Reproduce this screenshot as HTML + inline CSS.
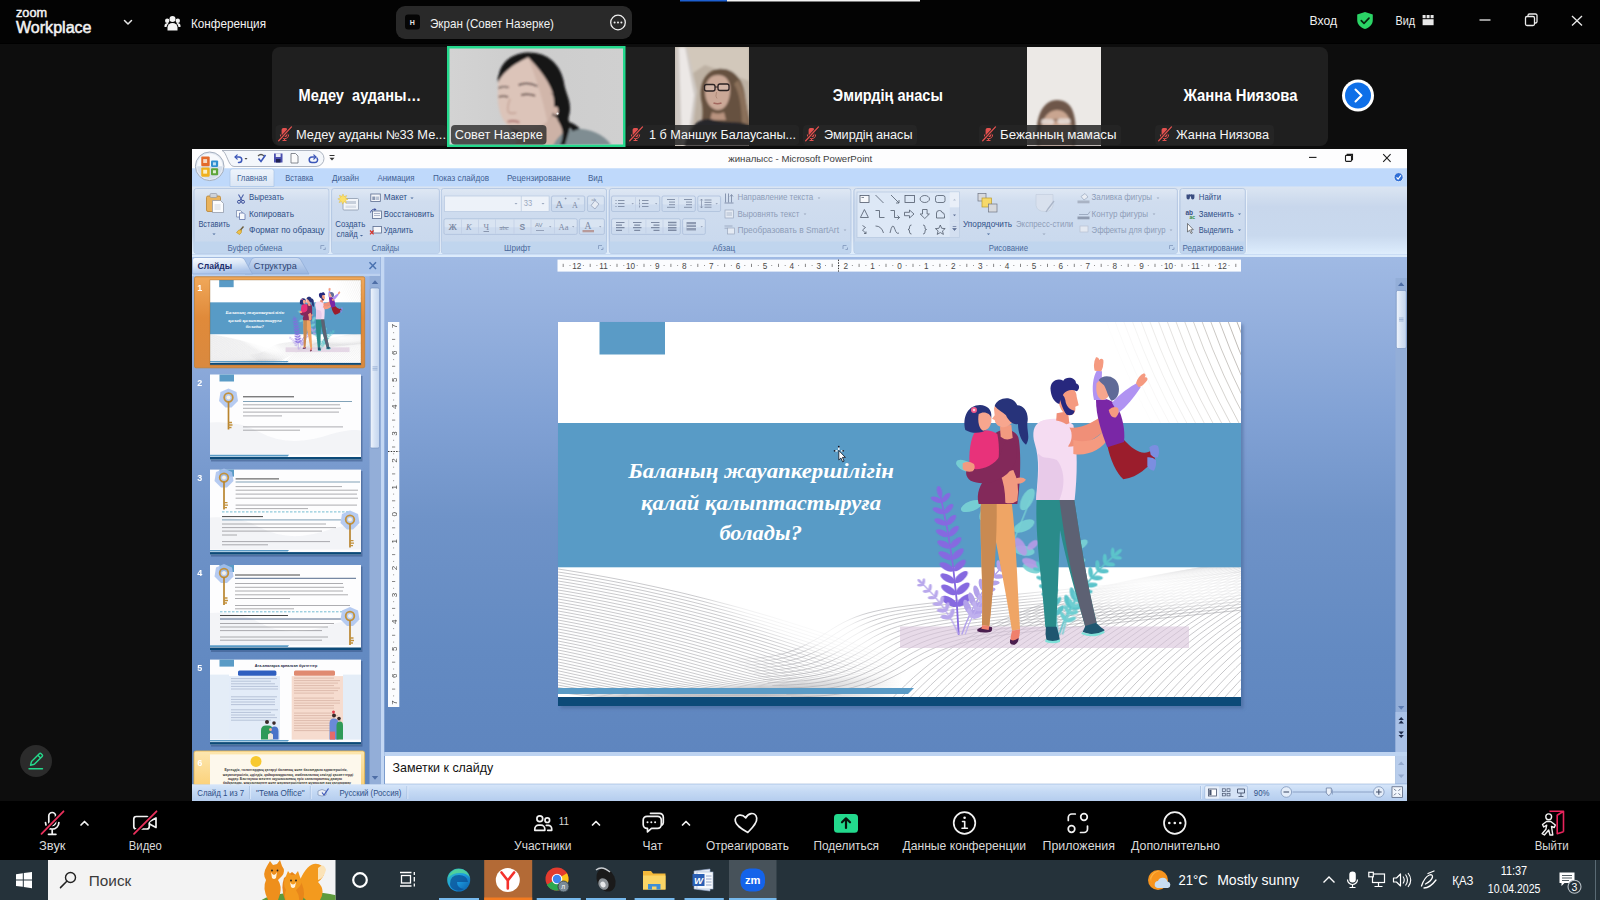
<!DOCTYPE html>
<html lang="ru">
<head>
<meta charset="utf-8">
<title>Zoom Workplace</title>
<style>
*{box-sizing:border-box;margin:0;padding:0}
html,body{width:1600px;height:900px;overflow:hidden;background:#0d0d0d}
body{font-family:"Liberation Sans",sans-serif;color:#fff;position:relative}
.abs{position:absolute}
svg{display:block;overflow:visible}
/* ---------- zoom top bar ---------- */
#topbar{left:0;top:0;width:1600px;height:44px;background:#000}
#topbar .t{position:absolute;white-space:nowrap;color:#f2f2f2}
#pill{left:396px;top:6px;width:236px;height:33px;border-radius:9px;background:#292929}
/* ---------- tiles ---------- */
.tile{top:47px;height:99px;background:#1f1f1f;overflow:hidden}
.tile .big{position:absolute;left:0;right:0;top:37px;text-align:center;font-weight:bold;font-size:17px;color:#fff;white-space:nowrap}
.tile .lab{position:absolute;left:3px;bottom:2px;height:19px;border-radius:4px;background:rgba(32,32,32,.82);font-size:14.5px;line-height:19px;padding:0 5px 0 27px;white-space:nowrap;color:#f5f5f5}
.tile .lab svg{position:absolute;left:6px;top:1px}
/* ---------- ppt ---------- */
#ppt{left:192px;top:149px;width:1215px;height:652px;background:#bfd8f5;overflow:hidden;filter:blur(0.35px);font-family:"Liberation Sans",sans-serif;color:#15428b}
/* ---------- zoom bottom ---------- */
#zbar{left:0;top:801px;width:1600px;height:59px;background:#000}
#zbar .l{position:absolute;top:36px;font-size:13px;color:#e8e8e8;white-space:nowrap;transform:translateX(-50%)}
/* ---------- taskbar ---------- */
#task{left:0;top:860px;width:1600px;height:40px;background:#25323a}
</style>
</head>
<body>
<!-- TOPBAR -->
<div id="topbar" class="abs">
<svg class="abs" width="1600" height="44" viewBox="0 0 1600 44" style="left:0;top:0">
<rect x="0" y="0" width="1600" height="43.300" fill="#030303"/>
<rect x="680" y="0" width="47" height="1.5" fill="#1d5fd0"/><rect x="727" y="0" width="193" height="1.5" fill="#f4f4f4"/>
<g fill="#f3f3f3" font-family="Liberation Sans, sans-serif">
<text x="16" y="16.800" font-size="12" stroke="#f3f3f3" stroke-width="0.450" textLength="31" lengthAdjust="spacingAndGlyphs">zoom</text>
<text x="16" y="33" font-size="16" stroke="#f3f3f3" stroke-width="0.500" textLength="75.500" lengthAdjust="spacingAndGlyphs">Workplace</text>
<path d="M124.500 20.500 L128 24 L131.500 20.500" fill="none" stroke="#e8e8e8" stroke-width="1.500" stroke-linecap="round" stroke-linejoin="round"/>
<g id="ico-people">
<circle cx="172.500" cy="19" r="3"/><circle cx="167.200" cy="20.800" r="2.200"/><circle cx="177.800" cy="20.800" r="2.200"/>
<path d="M167.500 30.500 v-3 a5 4.500 0 0 1 10 0 v3 z"/><path d="M164.500 27 v-1.500 a3 2.600 0 0 1 4 -2.300 a6 6 0 0 0 -2 3.800z"/><path d="M180.500 27 v-1.500 a3 2.600 0 0 0 -4 -2.300 a6 6 0 0 1 2 3.800z"/>
</g>
<text x="191" y="27.500" font-size="13" textLength="75" lengthAdjust="spacingAndGlyphs">Конференция</text>
</g>
<rect x="396" y="6" width="236" height="33" rx="9" fill="#292929"/>
<rect x="405" y="14.500" width="15" height="15" rx="3" fill="#050505"/>
<text x="409.800" y="25" font-family="Liberation Sans, sans-serif" font-size="7" font-weight="bold" fill="#e0e0e0">Н</text>
<text x="430" y="27.500" font-family="Liberation Sans, sans-serif" font-size="13" fill="#f0f0f0" textLength="124" lengthAdjust="spacingAndGlyphs">Экран (Совет Назерке)</text>
<circle cx="618" cy="22.500" r="7.300" fill="none" stroke="#f0f0f0" stroke-width="1.300"/>
<circle cx="614.600" cy="22.500" r="1" fill="#f0f0f0"/><circle cx="618" cy="22.500" r="1" fill="#f0f0f0"/><circle cx="621.400" cy="22.500" r="1" fill="#f0f0f0"/>
<g font-family="Liberation Sans, sans-serif" font-size="13" fill="#f0f0f0">
<text x="1309.500" y="25" textLength="27.500" lengthAdjust="spacingAndGlyphs">Вход</text>
<text x="1395.500" y="25" textLength="19.500" lengthAdjust="spacingAndGlyphs">Вид</text>
</g>
<path d="M1365 12 l7.800 2.600 v5.400 c0 4.600 -3.600 7.600 -7.800 9 c-4.200 -1.400 -7.800 -4.400 -7.800 -9 v-5.400 z" fill="#2bd466"/>
<path d="M1361.300 20.600 l2.700 2.700 l5 -5.200" fill="none" stroke="#06250f" stroke-width="1.700" stroke-linecap="round" stroke-linejoin="round"/>
<g fill="#e8e8e8"><rect x="1422.600" y="15" width="3" height="3.200"/><rect x="1426.600" y="15" width="3" height="3.200"/><rect x="1430.600" y="15" width="3" height="3.200"/><rect x="1422.600" y="19.200" width="11" height="6"/></g>
<g stroke="#eaeaea" stroke-width="1.300" fill="none">
<path d="M1479.500 20 h11"/>
<rect x="1525.500" y="16.500" width="9" height="9" rx="1.500"/><path d="M1528 16.500 v-1 a1.500 1.500 0 0 1 1.500 -1.500 h6 a1.500 1.500 0 0 1 1.500 1.500 v6 a1.500 1.500 0 0 1 -1.500 1.500 h-1"/>
<path d="M1572 16 l10 9.500 M1582 16 l-10 9.500"/>
</g>
</svg>
</div>
<!-- TILES -->
<div id="tiles">
<svg class="abs" width="1600" height="110" viewBox="0 40 1600 110" style="left:0;top:40px">
<defs><g id="micoff"><path d="M3.900 0.300 h2.200 a1.800 1.800 0 0 1 1.800 1.800 v4.400 a2.900 2.900 0 0 1 -5.800 0 v-4.400 a1.800 1.800 0 0 1 1.800 -1.800z" fill="#e2514f"/><path d="M0.900 6.800 a4.100 4.100 0 0 0 8.200 0" fill="none" stroke="#e2514f" stroke-width="1"/><path d="M5 11 v1.800 M3 12.800 h4" stroke="#e2514f" stroke-width="1.100"/><path d="M-0.500 12.800 L11.500 -0.300" stroke="#222222" stroke-width="3"/><path d="M-0.800 13 L12 -0.800" stroke="#e2514f" stroke-width="1.300" stroke-linecap="round"/></g>
<filter id="b1" x="-20%" y="-20%" width="140%" height="140%"><feGaussianBlur stdDeviation="1.200"/></filter>
<filter id="b8" x="-20%" y="-20%" width="140%" height="140%"><feGaussianBlur stdDeviation="7"/></filter>
<filter id="b05" x="-20%" y="-20%" width="140%" height="140%"><feGaussianBlur stdDeviation="0.450"/></filter>
<filter id="b2" x="-20%" y="-20%" width="140%" height="140%"><feGaussianBlur stdDeviation="2.200"/></filter>
<linearGradient id="vbg" x1="0" x2="1" y1="0" y2="0"><stop offset="0" stop-color="#d3d3d3"/><stop offset="0.450" stop-color="#cdcdcd"/><stop offset="1" stop-color="#d0d0d0"/></linearGradient>
<clipPath id="c2"><rect x="449.500" y="48.500" width="173.500" height="96"/></clipPath>
<clipPath id="c3"><rect x="675" y="47" width="74" height="99"/></clipPath>
<clipPath id="c5"><rect x="1027" y="47" width="74" height="99"/></clipPath>
</defs>
<path d="M280 47 H1320 a8 8 0 0 1 8 8 V138 a8 8 0 0 1 -8 8 H280 a8 8 0 0 1 -8 -8 V55 a8 8 0 0 1 8 -8z" fill="#1f1f1f"/>
<!-- tile 2 : active speaker video -->
<rect x="447" y="46" width="178.500" height="101" fill="#24d98d"/>
<rect x="449.500" y="48.500" width="173.500" height="96" fill="url(#vbg)"/>
<g clip-path="url(#c2)">
<g transform="translate(440,40) scale(0.125)">
<g filter="url(#b8)">
<path d="M470 300 C470 200 560 105 700 100 C860 96 960 190 990 330 C1000 420 1045 470 1040 560 C1036 620 1010 650 1020 700 C1040 740 1100 760 1130 800 L1000 840 L700 840 L560 700 Z" fill="#161519"/>
<path d="M465 330 C480 260 560 180 700 130 C760 200 860 300 900 420 C925 520 915 600 860 660 C800 720 700 740 600 720 C520 690 470 600 462 480 Z" fill="#dcc4b9"/>
<path d="M640 700 C760 720 860 680 900 600 L960 640 L1000 760 L900 850 L600 850 Z" fill="#cdb2a6"/>
<path d="M1020 720 C1120 690 1290 720 1370 840 L900 850 C930 800 960 750 1020 720Z" fill="#7f8d92"/>
<path d="M880 420 C940 470 960 560 940 640 C980 700 1000 760 960 840 L1000 840 L1040 700 L1000 480 Z" fill="#161519"/>
<path d="M462 340 C500 262 590 185 715 135 C640 105 505 170 462 300Z" fill="#161519"/>
<path d="M700 130 C760 200 860 300 900 420 C925 520 915 600 860 660 C840 560 800 380 700 130Z" fill="#c9ab9f" opacity="0.550"/>
<path d="M1010 650 q60 10 110 60 l-60 20z" fill="#161519"/>
<ellipse cx="925" cy="565" rx="22" ry="34" fill="#d3b5a9"/>
</g>
<g filter="url(#b8)" opacity="0.850">
<path d="M470 455 q40 -12 75 2" stroke="#4a3836" stroke-width="11" fill="none"/><path d="M650 440 q55 -14 110 6" stroke="#4a3836" stroke-width="12" fill="none"/>
<path d="M468 385 q40 -18 80 -6" stroke="#3a2c2b" stroke-width="9" fill="none"/><path d="M630 360 q70 -30 150 10" stroke="#3a2c2b" stroke-width="11" fill="none"/>
<path d="M540 655 q45 -14 95 4" stroke="#a9706c" stroke-width="16" fill="none"/>
<path d="M560 470 q-30 80 -10 110 q30 14 60 0" stroke="#c4a296" stroke-width="12" fill="none"/>
</g>
<circle cx="940" cy="588" r="9" fill="#f6f6f6"/>
</g>
</g>
<rect x="451" y="125" width="95.500" height="19.500" rx="4" fill="#2a2a2a" fill-opacity="0.800"/>
<!-- tile 3 video -->
<g clip-path="url(#c3)">
<rect x="675" y="47" width="74" height="99" fill="#bdb1a3"/>
<g filter="url(#b1)">
<path d="M675 47 h74 v34 l-44 -16 l-30 20z" fill="#d2c8bb"/>
<path d="M675 47 h12 l10 44 l-6 55 h-16z" fill="#cfc9c4"/>
<path d="M679 47 h6 l9 48 l-7 51 h-5z" fill="#ece8e6"/>
<path d="M702 104 C698 86 704 71 718 69 C734 67 743 80 745 96 C746 110 751 118 750 132 L750 146 L698 146 C700 132 704 118 702 104Z" fill="#66513f"/>
<path d="M738 80 C746 92 748 112 749 130 L742 128 C742 110 740 94 734 84Z" fill="#8a705a"/>
<path d="M705 92 C705 81 710 75 718 75 C727 75 731 82 730 93 C729 104 724 110 718 110 C711 110 705 102 705 92Z" fill="#caa897"/>
<path d="M712 112 q6 3 12 0 l2 8 h-16z" fill="#b8937f"/>
<path d="M684 146 C688 124 702 116 714 120 C728 124 742 120 750 126 L750 146Z" fill="#25252a"/>
</g>
<g filter="url(#b05)">
<rect x="704.500" y="84.500" width="10.500" height="6.500" rx="2" fill="#d9c2b6" fill-opacity="0.500" stroke="#2a2023" stroke-width="1.300"/><rect x="718" y="84" width="11" height="6.500" rx="2" fill="#d9c2b6" fill-opacity="0.500" stroke="#2a2023" stroke-width="1.300"/><path d="M715 87 h3" stroke="#2a2023" stroke-width="1"/>
<path d="M713.500 103 q4 1.500 8 0" stroke="#a2675e" stroke-width="1.600" fill="none"/>
<path d="M716.500 92 q-1.500 5 0.500 6.500" stroke="#b08b79" stroke-width="1" fill="none"/>
</g>
</g>
<!-- tile 5 video -->
<g clip-path="url(#c5)">
<rect x="1027" y="47" width="74" height="99" fill="#ece9e6"/>
<g filter="url(#b1)">
<path d="M1037 146 C1034 116 1043 100 1057 100 C1072 100 1078 114 1075 146Z" fill="#6e5648"/>
<path d="M1040 146 C1038 124 1046 110 1057 110 C1068 110 1074 122 1072 146Z" fill="#c9a590"/>
<path d="M1041 124 q16 -8 30 0" stroke="#6e5648" stroke-width="2.500" fill="none" opacity="0.500"/>
<rect x="1041" y="119" width="13" height="5.500" rx="2.500" fill="#efe6e2" fill-opacity="0.800"/><rect x="1057.500" y="118.500" width="13" height="5.500" rx="2.500" fill="#efe6e2" fill-opacity="0.800"/>
<rect x="1027" y="139" width="74" height="7" fill="#5a4a44" fill-opacity="0.450"/>
</g>
</g>
<!-- labels -->
<g>
<rect x="275.500" y="125" width="171.500" height="20" rx="4" fill="#252525"/>
<rect x="627" y="125" width="172" height="20" rx="4" fill="#262626" fill-opacity="0.850"/>
<rect x="803" y="125" width="114" height="20" rx="4" fill="#252525"/>
<rect x="979" y="125" width="142" height="20" rx="4" fill="#262626" fill-opacity="0.850"/>
<rect x="1155" y="125" width="119" height="20" rx="4" fill="#252525"/>
<use href="#micoff" x="279.500" y="127.700"/><use href="#micoff" x="630.500" y="127.700"/><use href="#micoff" x="806.500" y="127.700"/><use href="#micoff" x="983.500" y="127.700"/><use href="#micoff" x="1159.500" y="127.700"/>
</g>
<g font-family="Liberation Sans, sans-serif" font-size="12.300" fill="#f6f6f6">
<text x="296" y="139" textLength="150" lengthAdjust="spacingAndGlyphs">Медеу ауданы №33 Ме...</text>
<text x="454.800" y="139" textLength="88" lengthAdjust="spacingAndGlyphs">Совет Назерке</text>
<text x="649" y="139" textLength="147" lengthAdjust="spacingAndGlyphs">1 б Маншук Балаусаны...</text>
<text x="824" y="139" textLength="88.500" lengthAdjust="spacingAndGlyphs">Эмирдің анасы</text>
<text x="1000" y="139" textLength="116.500" lengthAdjust="spacingAndGlyphs">Бежанның мамасы</text>
<text x="1176" y="139" textLength="93" lengthAdjust="spacingAndGlyphs">Жанна Ниязова</text>
</g>
<g font-family="Liberation Sans, sans-serif" font-size="15.600" font-weight="bold" fill="#ffffff">
<text x="298.500" y="101" textLength="122.500" lengthAdjust="spacingAndGlyphs" xml:space="preserve">Медеу  ауданы…</text>
<text x="832.800" y="100.800" textLength="110" lengthAdjust="spacingAndGlyphs">Эмирдің анасы</text>
<text x="1183.500" y="100.800" textLength="114" lengthAdjust="spacingAndGlyphs">Жанна Ниязова</text>
</g>
<circle cx="1358" cy="95.500" r="16" fill="#ffffff"/><circle cx="1358" cy="95.500" r="13" fill="#0e6fe8"/>
<path d="M1355.500 89.500 l6 6 l-6 6" fill="none" stroke="#fff" stroke-width="2" stroke-linecap="round" stroke-linejoin="round"/>
</svg>
</div>
<!-- PPT -->
<div id="ppt" class="abs">
<svg id="pptsvg" class="abs" width="1215" height="652" viewBox="192 149 1215 652" style="left:0;top:0" font-family="Liberation Sans, sans-serif">
<defs>
<linearGradient id="gRib" x1="0" x2="0" y1="0" y2="1"><stop offset="0" stop-color="#dbe5f2"/><stop offset="0.180" stop-color="#cfdcee"/><stop offset="0.300" stop-color="#c8d7ec"/><stop offset="0.720" stop-color="#c9d9ee"/><stop offset="0.900" stop-color="#d6e6f8"/><stop offset="1" stop-color="#e0eefc"/></linearGradient>
<linearGradient id="gGrp" x1="0" x2="0" y1="0" y2="1"><stop offset="0" stop-color="#dfe8f4"/><stop offset="0.200" stop-color="#d0ddef"/><stop offset="1" stop-color="#c8d8ed"/></linearGradient>
<linearGradient id="gWork" x1="0" x2="0" y1="0" y2="1"><stop offset="0" stop-color="#a0bae4"/><stop offset="0.100" stop-color="#97b2df"/><stop offset="0.300" stop-color="#82a2d5"/><stop offset="0.500" stop-color="#6f93c8"/><stop offset="0.750" stop-color="#638ac2"/><stop offset="1" stop-color="#5d84be"/></linearGradient>
<linearGradient id="gTab" x1="0" x2="0" y1="0" y2="1"><stop offset="0" stop-color="#eef4fc"/><stop offset="1" stop-color="#dbe6f4"/></linearGradient>
<linearGradient id="gTab1" x1="0" x2="0.300" y1="0" y2="1"><stop offset="0" stop-color="#fbfdff"/><stop offset="0.500" stop-color="#dbe7f7"/><stop offset="1" stop-color="#aac3e9"/></linearGradient>
<linearGradient id="gTab2" x1="0" x2="0" y1="0" y2="1"><stop offset="0" stop-color="#cddcf2"/><stop offset="1" stop-color="#98b5e0"/></linearGradient>
<linearGradient id="gThumbV" x1="0" x2="1" y1="0" y2="0"><stop offset="0" stop-color="#f0f5fc"/><stop offset="0.500" stop-color="#d5e2f4"/><stop offset="1" stop-color="#c2d4ee"/></linearGradient>
<linearGradient id="gSel" x1="0" x2="0" y1="0" y2="1"><stop offset="0" stop-color="#f0a85a"/><stop offset="0.450" stop-color="#e08a3a"/><stop offset="1" stop-color="#d9893f"/></linearGradient>
<linearGradient id="gHov" x1="0" x2="0" y1="0" y2="1"><stop offset="0" stop-color="#fde7b0"/><stop offset="1" stop-color="#fbd27c"/></linearGradient>
<linearGradient id="gStat" x1="0" x2="0" y1="0" y2="1"><stop offset="0" stop-color="#d7e6f9"/><stop offset="0.450" stop-color="#c4d9f4"/><stop offset="1" stop-color="#b5cdee"/></linearGradient>
<linearGradient id="gLineA" gradientUnits="userSpaceOnUse" x1="0" y1="0" x2="345" y2="0"><stop offset="0" stop-color="#a3a3a8"/><stop offset="0.600" stop-color="#a8a8ad"/><stop offset="1" stop-color="#b0b0b4" stop-opacity="0"/></linearGradient>
<linearGradient id="gLineB" gradientUnits="userSpaceOnUse" x1="170" y1="0" x2="683" y2="0"><stop offset="0" stop-color="#b0b0b4" stop-opacity="0"/><stop offset="0.120" stop-color="#a8a8ad"/><stop offset="1" stop-color="#a3a3a8"/></linearGradient>
<filter id="bS" x="-5%" y="-5%" width="110%" height="110%"><feGaussianBlur stdDeviation="1.500"/></filter>
<clipPath id="clipS"><rect x="0" y="0" width="683" height="384"/></clipPath>
<radialGradient id="fadeW"><stop offset="0" stop-color="#fff" stop-opacity="0.950"/><stop offset="0.600" stop-color="#fff" stop-opacity="0.700"/><stop offset="1" stop-color="#fff" stop-opacity="0"/></radialGradient>
<!-- SECTION:slidedef -->
<g id="slide1">
<rect x="0" y="0" width="683" height="384" fill="#ffffff"/>
<g fill="none" stroke="#a9a49d" stroke-width="0.800" clip-path="url(#clipS)"><path d="M679.0 0 Q699.0 55 725.0 102" stroke-opacity="1.00"/><path d="M670.3 0 Q690.3 55 716.3 102" stroke-opacity="0.92"/><path d="M661.6 0 Q681.6 55 707.6 102" stroke-opacity="0.84"/><path d="M652.9 0 Q672.9 55 698.9 102" stroke-opacity="0.76"/><path d="M644.2 0 Q664.2 55 690.2 102" stroke-opacity="0.69"/><path d="M635.5 0 Q655.5 55 681.5 102" stroke-opacity="0.61"/><path d="M626.8 0 Q646.8 55 672.8 102" stroke-opacity="0.54"/><path d="M618.1 0 Q638.1 55 664.1 102" stroke-opacity="0.47"/><path d="M609.4 0 Q629.4 55 655.4 102" stroke-opacity="0.41"/><path d="M600.7 0 Q620.7 55 646.7 102" stroke-opacity="0.34"/><path d="M592.0 0 Q612.0 55 638.0 102" stroke-opacity="0.28"/><path d="M583.3 0 Q603.3 55 629.3 102" stroke-opacity="0.22"/><path d="M574.6 0 Q594.6 55 620.6 102" stroke-opacity="0.16"/><path d="M565.9 0 Q585.9 55 611.9 102" stroke-opacity="0.11"/><path d="M557.2 0 Q577.2 55 603.2 102" stroke-opacity="0.07"/><path d="M548.5 0 Q568.5 55 594.5 102" stroke-opacity="0.03"/></g>
<g fill="none" stroke="url(#gLineA)" stroke-width="0.600" clip-path="url(#clipS)"><path d="M0 247.0 L8 248.2 L16 249.5 L24 250.8 L32 252.2 L40 253.6 L48 255.0 L56 256.5 L64 258.0 L72 259.6 L80 261.2 L88 262.9 L96 264.6 L104 266.4 L112 268.2 L120 270.0 L128 271.9 L136 273.9 L144 275.9 L152 277.9 L160 280.0 L168 282.1 L176 284.2 L184 286.4 L192 288.7 L200 291.0 L208 293.3 L216 295.7 L224 298.2 L232 300.6 L240 303.2 L248 305.7 L256 308.3 L264 311.0 L272 313.7 L280 316.4 L288 319.2 L296 322.0 L304 324.9 L312 327.7 L320 330.6 L328 333.5 L336 336.3 L344 339.0"/><path d="M0 250.0 L8 251.2 L16 252.5 L24 253.8 L32 255.2 L40 256.6 L48 258.1 L56 259.6 L64 261.2 L72 262.8 L80 264.4 L88 266.1 L96 267.8 L104 269.6 L112 271.4 L120 273.3 L128 275.2 L136 277.1 L144 279.1 L152 281.2 L160 283.3 L168 285.4 L176 287.6 L184 289.8 L192 292.1 L200 294.4 L208 296.7 L216 299.1 L224 301.6 L232 304.1 L240 306.6 L248 309.2 L256 311.8 L264 314.5 L272 317.2 L280 319.9 L288 322.7 L296 325.5 L304 328.4 L312 331.2 L320 334.1 L328 336.8 L336 339.5 L344 342.0"/><path d="M0 253.0 L8 254.3 L16 255.6 L24 256.9 L32 258.3 L40 259.7 L48 261.2 L56 262.7 L64 264.3 L72 265.9 L80 267.5 L88 269.2 L96 271.0 L104 272.8 L112 274.6 L120 276.5 L128 278.4 L136 280.4 L144 282.4 L152 284.5 L160 286.6 L168 288.7 L176 290.9 L184 293.2 L192 295.4 L200 297.8 L208 300.1 L216 302.6 L224 305.0 L232 307.5 L240 310.1 L248 312.7 L256 315.3 L264 318.0 L272 320.7 L280 323.4 L288 326.2 L296 329.0 L304 331.9 L312 334.7 L320 337.4 L328 340.1 L336 342.6 L344 344.8"/><path d="M0 256.0 L8 257.3 L16 258.6 L24 259.9 L32 261.3 L40 262.8 L48 264.3 L56 265.8 L64 267.4 L72 269.0 L80 270.7 L88 272.4 L96 274.2 L104 276.0 L112 277.8 L120 279.7 L128 281.7 L136 283.7 L144 285.7 L152 287.8 L160 289.9 L168 292.0 L176 294.2 L184 296.5 L192 298.8 L200 301.1 L208 303.5 L216 306.0 L224 308.4 L232 311.0 L240 313.5 L248 316.1 L256 318.8 L264 321.5 L272 324.2 L280 326.9 L288 329.7 L296 332.5 L304 335.3 L312 338.0 L320 340.7 L328 343.1 L336 345.4 L344 347.2"/><path d="M0 259.0 L8 260.3 L16 261.6 L24 263.0 L32 264.4 L40 265.9 L48 267.4 L56 268.9 L64 270.5 L72 272.2 L80 273.8 L88 275.6 L96 277.4 L104 279.2 L112 281.0 L120 283.0 L128 284.9 L136 286.9 L144 289.0 L152 291.0 L160 293.2 L168 295.4 L176 297.6 L184 299.9 L192 302.2 L200 304.5 L208 306.9 L216 309.4 L224 311.9 L232 314.4 L240 317.0 L248 319.6 L256 322.2 L264 324.9 L272 327.7 L280 330.4 L288 333.2 L296 335.9 L304 338.6 L312 341.2 L320 343.7 L328 345.9 L336 347.8 L344 349.3"/><path d="M0 262.0 L8 263.3 L16 264.6 L24 266.0 L32 267.5 L40 268.9 L48 270.5 L56 272.0 L64 273.6 L72 275.3 L80 277.0 L88 278.7 L96 280.5 L104 282.4 L112 284.3 L120 286.2 L128 288.2 L136 290.2 L144 292.2 L152 294.3 L160 296.5 L168 298.7 L176 300.9 L184 303.2 L192 305.5 L200 307.9 L208 310.3 L216 312.8 L224 315.3 L232 317.8 L240 320.4 L248 323.0 L256 325.7 L264 328.4 L272 331.1 L280 333.9 L288 336.6 L296 339.3 L304 341.8 L312 344.3 L320 346.5 L328 348.4 L336 349.9 L344 351.0"/><path d="M0 265.0 L8 266.3 L16 267.7 L24 269.1 L32 270.5 L40 272.0 L48 273.6 L56 275.1 L64 276.8 L72 278.4 L80 280.2 L88 281.9 L96 283.7 L104 285.6 L112 287.5 L120 289.4 L128 291.4 L136 293.4 L144 295.5 L152 297.6 L160 299.8 L168 302.0 L176 304.3 L184 306.6 L192 308.9 L200 311.3 L208 313.7 L216 316.2 L224 318.7 L232 321.3 L240 323.9 L248 326.5 L256 329.2 L264 331.9 L272 334.6 L280 337.2 L288 339.9 L296 342.5 L304 344.9 L312 347.0 L320 348.9 L328 350.4 L336 351.6 L344 352.4"/><path d="M0 268.0 L8 269.3 L16 270.7 L24 272.1 L32 273.6 L40 275.1 L48 276.6 L56 278.2 L64 279.9 L72 281.6 L80 283.3 L88 285.1 L96 286.9 L104 288.8 L112 290.7 L120 292.6 L128 294.6 L136 296.7 L144 298.8 L152 300.9 L160 303.1 L168 305.3 L176 307.6 L184 309.9 L192 312.3 L200 314.7 L208 317.1 L216 319.6 L224 322.1 L232 324.7 L240 327.3 L248 329.9 L256 332.6 L264 335.3 L272 337.9 L280 340.5 L288 343.1 L296 345.5 L304 347.6 L312 349.5 L320 351.0 L328 352.1 L336 352.9 L344 353.5"/><path d="M0 271.0 L8 272.3 L16 273.7 L24 275.2 L32 276.6 L40 278.2 L48 279.7 L56 281.4 L64 283.0 L72 284.7 L80 286.5 L88 288.3 L96 290.1 L104 292.0 L112 293.9 L120 295.9 L128 297.9 L136 299.9 L144 302.1 L152 304.2 L160 306.4 L168 308.6 L176 310.9 L184 313.2 L192 315.6 L200 318.0 L208 320.5 L216 323.0 L224 325.5 L232 328.1 L240 330.7 L248 333.3 L256 336.0 L264 338.6 L272 341.2 L280 343.7 L288 346.1 L296 348.2 L304 350.1 L312 351.6 L320 352.7 L328 353.5 L336 354.1 L344 354.4"/><path d="M0 274.0 L8 275.4 L16 276.8 L24 278.2 L32 279.7 L40 281.2 L48 282.8 L56 284.5 L64 286.1 L72 287.8 L80 289.6 L88 291.4 L96 293.3 L104 295.2 L112 297.1 L120 299.1 L128 301.1 L136 303.2 L144 305.3 L152 307.5 L160 309.7 L168 312.0 L176 314.3 L184 316.6 L192 319.0 L200 321.4 L208 323.9 L216 326.4 L224 328.9 L232 331.5 L240 334.1 L248 336.7 L256 339.3 L264 341.9 L272 344.4 L280 346.7 L288 348.8 L296 350.7 L304 352.2 L312 353.3 L320 354.1 L328 354.7 L336 355.0 L344 355.2"/><path d="M0 277.0 L8 278.4 L16 279.8 L24 281.3 L32 282.8 L40 284.3 L48 285.9 L56 287.6 L64 289.3 L72 291.0 L80 292.8 L88 294.6 L96 296.5 L104 298.4 L112 300.3 L120 302.3 L128 304.4 L136 306.5 L144 308.6 L152 310.8 L160 313.0 L168 315.3 L176 317.6 L184 319.9 L192 322.3 L200 324.8 L208 327.3 L216 329.8 L224 332.3 L232 334.9 L240 337.5 L248 340.0 L256 342.6 L264 345.0 L272 347.3 L280 349.4 L288 351.2 L296 352.7 L304 353.9 L312 354.7 L320 355.3 L328 355.6 L336 355.9 L344 356.0"/><path d="M0 280.0 L8 281.4 L16 282.8 L24 284.3 L32 285.8 L40 287.4 L48 289.0 L56 290.7 L64 292.4 L72 294.1 L80 295.9 L88 297.8 L96 299.6 L104 301.6 L112 303.5 L120 305.6 L128 307.6 L136 309.7 L144 311.9 L152 314.1 L160 316.3 L168 318.6 L176 320.9 L184 323.3 L192 325.7 L200 328.1 L208 330.6 L216 333.1 L224 335.7 L232 338.2 L240 340.8 L248 343.3 L256 345.7 L264 348.0 L272 350.0 L280 351.9 L288 353.3 L296 354.5 L304 355.3 L312 355.9 L320 356.2 L328 356.5 L336 356.6 L344 356.7"/><path d="M0 283.0 L8 284.4 L16 285.9 L24 287.4 L32 288.9 L40 290.5 L48 292.1 L56 293.8 L64 295.5 L72 297.3 L80 299.1 L88 300.9 L96 302.8 L104 304.8 L112 306.7 L120 308.8 L128 310.9 L136 313.0 L144 315.1 L152 317.4 L160 319.6 L168 321.9 L176 324.2 L184 326.6 L192 329.0 L200 331.5 L208 334.0 L216 336.5 L224 339.0 L232 341.5 L240 344.0 L248 346.4 L256 348.6 L264 350.7 L272 352.5 L280 353.9 L288 355.1 L296 355.9 L304 356.5 L312 356.8 L320 357.1 L328 357.2 L336 357.3 L344 357.4"/><path d="M0 286.0 L8 287.4 L16 288.9 L24 290.4 L32 292.0 L40 293.6 L48 295.2 L56 296.9 L64 298.6 L72 300.4 L80 302.2 L88 304.1 L96 306.0 L104 308.0 L112 310.0 L120 312.0 L128 314.1 L136 316.2 L144 318.4 L152 320.6 L160 322.9 L168 325.2 L176 327.6 L184 330.0 L192 332.4 L200 334.8 L208 337.3 L216 339.8 L224 342.3 L232 344.7 L240 347.1 L248 349.3 L256 351.3 L264 353.1 L272 354.5 L280 355.7 L288 356.5 L296 357.1 L304 357.4 L312 357.7 L320 357.8 L328 357.9 L336 358.0 L344 358.0"/><path d="M0 289.0 L8 290.4 L16 291.9 L24 293.4 L32 295.0 L40 296.6 L48 298.3 L56 300.0 L64 301.7 L72 303.5 L80 305.4 L88 307.3 L96 309.2 L104 311.2 L112 313.2 L120 315.2 L128 317.3 L136 319.5 L144 321.7 L152 323.9 L160 326.2 L168 328.5 L176 330.9 L184 333.3 L192 335.7 L200 338.1 L208 340.6 L216 343.0 L224 345.4 L232 347.8 L240 350.0 L248 352.0 L256 353.7 L264 355.2 L272 356.3 L280 357.1 L288 357.7 L296 358.0 L304 358.3 L312 358.4 L320 358.5 L328 358.6 L336 358.6 L344 358.6"/><path d="M0 292.0 L8 293.5 L16 294.9 L24 296.5 L32 298.1 L40 299.7 L48 301.4 L56 303.1 L64 304.9 L72 306.7 L80 308.5 L88 310.4 L96 312.4 L104 314.4 L112 316.4 L120 318.5 L128 320.6 L136 322.7 L144 325.0 L152 327.2 L160 329.5 L168 331.8 L176 334.2 L184 336.6 L192 339.0 L200 341.4 L208 343.8 L216 346.2 L224 348.5 L232 350.6 L240 352.6 L248 354.3 L256 355.8 L264 356.9 L272 357.7 L280 358.3 L288 358.7 L296 358.9 L304 359.1 L312 359.1 L320 359.2 L328 359.2 L336 359.3 L344 359.3"/><path d="M0 295.0 L8 296.5 L16 298.0 L24 299.5 L32 301.1 L40 302.8 L48 304.5 L56 306.2 L64 308.0 L72 309.8 L80 311.7 L88 313.6 L96 315.5 L104 317.5 L112 319.6 L120 321.7 L128 323.8 L136 326.0 L144 328.2 L152 330.5 L160 332.8 L168 335.1 L176 337.5 L184 339.8 L192 342.2 L200 344.6 L208 346.9 L216 349.2 L224 351.3 L232 353.3 L240 355.0 L248 356.4 L256 357.5 L264 358.3 L272 358.9 L280 359.3 L288 359.5 L296 359.7 L304 359.8 L312 359.8 L320 359.9 L328 359.9 L336 359.9 L344 359.9"/><path d="M0 298.0 L8 299.5 L16 301.0 L24 302.6 L32 304.2 L40 305.9 L48 307.6 L56 309.3 L64 311.1 L72 312.9 L80 314.8 L88 316.8 L96 318.7 L104 320.7 L112 322.8 L120 324.9 L128 327.1 L136 329.2 L144 331.5 L152 333.7 L160 336.0 L168 338.4 L176 340.7 L184 343.1 L192 345.4 L200 347.7 L208 349.9 L216 352.0 L224 354.0 L232 355.6 L240 357.0 L248 358.1 L256 358.9 L264 359.5 L272 359.9 L280 360.1 L288 360.3 L296 360.4 L304 360.4 L312 360.5 L320 360.5 L328 360.5 L336 360.5 L344 360.5"/><path d="M0 301.0 L8 302.5 L16 304.0 L24 305.6 L32 307.3 L40 308.9 L48 310.7 L56 312.4 L64 314.2 L72 316.1 L80 318.0 L88 319.9 L96 321.9 L104 323.9 L112 326.0 L120 328.1 L128 330.3 L136 332.5 L144 334.7 L152 337.0 L160 339.3 L168 341.6 L176 343.9 L184 346.2 L192 348.5 L200 350.7 L208 352.8 L216 354.7 L224 356.3 L232 357.7 L240 358.7 L248 359.5 L256 360.1 L264 360.5 L272 360.7 L280 360.9 L288 361.0 L296 361.1 L304 361.1 L312 361.1 L320 361.1 L328 361.1 L336 361.1 L344 361.1"/><path d="M0 304.0 L8 305.5 L16 307.1 L24 308.7 L32 310.3 L40 312.0 L48 313.7 L56 315.5 L64 317.3 L72 319.2 L80 321.1 L88 323.1 L96 325.1 L104 327.1 L112 329.2 L120 331.3 L128 333.5 L136 335.7 L144 338.0 L152 340.2 L160 342.5 L168 344.8 L176 347.1 L184 349.3 L192 351.5 L200 353.5 L208 355.3 L216 357.0 L224 358.3 L232 359.4 L240 360.2 L248 360.7 L256 361.1 L264 361.3 L272 361.5 L280 361.6 L288 361.7 L296 361.7 L304 361.7 L312 361.7 L320 361.8 L328 361.8 L336 361.8 L344 361.8"/><path d="M0 307.0 L8 308.5 L16 310.1 L24 311.7 L32 313.4 L40 315.1 L48 316.8 L56 318.6 L64 320.5 L72 322.3 L80 324.3 L88 326.2 L96 328.3 L104 330.3 L112 332.4 L120 334.6 L128 336.7 L136 338.9 L144 341.2 L152 343.4 L160 345.7 L168 347.9 L176 350.1 L184 352.2 L192 354.2 L200 356.1 L208 357.6 L216 359.0 L224 360.0 L232 360.8 L240 361.3 L248 361.7 L256 362.0 L264 362.1 L272 362.2 L280 362.3 L288 362.3 L296 362.3 L304 362.4 L312 362.4 L320 362.4 L328 362.4 L336 362.4 L344 362.4"/><path d="M0 310.0 L8 311.5 L16 313.1 L24 314.8 L32 316.4 L40 318.2 L48 319.9 L56 321.7 L64 323.6 L72 325.5 L80 327.4 L88 329.4 L96 331.4 L104 333.5 L112 335.6 L120 337.8 L128 339.9 L136 342.1 L144 344.3 L152 346.6 L160 348.8 L168 350.9 L176 353.0 L184 355.0 L192 356.8 L200 358.3 L208 359.6 L216 360.6 L224 361.4 L232 361.9 L240 362.3 L248 362.6 L256 362.7 L264 362.8 L272 362.9 L280 362.9 L288 363.0 L296 363.0 L304 363.0 L312 363.0 L320 363.0 L328 363.0 L336 363.0 L344 363.0"/><path d="M0 313.0 L8 314.6 L16 316.2 L24 317.8 L32 319.5 L40 321.2 L48 323.0 L56 324.8 L64 326.7 L72 328.6 L80 330.6 L88 332.6 L96 334.6 L104 336.7 L112 338.8 L120 340.9 L128 343.1 L136 345.3 L144 347.5 L152 349.6 L160 351.8 L168 353.8 L176 355.7 L184 357.5 L192 359.0 L200 360.3 L208 361.3 L216 362.0 L224 362.6 L232 362.9 L240 363.2 L248 363.4 L256 363.5 L264 363.5 L272 363.6 L280 363.6 L288 363.6 L296 363.6 L304 363.6 L312 363.6 L320 363.6 L328 363.6 L336 363.6 L344 363.6"/><path d="M0 316.0 L8 317.6 L16 319.2 L24 320.8 L32 322.6 L40 324.3 L48 326.1 L56 327.9 L64 329.8 L72 331.7 L80 333.7 L88 335.7 L96 337.8 L104 339.8 L112 341.9 L120 344.1 L128 346.2 L136 348.4 L144 350.5 L152 352.6 L160 354.6 L168 356.5 L176 358.2 L184 359.7 L192 360.9 L200 361.9 L208 362.7 L216 363.2 L224 363.6 L232 363.8 L240 364.0 L248 364.1 L256 364.1 L264 364.2 L272 364.2 L280 364.2 L288 364.2 L296 364.2 L304 364.2 L312 364.2 L320 364.2 L328 364.2 L336 364.2 L344 364.2"/><path d="M0 319.0 L8 320.6 L16 322.2 L24 323.9 L32 325.6 L40 327.4 L48 329.2 L56 331.0 L64 332.9 L72 334.9 L80 336.8 L88 338.9 L96 340.9 L104 343.0 L112 345.1 L120 347.2 L128 349.3 L136 351.4 L144 353.5 L152 355.4 L160 357.3 L168 359.0 L176 360.4 L184 361.6 L192 362.6 L200 363.3 L208 363.8 L216 364.2 L224 364.4 L232 364.6 L240 364.7 L248 364.8 L256 364.8 L264 364.8 L272 364.8 L280 364.8 L288 364.8 L296 364.9 L304 364.9 L312 364.9 L320 364.9 L328 364.9 L336 364.9 L344 364.9"/><path d="M0 322.0 L8 323.6 L16 325.2 L24 326.9 L32 328.7 L40 330.4 L48 332.3 L56 334.1 L64 336.0 L72 338.0 L80 340.0 L88 342.0 L96 344.0 L104 346.1 L112 348.2 L120 350.3 L128 352.3 L136 354.3 L144 356.3 L152 358.1 L160 359.7 L168 361.1 L176 362.3 L184 363.2 L192 363.9 L200 364.4 L208 364.8 L216 365.0 L224 365.2 L232 365.3 L240 365.4 L248 365.4 L256 365.4 L264 365.5 L272 365.5 L280 365.5 L288 365.5 L296 365.5 L304 365.5 L312 365.5 L320 365.5 L328 365.5 L336 365.5 L344 365.5"/><path d="M0 325.0 L8 326.6 L16 328.3 L24 330.0 L32 331.7 L40 333.5 L48 335.3 L56 337.2 L64 339.1 L72 341.1 L80 343.1 L88 345.1 L96 347.1 L104 349.2 L112 351.2 L120 353.2 L128 355.2 L136 357.1 L144 358.9 L152 360.4 L160 361.8 L168 363.0 L176 363.9 L184 364.6 L192 365.1 L200 365.4 L208 365.7 L216 365.8 L224 365.9 L232 366.0 L240 366.0 L248 366.1 L256 366.1 L264 366.1 L272 366.1 L280 366.1 L288 366.1 L296 366.1 L304 366.1 L312 366.1 L320 366.1 L328 366.1 L336 366.1 L344 366.1"/><path d="M0 328.0 L8 329.6 L16 331.3 L24 333.0 L32 334.8 L40 336.6 L48 338.4 L56 340.3 L64 342.2 L72 344.2 L80 346.2 L88 348.2 L96 350.2 L104 352.2 L112 354.2 L120 356.1 L128 357.9 L136 359.7 L144 361.2 L152 362.6 L160 363.7 L168 364.6 L176 365.2 L184 365.7 L192 366.0 L200 366.3 L208 366.4 L216 366.5 L224 366.6 L232 366.6 L240 366.7 L248 366.7 L256 366.7 L264 366.7 L272 366.7 L280 366.7 L288 366.7 L296 366.7 L304 366.7 L312 366.7 L320 366.7 L328 366.7 L336 366.7 L344 366.7"/><path d="M0 331.0 L8 332.6 L16 334.3 L24 336.0 L32 337.8 L40 339.6 L48 341.5 L56 343.4 L64 345.3 L72 347.2 L80 349.2 L88 351.2 L96 353.2 L104 355.1 L112 357.0 L120 358.8 L128 360.5 L136 362.0 L144 363.3 L152 364.4 L160 365.2 L168 365.9 L176 366.3 L184 366.7 L192 366.9 L200 367.1 L208 367.2 L216 367.2 L224 367.3 L232 367.3 L240 367.3 L248 367.3 L256 367.3 L264 367.3 L272 367.3 L280 367.3 L288 367.3 L296 367.3 L304 367.3 L312 367.3 L320 367.3 L328 367.3 L336 367.3 L344 367.3"/><path d="M0 334.0 L8 335.6 L16 337.3 L24 339.1 L32 340.9 L40 342.7 L48 344.5 L56 346.4 L64 348.3 L72 350.3 L80 352.2 L88 354.1 L96 356.0 L104 357.9 L112 359.6 L120 361.3 L128 362.7 L136 364.0 L144 365.1 L152 365.9 L160 366.5 L168 367.0 L176 367.3 L184 367.5 L192 367.7 L200 367.8 L208 367.8 L216 367.9 L224 367.9 L232 367.9 L240 367.9 L248 367.9 L256 367.9 L264 367.9 L272 368.0 L280 368.0 L288 368.0 L296 368.0 L304 368.0 L312 368.0 L320 368.0 L328 368.0 L336 368.0 L344 368.0"/><path d="M0 337.0 L8 338.6 L16 340.3 L24 342.1 L32 343.9 L40 345.7 L48 347.6 L56 349.4 L64 351.3 L72 353.2 L80 355.1 L88 357.0 L96 358.8 L104 360.5 L112 362.1 L120 363.5 L128 364.7 L136 365.8 L144 366.6 L152 367.2 L160 367.6 L168 367.9 L176 368.2 L184 368.3 L192 368.4 L200 368.5 L208 368.5 L216 368.5 L224 368.5 L232 368.6 L240 368.6 L248 368.6 L256 368.6 L264 368.6 L272 368.6 L280 368.6 L288 368.6 L296 368.6 L304 368.6 L312 368.6 L320 368.6 L328 368.6 L336 368.6 L344 368.6"/><path d="M0 340.0 L8 341.6 L16 343.4 L24 345.1 L32 346.9 L40 348.7 L48 350.6 L56 352.4 L64 354.3 L72 356.1 L80 358.0 L88 359.7 L96 361.4 L104 362.9 L112 364.3 L120 365.5 L128 366.5 L136 367.2 L144 367.8 L152 368.3 L160 368.6 L168 368.8 L176 368.9 L184 369.0 L192 369.1 L200 369.1 L208 369.1 L216 369.2 L224 369.2 L232 369.2 L240 369.2 L248 369.2 L256 369.2 L264 369.2 L272 369.2 L280 369.2 L288 369.2 L296 369.2 L304 369.2 L312 369.2 L320 369.2 L328 369.2 L336 369.2 L344 369.2"/><path d="M0 342.9 L8 344.6 L16 346.3 L24 348.1 L32 349.9 L40 351.7 L48 353.5 L56 355.3 L64 357.2 L72 358.9 L80 360.6 L88 362.3 L96 363.8 L104 365.1 L112 366.2 L120 367.2 L128 367.9 L136 368.5 L144 368.9 L152 369.2 L160 369.4 L168 369.5 L176 369.6 L184 369.7 L192 369.7 L200 369.8 L208 369.8 L216 369.8 L224 369.8 L232 369.8 L240 369.8 L248 369.8 L256 369.8 L264 369.8 L272 369.8 L280 369.8 L288 369.8 L296 369.8 L304 369.8 L312 369.8 L320 369.8 L328 369.8 L336 369.8 L344 369.8"/><path d="M0 345.9 L8 347.6 L16 349.3 L24 351.1 L32 352.8 L40 354.6 L48 356.4 L56 358.2 L64 359.9 L72 361.6 L80 363.2 L88 364.6 L96 365.9 L104 367.0 L112 367.9 L120 368.6 L128 369.1 L136 369.5 L144 369.8 L152 370.0 L160 370.2 L168 370.3 L176 370.3 L184 370.4 L192 370.4 L200 370.4 L208 370.4 L216 370.4 L224 370.4 L232 370.4 L240 370.4 L248 370.4 L256 370.4 L264 370.4 L272 370.4 L280 370.4 L288 370.4 L296 370.4 L304 370.4 L312 370.4 L320 370.4 L328 370.4 L336 370.4 L344 370.4"/><path d="M0 348.8 L8 350.5 L16 352.3 L24 354.0 L32 355.7 L40 357.5 L48 359.2 L56 360.9 L64 362.5 L72 364.0 L80 365.4 L88 366.7 L96 367.7 L104 368.6 L112 369.3 L120 369.8 L128 370.2 L136 370.5 L144 370.7 L152 370.8 L160 370.9 L168 370.9 L176 371.0 L184 371.0 L192 371.0 L200 371.0 L208 371.0 L216 371.0 L224 371.0 L232 371.0 L240 371.0 L248 371.0 L256 371.0 L264 371.0 L272 371.0 L280 371.0 L288 371.0 L296 371.0 L304 371.0 L312 371.0 L320 371.0 L328 371.0 L336 371.0 L344 371.0"/><path d="M0 351.8 L8 353.5 L16 355.2 L24 356.9 L32 358.6 L40 360.3 L48 361.9 L56 363.5 L64 364.9 L72 366.3 L80 367.5 L88 368.5 L96 369.3 L104 370.0 L112 370.5 L120 370.8 L128 371.1 L136 371.3 L144 371.4 L152 371.5 L160 371.6 L168 371.6 L176 371.6 L184 371.6 L192 371.6 L200 371.7 L208 371.7 L216 371.7 L224 371.7 L232 371.7 L240 371.7 L248 371.7 L256 371.7 L264 371.7 L272 371.7 L280 371.7 L288 371.7 L296 371.7 L304 371.7 L312 371.7 L320 371.7 L328 371.7 L336 371.7 L344 371.7"/><path d="M0 354.7 L8 356.3 L16 358.0 L24 359.7 L32 361.3 L40 362.9 L48 364.4 L56 365.8 L64 367.1 L72 368.3 L80 369.2 L88 370.0 L96 370.6 L104 371.1 L112 371.5 L120 371.7 L128 371.9 L136 372.0 L144 372.1 L152 372.2 L160 372.2 L168 372.2 L176 372.3 L184 372.3 L192 372.3 L200 372.3 L208 372.3 L216 372.3 L224 372.3 L232 372.3 L240 372.3 L248 372.3 L256 372.3 L264 372.3 L272 372.3 L280 372.3 L288 372.3 L296 372.3 L304 372.3 L312 372.3 L320 372.3 L328 372.3 L336 372.3 L344 372.3"/><path d="M0 357.5 L8 359.1 L16 360.8 L24 362.4 L32 363.9 L40 365.4 L48 366.7 L56 368.0 L64 369.1 L72 370.0 L80 370.7 L88 371.3 L96 371.8 L104 372.1 L112 372.4 L120 372.5 L128 372.7 L136 372.7 L144 372.8 L152 372.8 L160 372.9 L168 372.9 L176 372.9 L184 372.9 L192 372.9 L200 372.9 L208 372.9 L216 372.9 L224 372.9 L232 372.9 L240 372.9 L248 372.9 L256 372.9 L264 372.9 L272 372.9 L280 372.9 L288 372.9 L296 372.9 L304 372.9 L312 372.9 L320 372.9 L328 372.9 L336 372.9 L344 372.9"/><path d="M0 360.3 L8 361.9 L16 363.4 L24 364.9 L32 366.3 L40 367.6 L48 368.8 L56 369.9 L64 370.7 L72 371.4 L80 372.0 L88 372.4 L96 372.8 L104 373.0 L112 373.2 L120 373.3 L128 373.4 L136 373.4 L144 373.5 L152 373.5 L160 373.5 L168 373.5 L176 373.5 L184 373.5 L192 373.5 L200 373.5 L208 373.5 L216 373.5 L224 373.5 L232 373.5 L240 373.5 L248 373.5 L256 373.5 L264 373.5 L272 373.5 L280 373.5 L288 373.5 L296 373.5 L304 373.5 L312 373.5 L320 373.5 L328 373.5 L336 373.5 L344 373.5"/><path d="M0 363.0 L8 364.5 L16 365.9 L24 367.3 L32 368.5 L40 369.7 L48 370.7 L56 371.5 L64 372.2 L72 372.7 L80 373.1 L88 373.4 L96 373.6 L104 373.8 L112 373.9 L120 374.0 L128 374.0 L136 374.1 L144 374.1 L152 374.1 L160 374.1 L168 374.1 L176 374.1 L184 374.1 L192 374.1 L200 374.1 L208 374.1 L216 374.1 L224 374.1 L232 374.1 L240 374.1 L248 374.1 L256 374.1 L264 374.1 L272 374.1 L280 374.1 L288 374.1 L296 374.1 L304 374.1 L312 374.1 L320 374.1 L328 374.1 L336 374.1 L344 374.1"/><path d="M0 365.5 L8 366.9 L16 368.2 L24 369.4 L32 370.5 L40 371.5 L48 372.2 L56 372.9 L64 373.4 L72 373.8 L80 374.1 L88 374.3 L96 374.4 L104 374.5 L112 374.6 L120 374.7 L128 374.7 L136 374.7 L144 374.7 L152 374.7 L160 374.8 L168 374.8 L176 374.8 L184 374.8 L192 374.8 L200 374.8 L208 374.8 L216 374.8 L224 374.8 L232 374.8 L240 374.8 L248 374.8 L256 374.8 L264 374.8 L272 374.8 L280 374.8 L288 374.8 L296 374.8 L304 374.8 L312 374.8 L320 374.8 L328 374.8 L336 374.8 L344 374.8"/><path d="M0 367.9 L8 369.2 L16 370.3 L24 371.4 L32 372.3 L40 373.0 L48 373.6 L56 374.1 L64 374.4 L72 374.7 L80 374.9 L88 375.1 L96 375.2 L104 375.2 L112 375.3 L120 375.3 L128 375.3 L136 375.4 L144 375.4 L152 375.4 L160 375.4 L168 375.4 L176 375.4 L184 375.4 L192 375.4 L200 375.4 L208 375.4 L216 375.4 L224 375.4 L232 375.4 L240 375.4 L248 375.4 L256 375.4 L264 375.4 L272 375.4 L280 375.4 L288 375.4 L296 375.4 L304 375.4 L312 375.4 L320 375.4 L328 375.4 L336 375.4 L344 375.4"/><path d="M0 370.2 L8 371.2 L16 372.2 L24 373.0 L32 373.7 L40 374.3 L48 374.8 L56 375.1 L64 375.4 L72 375.6 L80 375.7 L88 375.8 L96 375.9 L104 375.9 L112 375.9 L120 376.0 L128 376.0 L136 376.0 L144 376.0 L152 376.0 L160 376.0 L168 376.0 L176 376.0 L184 376.0 L192 376.0 L200 376.0 L208 376.0 L216 376.0 L224 376.0 L232 376.0 L240 376.0 L248 376.0 L256 376.0 L264 376.0 L272 376.0 L280 376.0 L288 376.0 L296 376.0 L304 376.0 L312 376.0 L320 376.0 L328 376.0 L336 376.0 L344 376.0"/></g>
<g fill="none" stroke="url(#gLineB)" stroke-width="0.600" clip-path="url(#clipS)"><path d="M172.0 337.5 L178.0 337.3 L184.0 337.1 L190.0 336.8 L196.0 336.4 L202.0 335.8 L208.0 335.1 L214.0 334.2 L220.0 333.0 L226.0 331.5 L232.0 329.6 L238.0 327.4 L244.0 324.7 L250.0 321.7 L256.0 318.4 L262.0 315.0 L268.0 311.0 L274.0 307.1 L280.0 303.5 L286.0 300.2 L292.0 297.4 L298.0 294.9 L304.0 292.8 L310.0 291.0 L316.0 289.5 L322.0 288.2 L328.0 287.0 L334.0 286.0 L340.0 285.1 L346.0 284.3 L352.0 283.5 L358.0 282.8 L364.0 282.1 L370.0 281.4 L376.0 280.8 L382.0 280.1 L388.0 279.5 L394.0 278.9 L400.0 278.2 L406.0 277.6 L412.0 277.0 L418.0 276.4 L424.0 275.8 L430.0 275.2 L436.0 274.6 L442.0 274.0 L448.0 273.4 L454.0 272.8 L460.0 272.2 L466.0 271.6 L472.0 271.0 L478.0 270.4 L484.0 269.8 L490.0 269.2 L496.0 268.6 L502.0 268.0 L508.0 267.4 L514.0 266.8 L520.0 266.2 L526.0 265.6 L532.0 265.0 L538.0 264.4 L544.0 263.8 L550.0 263.2 L556.0 262.6 L562.0 262.0 L568.0 261.4 L574.0 260.8 L580.0 260.2 L586.0 259.6 L592.0 259.0 L598.0 258.4 L604.0 257.8 L610.0 257.2 L616.0 256.6 L622.0 256.0 L628.0 255.4 L634.0 254.8 L640.0 254.2 L646.0 253.6 L652.0 253.0 L658.0 252.4 L664.0 251.8 L670.0 251.2 L676.0 250.6 L682.0 250.0 L688.0 249.4 L694.0 248.8 L700.0 248.2"/><path d="M176.7 340.4 L182.7 340.2 L188.7 340.0 L194.7 339.7 L200.7 339.3 L206.7 338.8 L212.7 338.1 L218.7 337.2 L224.7 336.0 L230.7 334.6 L236.7 332.8 L242.7 330.6 L248.7 328.1 L254.7 325.2 L260.7 322.0 L266.7 318.6 L272.7 314.8 L278.7 310.9 L284.7 307.2 L290.7 303.8 L296.7 300.8 L302.7 298.2 L308.7 296.0 L314.7 294.1 L320.7 292.4 L326.7 291.0 L332.7 289.8 L338.7 288.7 L344.7 287.8 L350.7 286.9 L356.7 286.1 L362.7 285.3 L368.7 284.6 L374.7 283.9 L380.7 283.3 L386.7 282.6 L392.7 282.0 L398.7 281.4 L404.7 280.7 L410.7 280.1 L416.7 279.5 L422.7 278.9 L428.7 278.3 L434.7 277.7 L440.7 277.1 L446.7 276.5 L452.7 275.9 L458.7 275.3 L464.7 274.7 L470.7 274.1 L476.7 273.5 L482.7 272.9 L488.7 272.3 L494.7 271.7 L500.7 271.1 L506.7 270.5 L512.7 269.9 L518.7 269.3 L524.7 268.7 L530.7 268.1 L536.7 267.5 L542.7 266.9 L548.7 266.3 L554.7 265.7 L560.7 265.1 L566.7 264.5 L572.7 263.9 L578.7 263.3 L584.7 262.7 L590.7 262.1 L596.7 261.5 L602.7 260.9 L608.7 260.3 L614.7 259.7 L620.7 259.1 L626.7 258.5 L632.7 257.9 L638.7 257.3 L644.7 256.7 L650.7 256.1 L656.7 255.5 L662.7 254.9 L668.7 254.3 L674.7 253.7 L680.7 253.1 L686.7 252.5 L692.7 251.9 L698.7 251.3"/><path d="M181.4 343.3 L187.4 343.1 L193.4 342.9 L199.4 342.6 L205.4 342.2 L211.4 341.7 L217.4 341.0 L223.4 340.2 L229.4 339.1 L235.4 337.7 L241.4 336.0 L247.4 333.9 L253.4 331.5 L259.4 328.7 L265.4 325.6 L271.4 322.2 L277.4 318.6 L283.4 314.7 L289.4 310.9 L295.4 307.4 L301.4 304.3 L307.4 301.6 L313.4 299.2 L319.4 297.2 L325.4 295.4 L331.4 293.9 L337.4 292.6 L343.4 291.5 L349.4 290.4 L355.4 289.5 L361.4 288.7 L367.4 287.9 L373.4 287.2 L379.4 286.5 L385.4 285.8 L391.4 285.1 L397.4 284.5 L403.4 283.9 L409.4 283.2 L415.4 282.6 L421.4 282.0 L427.4 281.4 L433.4 280.8 L439.4 280.2 L445.4 279.6 L451.4 279.0 L457.4 278.4 L463.4 277.8 L469.4 277.2 L475.4 276.6 L481.4 276.0 L487.4 275.4 L493.4 274.8 L499.4 274.2 L505.4 273.6 L511.4 273.0 L517.4 272.4 L523.4 271.8 L529.4 271.2 L535.4 270.6 L541.4 270.0 L547.4 269.4 L553.4 268.8 L559.4 268.2 L565.4 267.6 L571.4 267.0 L577.4 266.4 L583.4 265.8 L589.4 265.2 L595.4 264.6 L601.4 264.0 L607.4 263.4 L613.4 262.8 L619.4 262.2 L625.4 261.6 L631.4 261.0 L637.4 260.4 L643.4 259.8 L649.4 259.2 L655.4 258.6 L661.4 258.0 L667.4 257.4 L673.4 256.8 L679.4 256.2 L685.4 255.6 L691.4 255.0 L697.4 254.4"/><path d="M186.1 346.2 L192.1 346.0 L198.1 345.8 L204.1 345.5 L210.1 345.1 L216.1 344.6 L222.1 344.0 L228.1 343.1 L234.1 342.1 L240.1 340.8 L246.1 339.1 L252.1 337.1 L258.1 334.8 L264.1 332.1 L270.1 329.1 L276.1 325.8 L282.1 322.4 L288.1 318.4 L294.1 314.6 L300.1 311.1 L306.1 307.8 L312.1 305.0 L318.1 302.5 L324.1 300.3 L330.1 298.4 L336.1 296.8 L342.1 295.4 L348.1 294.2 L354.1 293.1 L360.1 292.2 L366.1 291.3 L372.1 290.5 L378.1 289.7 L384.1 289.0 L390.1 288.3 L396.1 287.7 L402.1 287.0 L408.1 286.4 L414.1 285.7 L420.1 285.1 L426.1 284.5 L432.1 283.9 L438.1 283.3 L444.1 282.7 L450.1 282.1 L456.1 281.5 L462.1 280.8 L468.1 280.2 L474.1 279.6 L480.1 279.0 L486.1 278.4 L492.1 277.8 L498.1 277.2 L504.1 276.6 L510.1 276.0 L516.1 275.4 L522.1 274.8 L528.1 274.2 L534.1 273.6 L540.1 273.0 L546.1 272.4 L552.1 271.8 L558.1 271.2 L564.1 270.6 L570.1 270.0 L576.1 269.4 L582.1 268.8 L588.1 268.2 L594.1 267.6 L600.1 267.0 L606.1 266.4 L612.1 265.8 L618.1 265.2 L624.1 264.6 L630.1 264.0 L636.1 263.4 L642.1 262.8 L648.1 262.2 L654.1 261.6 L660.1 261.0 L666.1 260.4 L672.1 259.8 L678.1 259.2 L684.1 258.6 L690.1 258.0 L696.1 257.4"/><path d="M190.8 349.1 L196.8 348.9 L202.8 348.7 L208.8 348.4 L214.8 348.0 L220.8 347.5 L226.8 346.9 L232.8 346.1 L238.8 345.1 L244.8 343.8 L250.8 342.3 L256.8 340.4 L262.8 338.1 L268.8 335.5 L274.8 332.6 L280.8 329.4 L286.8 326.1 L292.8 322.2 L298.8 318.4 L304.8 314.8 L310.8 311.4 L316.8 308.4 L322.8 305.8 L328.8 303.5 L334.8 301.5 L340.8 299.8 L346.8 298.3 L352.8 297.0 L358.8 295.9 L364.8 294.9 L370.8 293.9 L376.8 293.1 L382.8 292.3 L388.8 291.6 L394.8 290.9 L400.8 290.2 L406.8 289.5 L412.8 288.9 L418.8 288.2 L424.8 287.6 L430.8 287.0 L436.8 286.4 L442.8 285.8 L448.8 285.1 L454.8 284.5 L460.8 283.9 L466.8 283.3 L472.8 282.7 L478.8 282.1 L484.8 281.5 L490.8 280.9 L496.8 280.3 L502.8 279.7 L508.8 279.1 L514.8 278.5 L520.8 277.9 L526.8 277.3 L532.8 276.7 L538.8 276.1 L544.8 275.5 L550.8 274.9 L556.8 274.3 L562.8 273.7 L568.8 273.1 L574.8 272.5 L580.8 271.9 L586.8 271.3 L592.8 270.7 L598.8 270.1 L604.8 269.5 L610.8 268.9 L616.8 268.3 L622.8 267.7 L628.8 267.1 L634.8 266.5 L640.8 265.9 L646.8 265.3 L652.8 264.7 L658.8 264.1 L664.8 263.5 L670.8 262.9 L676.8 262.3 L682.8 261.7 L688.8 261.1 L694.8 260.5"/><path d="M195.5 352.0 L201.5 351.8 L207.5 351.6 L213.5 351.3 L219.5 350.9 L225.5 350.5 L231.5 349.9 L237.5 349.1 L243.5 348.1 L249.5 346.9 L255.5 345.4 L261.5 343.6 L267.5 341.4 L273.5 338.9 L279.5 336.0 L285.5 332.9 L291.5 329.7 L297.5 326.0 L303.5 322.2 L309.5 318.5 L315.5 315.0 L321.5 311.9 L327.5 309.1 L333.5 306.7 L339.5 304.6 L345.5 302.8 L351.5 301.2 L357.5 299.8 L363.5 298.6 L369.5 297.6 L375.5 296.6 L381.5 295.7 L387.5 294.9 L393.5 294.1 L399.5 293.4 L405.5 292.7 L411.5 292.0 L417.5 291.4 L423.5 290.7 L429.5 290.1 L435.5 289.5 L441.5 288.9 L447.5 288.2 L453.5 287.6 L459.5 287.0 L465.5 286.4 L471.5 285.8 L477.5 285.2 L483.5 284.6 L489.5 284.0 L495.5 283.4 L501.5 282.8 L507.5 282.2 L513.5 281.6 L519.5 281.0 L525.5 280.4 L531.5 279.8 L537.5 279.2 L543.5 278.6 L549.5 278.0 L555.5 277.4 L561.5 276.8 L567.5 276.2 L573.5 275.6 L579.5 275.0 L585.5 274.4 L591.5 273.8 L597.5 273.2 L603.5 272.6 L609.5 272.0 L615.5 271.4 L621.5 270.8 L627.5 270.2 L633.5 269.6 L639.5 269.0 L645.5 268.4 L651.5 267.8 L657.5 267.2 L663.5 266.6 L669.5 266.0 L675.5 265.4 L681.5 264.8 L687.5 264.2 L693.5 263.6 L699.5 263.0"/><path d="M200.2 354.9 L206.2 354.7 L212.2 354.5 L218.2 354.2 L224.2 353.8 L230.2 353.4 L236.2 352.8 L242.2 352.0 L248.2 351.1 L254.2 349.9 L260.2 348.5 L266.2 346.7 L272.2 344.7 L278.2 342.2 L284.2 339.5 L290.2 336.5 L296.2 333.2 L302.2 329.8 L308.2 325.9 L314.2 322.2 L320.2 318.7 L326.2 315.4 L332.2 312.5 L338.2 310.0 L344.2 307.8 L350.2 305.8 L356.2 304.2 L362.2 302.7 L368.2 301.4 L374.2 300.3 L380.2 299.3 L386.2 298.4 L392.2 297.5 L398.2 296.7 L404.2 296.0 L410.2 295.3 L416.2 294.6 L422.2 293.9 L428.2 293.2 L434.2 292.6 L440.2 292.0 L446.2 291.4 L452.2 290.7 L458.2 290.1 L464.2 289.5 L470.2 288.9 L476.2 288.3 L482.2 287.7 L488.2 287.1 L494.2 286.5 L500.2 285.9 L506.2 285.3 L512.2 284.7 L518.2 284.1 L524.2 283.5 L530.2 282.9 L536.2 282.3 L542.2 281.7 L548.2 281.1 L554.2 280.5 L560.2 279.9 L566.2 279.3 L572.2 278.7 L578.2 278.1 L584.2 277.5 L590.2 276.9 L596.2 276.3 L602.2 275.7 L608.2 275.1 L614.2 274.5 L620.2 273.9 L626.2 273.3 L632.2 272.7 L638.2 272.1 L644.2 271.5 L650.2 270.9 L656.2 270.3 L662.2 269.7 L668.2 269.1 L674.2 268.5 L680.2 267.9 L686.2 267.3 L692.2 266.7 L698.2 266.1"/><path d="M204.9 357.7 L210.9 357.6 L216.9 357.4 L222.9 357.1 L228.9 356.8 L234.9 356.3 L240.9 355.7 L246.9 355.0 L252.9 354.1 L258.9 353.0 L264.9 351.6 L270.9 349.9 L276.9 347.9 L282.9 345.6 L288.9 342.9 L294.9 340.0 L300.9 336.8 L306.9 333.5 L312.9 329.7 L318.9 325.9 L324.9 322.3 L330.9 319.0 L336.9 316.0 L342.9 313.3 L348.9 311.0 L354.9 308.9 L360.9 307.2 L366.9 305.6 L372.9 304.3 L378.9 303.1 L384.9 302.0 L390.9 301.0 L396.9 300.1 L402.9 299.3 L408.9 298.5 L414.9 297.8 L420.9 297.1 L426.9 296.4 L432.9 295.8 L438.9 295.1 L444.9 294.5 L450.9 293.9 L456.9 293.2 L462.9 292.6 L468.9 292.0 L474.9 291.4 L480.9 290.8 L486.9 290.2 L492.9 289.6 L498.9 289.0 L504.9 288.4 L510.9 287.8 L516.9 287.2 L522.9 286.6 L528.9 286.0 L534.9 285.4 L540.9 284.8 L546.9 284.2 L552.9 283.6 L558.9 283.0 L564.9 282.4 L570.9 281.8 L576.9 281.2 L582.9 280.6 L588.9 280.0 L594.9 279.4 L600.9 278.8 L606.9 278.2 L612.9 277.6 L618.9 277.0 L624.9 276.4 L630.9 275.8 L636.9 275.2 L642.9 274.6 L648.9 274.0 L654.9 273.4 L660.9 272.8 L666.9 272.2 L672.9 271.6 L678.9 271.0 L684.9 270.4 L690.9 269.8 L696.9 269.2"/><path d="M209.6 360.6 L215.6 360.5 L221.6 360.3 L227.6 360.0 L233.6 359.7 L239.6 359.2 L245.6 358.7 L251.6 358.0 L257.6 357.1 L263.6 356.0 L269.6 354.7 L275.6 353.1 L281.6 351.1 L287.6 348.9 L293.6 346.3 L299.6 343.4 L305.6 340.3 L311.6 337.1 L317.6 333.5 L323.6 329.7 L329.6 326.0 L335.6 322.6 L341.6 319.5 L347.6 316.7 L353.6 314.2 L359.6 312.1 L365.6 310.2 L371.6 308.6 L377.6 307.1 L383.6 305.8 L389.6 304.7 L395.6 303.7 L401.6 302.8 L407.6 301.9 L413.6 301.1 L419.6 300.4 L425.6 299.7 L431.6 299.0 L437.6 298.3 L443.6 297.6 L449.6 297.0 L455.6 296.4 L461.6 295.7 L467.6 295.1 L473.6 294.5 L479.6 293.9 L485.6 293.3 L491.6 292.7 L497.6 292.1 L503.6 291.5 L509.6 290.9 L515.6 290.2 L521.6 289.6 L527.6 289.0 L533.6 288.4 L539.6 287.8 L545.6 287.2 L551.6 286.6 L557.6 286.0 L563.6 285.4 L569.6 284.8 L575.6 284.2 L581.6 283.6 L587.6 283.0 L593.6 282.4 L599.6 281.8 L605.6 281.2 L611.6 280.6 L617.6 280.0 L623.6 279.4 L629.6 278.8 L635.6 278.2 L641.6 277.6 L647.6 277.0 L653.6 276.4 L659.6 275.8 L665.6 275.2 L671.6 274.6 L677.6 274.0 L683.6 273.4 L689.6 272.8 L695.6 272.2"/><path d="M214.3 363.5 L220.3 363.4 L226.3 363.2 L232.3 362.9 L238.3 362.6 L244.3 362.1 L250.3 361.6 L256.3 360.9 L262.3 360.1 L268.3 359.0 L274.3 357.7 L280.3 356.2 L286.3 354.3 L292.3 352.2 L298.3 349.7 L304.3 346.9 L310.3 343.9 L316.3 340.7 L322.3 337.2 L328.3 333.4 L334.3 329.7 L340.3 326.2 L346.3 323.0 L352.3 320.1 L358.3 317.5 L364.3 315.3 L370.3 313.3 L376.3 311.5 L382.3 310.0 L388.3 308.7 L394.3 307.5 L400.3 306.4 L406.3 305.4 L412.3 304.6 L418.3 303.7 L424.3 302.9 L430.3 302.2 L436.3 301.5 L442.3 300.8 L448.3 300.1 L454.3 299.5 L460.3 298.9 L466.3 298.2 L472.3 297.6 L478.3 297.0 L484.3 296.4 L490.3 295.8 L496.3 295.1 L502.3 294.5 L508.3 293.9 L514.3 293.3 L520.3 292.7 L526.3 292.1 L532.3 291.5 L538.3 290.9 L544.3 290.3 L550.3 289.7 L556.3 289.1 L562.3 288.5 L568.3 287.9 L574.3 287.3 L580.3 286.7 L586.3 286.1 L592.3 285.5 L598.3 284.9 L604.3 284.3 L610.3 283.7 L616.3 283.1 L622.3 282.5 L628.3 281.9 L634.3 281.3 L640.3 280.7 L646.3 280.1 L652.3 279.5 L658.3 278.9 L664.3 278.3 L670.3 277.7 L676.3 277.1 L682.3 276.5 L688.3 275.9 L694.3 275.3"/><path d="M219.0 366.4 L225.0 366.3 L231.0 366.1 L237.0 365.8 L243.0 365.5 L249.0 365.1 L255.0 364.5 L261.0 363.9 L267.0 363.1 L273.0 362.0 L279.0 360.8 L285.0 359.3 L291.0 357.5 L297.0 355.4 L303.0 353.0 L309.0 350.3 L315.0 347.4 L321.0 344.2 L327.0 341.0 L333.0 337.2 L339.0 333.4 L345.0 329.9 L351.0 326.6 L357.0 323.6 L363.0 320.9 L369.0 318.5 L375.0 316.4 L381.0 314.6 L387.0 312.9 L393.0 311.5 L399.0 310.3 L405.0 309.1 L411.0 308.1 L417.0 307.2 L423.0 306.3 L429.0 305.5 L435.0 304.8 L441.0 304.0 L447.0 303.3 L453.0 302.7 L459.0 302.0 L465.0 301.4 L471.0 300.7 L477.0 300.1 L483.0 299.5 L489.0 298.9 L495.0 298.2 L501.0 297.6 L507.0 297.0 L513.0 296.4 L519.0 295.8 L525.0 295.2 L531.0 294.6 L537.0 294.0 L543.0 293.4 L549.0 292.8 L555.0 292.2 L561.0 291.6 L567.0 291.0 L573.0 290.4 L579.0 289.8 L585.0 289.2 L591.0 288.6 L597.0 288.0 L603.0 287.4 L609.0 286.8 L615.0 286.2 L621.0 285.6 L627.0 285.0 L633.0 284.4 L639.0 283.8 L645.0 283.2 L651.0 282.6 L657.0 282.0 L663.0 281.4 L669.0 280.8 L675.0 280.2 L681.0 279.6 L687.0 279.0 L693.0 278.4 L699.0 277.8"/><path d="M223.7 369.3 L229.7 369.2 L235.7 369.0 L241.7 368.7 L247.7 368.4 L253.7 368.0 L259.7 367.5 L265.7 366.8 L271.7 366.0 L277.7 365.0 L283.7 363.9 L289.7 362.4 L295.7 360.7 L301.7 358.7 L307.7 356.3 L313.7 353.7 L319.7 350.8 L325.7 347.8 L331.7 344.6 L337.7 340.9 L343.7 337.2 L349.7 333.6 L355.7 330.2 L361.7 327.1 L367.7 324.3 L373.7 321.8 L379.7 319.6 L385.7 317.6 L391.7 315.9 L397.7 314.4 L403.7 313.1 L409.7 311.9 L415.7 310.8 L421.7 309.9 L427.7 309.0 L433.7 308.1 L439.7 307.3 L445.7 306.6 L451.7 305.9 L457.7 305.2 L463.7 304.5 L469.7 303.9 L475.7 303.2 L481.7 302.6 L487.7 302.0 L493.7 301.4 L499.7 300.7 L505.7 300.1 L511.7 299.5 L517.7 298.9 L523.7 298.3 L529.7 297.7 L535.7 297.1 L541.7 296.5 L547.7 295.9 L553.7 295.3 L559.7 294.7 L565.7 294.1 L571.7 293.5 L577.7 292.9 L583.7 292.3 L589.7 291.7 L595.7 291.1 L601.7 290.5 L607.7 289.9 L613.7 289.3 L619.7 288.7 L625.7 288.1 L631.7 287.5 L637.7 286.9 L643.7 286.3 L649.7 285.7 L655.7 285.1 L661.7 284.5 L667.7 283.9 L673.7 283.3 L679.7 282.7 L685.7 282.1 L691.7 281.5 L697.7 280.9"/><path d="M228.4 372.2 L234.4 372.1 L240.4 371.9 L246.4 371.6 L252.4 371.3 L258.4 370.9 L264.4 370.4 L270.4 369.8 L276.4 369.0 L282.4 368.1 L288.4 366.9 L294.4 365.5 L300.4 363.8 L306.4 361.9 L312.4 359.6 L318.4 357.1 L324.4 354.3 L330.4 351.3 L336.4 348.1 L342.4 344.7 L348.4 340.9 L354.4 337.2 L360.4 333.8 L366.4 330.6 L372.4 327.7 L378.4 325.1 L384.4 322.8 L390.4 320.7 L396.4 318.9 L402.4 317.3 L408.4 315.9 L414.4 314.7 L420.4 313.6 L426.4 312.5 L432.4 311.6 L438.4 310.7 L444.4 309.9 L450.4 309.2 L456.4 308.4 L462.4 307.7 L468.4 307.1 L474.4 306.4 L480.4 305.7 L486.4 305.1 L492.4 304.5 L498.4 303.8 L504.4 303.2 L510.4 302.6 L516.4 302.0 L522.4 301.4 L528.4 300.8 L534.4 300.2 L540.4 299.6 L546.4 299.0 L552.4 298.4 L558.4 297.8 L564.4 297.2 L570.4 296.6 L576.4 296.0 L582.4 295.4 L588.4 294.8 L594.4 294.2 L600.4 293.6 L606.4 293.0 L612.4 292.4 L618.4 291.8 L624.4 291.2 L630.4 290.6 L636.4 290.0 L642.4 289.4 L648.4 288.8 L654.4 288.2 L660.4 287.6 L666.4 287.0 L672.4 286.4 L678.4 285.8 L684.4 285.2 L690.4 284.6 L696.4 284.0"/><path d="M233.1 375.1 L239.1 375.0 L245.1 374.8 L251.1 374.5 L257.1 374.2 L263.1 373.8 L269.1 373.3 L275.1 372.7 L281.1 372.0 L287.1 371.0 L293.1 369.9 L299.1 368.6 L305.1 367.0 L311.1 365.1 L317.1 362.9 L323.1 360.5 L329.1 357.7 L335.1 354.8 L341.1 351.7 L347.1 348.4 L353.1 344.6 L359.1 341.0 L365.1 337.4 L371.1 334.2 L377.1 331.2 L383.1 328.4 L389.1 326.0 L395.1 323.9 L401.1 322.0 L407.1 320.3 L413.1 318.8 L419.1 317.5 L425.1 316.3 L431.1 315.3 L437.1 314.3 L443.1 313.4 L449.1 312.5 L455.1 311.8 L461.1 311.0 L467.1 310.3 L473.1 309.6 L479.1 308.9 L485.1 308.3 L491.1 307.6 L497.1 307.0 L503.1 306.3 L509.1 305.7 L515.1 305.1 L521.1 304.5 L527.1 303.9 L533.1 303.3 L539.1 302.7 L545.1 302.1 L551.1 301.5 L557.1 300.9 L563.1 300.2 L569.1 299.6 L575.1 299.0 L581.1 298.4 L587.1 297.8 L593.1 297.2 L599.1 296.6 L605.1 296.0 L611.1 295.4 L617.1 294.8 L623.1 294.2 L629.1 293.6 L635.1 293.0 L641.1 292.4 L647.1 291.8 L653.1 291.2 L659.1 290.6 L665.1 290.0 L671.1 289.4 L677.1 288.8 L683.1 288.2 L689.1 287.6 L695.1 287.0"/><path d="M331.5 379.3 L339.5 370.9 L347.5 362.9 L355.5 355.5 L363.5 348.6 L371.5 342.1 L379.5 336.0 L387.5 330.2 L395.5 324.9 L403.5 319.8 L411.5 315.0 L419.5 310.5 L427.5 306.3 L435.5 302.3 L443.5 298.5 L451.5 295.0 L459.5 291.6 L467.5 288.4 L475.5 285.4 L483.5 282.5 L491.5 279.8 L499.5 277.2 L507.5 274.8 L515.5 272.4 L523.5 270.2 L531.5 268.1 L539.5 266.0 L547.5 264.1 L555.5 262.2 L563.5 260.4 L571.5 258.7 L579.5 257.0 L587.5 255.4 L595.5 253.9 L603.5 252.4 L611.5 250.9 L619.5 249.5 L627.5 248.2 L635.5 246.9 L643.5 245.6 L651.5 244.3 L659.5 243.1 L667.5 241.9 L675.5 240.8 L683.5 239.6 L691.5 238.5 L699.5 237.4"/><path d="M340.0 379.3 L348.0 370.8 L356.0 362.9 L364.0 355.5 L372.0 348.5 L380.0 341.9 L388.0 335.8 L396.0 330.0 L404.0 324.6 L412.0 319.4 L420.0 314.6 L428.0 310.1 L436.0 305.8 L444.0 301.8 L452.0 297.9 L460.0 294.3 L468.0 290.9 L476.0 287.7 L484.0 284.6 L492.0 281.7 L500.0 279.0 L508.0 276.3 L516.0 273.8 L524.0 271.5 L532.0 269.2 L540.0 267.0 L548.0 264.9 L556.0 263.0 L564.0 261.0 L572.0 259.2 L580.0 257.5 L588.0 255.8 L596.0 254.1 L604.0 252.6 L612.0 251.1 L620.0 249.6 L628.0 248.2 L636.0 246.8 L644.0 245.4 L652.0 244.1 L660.0 242.9 L668.0 241.6 L676.0 240.4 L684.0 239.3 L692.0 238.1 L700.0 237.0"/><path d="M348.5 379.3 L356.5 370.8 L364.5 362.9 L372.5 355.4 L380.5 348.4 L388.5 341.8 L396.5 335.6 L404.5 329.7 L412.5 324.3 L420.5 319.1 L428.5 314.2 L436.5 309.6 L444.5 305.3 L452.5 301.2 L460.5 297.4 L468.5 293.7 L476.5 290.2 L484.5 287.0 L492.5 283.9 L500.5 280.9 L508.5 278.1 L516.5 275.4 L524.5 272.9 L532.5 270.5 L540.5 268.2 L548.5 266.0 L556.5 263.9 L564.5 261.8 L572.5 259.9 L580.5 258.0 L588.5 256.3 L596.5 254.5 L604.5 252.9 L612.5 251.3 L620.5 249.7 L628.5 248.2 L636.5 246.8 L644.5 245.4 L652.5 244.0 L660.5 242.7 L668.5 241.4 L676.5 240.2 L684.5 239.0 L692.5 237.8"/><path d="M357.0 379.3 L365.0 370.8 L373.0 362.8 L381.0 355.3 L389.0 348.3 L397.0 341.6 L405.0 335.4 L413.0 329.5 L421.0 324.0 L429.0 318.8 L437.0 313.8 L445.0 309.2 L453.0 304.8 L461.0 300.7 L469.0 296.8 L477.0 293.1 L485.0 289.6 L493.0 286.3 L501.0 283.1 L509.0 280.1 L517.0 277.3 L525.0 274.6 L533.0 272.0 L541.0 269.5 L549.0 267.2 L557.0 264.9 L565.0 262.8 L573.0 260.7 L581.0 258.8 L589.0 256.9 L597.0 255.1 L605.0 253.3 L613.0 251.6 L621.0 250.0 L629.0 248.4 L637.0 246.9 L645.0 245.4 L653.0 244.0 L661.0 242.6 L669.0 241.3 L677.0 240.0 L685.0 238.7 L693.0 237.5"/><path d="M365.5 379.3 L373.5 370.8 L381.5 362.8 L389.5 355.2 L397.5 348.1 L405.5 341.5 L413.5 335.2 L421.5 329.3 L429.5 323.7 L437.5 318.4 L445.5 313.5 L453.5 308.8 L461.5 304.4 L469.5 300.2 L477.5 296.2 L485.5 292.5 L493.5 288.9 L501.5 285.6 L509.5 282.4 L517.5 279.3 L525.5 276.4 L533.5 273.7 L541.5 271.1 L549.5 268.6 L557.5 266.2 L565.5 263.9 L573.5 261.7 L581.5 259.6 L589.5 257.6 L597.5 255.7 L605.5 253.9 L613.5 252.1 L621.5 250.4 L629.5 248.7 L637.5 247.1 L645.5 245.6 L653.5 244.1 L661.5 242.7 L669.5 241.2 L677.5 239.9 L685.5 238.6 L693.5 237.3"/><path d="M374.0 379.3 L382.0 370.8 L390.0 362.7 L398.0 355.2 L406.0 348.0 L414.0 341.3 L422.0 335.0 L430.0 329.0 L438.0 323.4 L446.0 318.1 L454.0 313.1 L462.0 308.4 L470.0 303.9 L478.0 299.7 L486.0 295.7 L494.0 291.9 L502.0 288.3 L510.0 284.9 L518.0 281.6 L526.0 278.6 L534.0 275.6 L542.0 272.8 L550.0 270.2 L558.0 267.6 L566.0 265.2 L574.0 262.9 L582.0 260.7 L590.0 258.6 L598.0 256.5 L606.0 254.6 L614.0 252.7 L622.0 250.9 L630.0 249.2 L638.0 247.5 L646.0 245.9 L654.0 244.3 L662.0 242.8 L670.0 241.3 L678.0 239.9 L686.0 238.5 L694.0 237.1"/><path d="M382.5 379.4 L390.5 370.8 L398.5 362.7 L406.5 355.1 L414.5 347.9 L422.5 341.2 L430.5 334.8 L438.5 328.8 L446.5 323.1 L454.5 317.8 L462.5 312.7 L470.5 308.0 L478.5 303.5 L486.5 299.2 L494.5 295.1 L502.5 291.3 L510.5 287.6 L518.5 284.2 L526.5 280.9 L534.5 277.8 L542.5 274.8 L550.5 272.0 L558.5 269.3 L566.5 266.7 L574.5 264.3 L582.5 261.9 L590.5 259.7 L598.5 257.5 L606.5 255.4 L614.5 253.4 L622.5 251.5 L630.5 249.7 L638.5 247.9 L646.5 246.2 L654.5 244.6 L662.5 243.0 L670.5 241.4 L678.5 240.0 L686.5 238.5 L694.5 237.1"/><path d="M391.0 379.4 L399.0 370.8 L407.0 362.7 L415.0 355.0 L423.0 347.8 L431.0 341.0 L439.0 334.6 L447.0 328.6 L455.0 322.9 L463.0 317.5 L471.0 312.4 L479.0 307.6 L487.0 303.0 L495.0 298.7 L503.0 294.6 L511.0 290.7 L519.0 287.0 L527.0 283.5 L535.0 280.2 L543.0 277.0 L551.0 274.0 L559.0 271.2 L567.0 268.4 L575.0 265.8 L583.0 263.3 L591.0 260.9 L599.0 258.6 L607.0 256.4 L615.0 254.3 L623.0 252.3 L631.0 250.4 L639.0 248.5 L647.0 246.7 L655.0 245.0 L663.0 243.3 L671.0 241.7 L679.0 240.1 L687.0 238.6 L695.0 237.2"/><path d="M399.5 379.4 L407.5 370.7 L415.5 362.6 L423.5 354.9 L431.5 347.7 L439.5 340.9 L447.5 334.4 L455.5 328.4 L463.5 322.6 L471.5 317.2 L479.5 312.0 L487.5 307.2 L495.5 302.6 L503.5 298.2 L511.5 294.1 L519.5 290.1 L527.5 286.4 L535.5 282.9 L543.5 279.5 L551.5 276.3 L559.5 273.2 L567.5 270.3 L575.5 267.6 L583.5 264.9 L591.5 262.4 L599.5 259.9 L607.5 257.6 L615.5 255.4 L623.5 253.3 L631.5 251.2 L639.5 249.3 L647.5 247.4 L655.5 245.5 L663.5 243.8 L671.5 242.1 L679.5 240.4 L687.5 238.8 L695.5 237.3"/><path d="M408.0 379.4 L416.0 370.7 L424.0 362.6 L432.0 354.9 L440.0 347.6 L448.0 340.8 L456.0 334.3 L464.0 328.2 L472.0 322.4 L480.0 316.9 L488.0 311.7 L496.0 306.8 L504.0 302.1 L512.0 297.7 L520.0 293.5 L528.0 289.6 L536.0 285.8 L544.0 282.2 L552.0 278.8 L560.0 275.6 L568.0 272.5 L576.0 269.5 L584.0 266.7 L592.0 264.0 L600.0 261.4 L608.0 259.0 L616.0 256.6 L624.0 254.4 L632.0 252.2 L640.0 250.1 L648.0 248.1 L656.0 246.2 L664.0 244.4 L672.0 242.6 L680.0 240.8 L688.0 239.2 L696.0 237.6"/><path d="M416.5 379.4 L424.5 370.7 L432.5 362.5 L440.5 354.8 L448.5 347.5 L456.5 340.6 L464.5 334.1 L472.5 327.9 L480.5 322.1 L488.5 316.6 L496.5 311.4 L504.5 306.4 L512.5 301.7 L520.5 297.3 L528.5 293.0 L536.5 289.0 L544.5 285.2 L552.5 281.6 L560.5 278.1 L568.5 274.8 L576.5 271.7 L584.5 268.7 L592.5 265.9 L600.5 263.1 L608.5 260.5 L616.5 258.0 L624.5 255.7 L632.5 253.4 L640.5 251.2 L648.5 249.0 L656.5 247.0 L664.5 245.1 L672.5 243.2 L680.5 241.4 L688.5 239.6 L696.5 237.9"/><path d="M425.0 379.4 L433.0 370.7 L441.0 362.5 L449.0 354.7 L457.0 347.4 L465.0 340.5 L473.0 333.9 L481.0 327.7 L489.0 321.9 L497.0 316.3 L505.0 311.0 L513.0 306.0 L521.0 301.3 L529.0 296.8 L537.0 292.5 L545.0 288.5 L553.0 284.6 L561.0 281.0 L569.0 277.5 L577.0 274.1 L585.0 271.0 L593.0 267.9 L601.0 265.0 L609.0 262.3 L617.0 259.6 L625.0 257.1 L633.0 254.7 L641.0 252.4 L649.0 250.1 L657.0 248.0 L665.0 245.9 L673.0 243.9 L681.0 242.0 L689.0 240.2 L697.0 238.4"/><path d="M433.5 379.4 L441.5 370.7 L449.5 362.5 L457.5 354.7 L465.5 347.3 L473.5 340.4 L481.5 333.8 L489.5 327.5 L497.5 321.6 L505.5 316.0 L513.5 310.7 L521.5 305.7 L529.5 300.9 L537.5 296.4 L545.5 292.0 L553.5 288.0 L561.5 284.1 L569.5 280.3 L577.5 276.8 L585.5 273.4 L593.5 270.2 L601.5 267.2 L609.5 264.2 L617.5 261.4 L625.5 258.7 L633.5 256.2 L641.5 253.7 L649.5 251.4 L657.5 249.1 L665.5 246.9 L673.5 244.8 L681.5 242.8 L689.5 240.9 L697.5 239.0"/><path d="M442.0 379.4 L450.0 370.7 L458.0 362.4 L466.0 354.6 L474.0 347.2 L482.0 340.2 L490.0 333.6 L498.0 327.3 L506.0 321.4 L514.0 315.7 L522.0 310.4 L530.0 305.3 L538.0 300.5 L546.0 295.9 L554.0 291.6 L562.0 287.4 L570.0 283.5 L578.0 279.7 L586.0 276.2 L594.0 272.7 L602.0 269.5 L610.0 266.4 L618.0 263.4 L626.0 260.6 L634.0 257.9 L642.0 255.3 L650.0 252.8 L658.0 250.4 L666.0 248.1 L674.0 245.9 L682.0 243.8 L690.0 241.7 L698.0 239.7"/><path d="M450.5 379.4 L458.5 370.7 L466.5 362.4 L474.5 354.6 L482.5 347.1 L490.5 340.1 L498.5 333.5 L506.5 327.1 L514.5 321.2 L522.5 315.5 L530.5 310.1 L538.5 305.0 L546.5 300.1 L554.5 295.5 L562.5 291.1 L570.5 286.9 L578.5 282.9 L586.5 279.1 L594.5 275.5 L602.5 272.1 L610.5 268.8 L618.5 265.6 L626.5 262.6 L634.5 259.8 L642.5 257.0 L650.5 254.4 L658.5 251.8 L666.5 249.4 L674.5 247.1 L682.5 244.8 L690.5 242.7 L698.5 240.6"/><path d="M459.0 379.4 L467.0 370.7 L475.0 362.4 L483.0 354.5 L491.0 347.1 L499.0 340.0 L507.0 333.3 L515.0 327.0 L523.0 320.9 L531.0 315.2 L539.0 309.8 L547.0 304.6 L555.0 299.7 L563.0 295.1 L571.0 290.6 L579.0 286.4 L587.0 282.4 L595.0 278.5 L603.0 274.9 L611.0 271.4 L619.0 268.1 L627.0 264.9 L635.0 261.8 L643.0 258.9 L651.0 256.1 L659.0 253.5 L667.0 250.9 L675.0 248.5 L683.0 246.1 L691.0 243.8 L699.0 241.6"/><path d="M467.5 379.5 L475.5 370.7 L483.5 362.3 L491.5 354.4 L499.5 347.0 L507.5 339.9 L515.5 333.2 L523.5 326.8 L531.5 320.7 L539.5 315.0 L547.5 309.5 L555.5 304.3 L563.5 299.3 L571.5 294.6 L579.5 290.2 L587.5 285.9 L595.5 281.8 L603.5 278.0 L611.5 274.3 L619.5 270.7 L627.5 267.4 L635.5 264.1 L643.5 261.1 L651.5 258.1 L659.5 255.3 L667.5 252.6 L675.5 250.0 L683.5 247.5 L691.5 245.1 L699.5 242.8"/><path d="M476.0 379.5 L484.0 370.7 L492.0 362.3 L500.0 354.4 L508.0 346.9 L516.0 339.8 L524.0 333.0 L532.0 326.6 L540.0 320.5 L548.0 314.7 L556.0 309.2 L564.0 304.0 L572.0 299.0 L580.0 294.2 L588.0 289.7 L596.0 285.4 L604.0 281.3 L612.0 277.4 L620.0 273.7 L628.0 270.1 L636.0 266.7 L644.0 263.4 L652.0 260.3 L660.0 257.3 L668.0 254.5 L676.0 251.7 L684.0 249.1 L692.0 246.6 L700.0 244.1"/><path d="M484.5 379.5 L492.5 370.6 L500.5 362.3 L508.5 354.3 L516.5 346.8 L524.5 339.6 L532.5 332.9 L540.5 326.4 L548.5 320.3 L556.5 314.4 L564.5 308.9 L572.5 303.6 L580.5 298.6 L588.5 293.8 L596.5 289.3 L604.5 284.9 L612.5 280.8 L620.5 276.8 L628.5 273.1 L636.5 269.4 L644.5 266.0 L652.5 262.7 L660.5 259.6 L668.5 256.5 L676.5 253.6 L684.5 250.9 L692.5 248.2"/><path d="M493.0 379.5 L501.0 370.6 L509.0 362.2 L517.0 354.3 L525.0 346.7 L533.0 339.5 L541.0 332.7 L549.0 326.2 L557.0 320.1 L565.0 314.2 L573.0 308.6 L581.0 303.3 L589.0 298.2 L597.0 293.4 L605.0 288.8 L613.0 284.4 L621.0 280.3 L629.0 276.3 L637.0 272.5 L645.0 268.8 L653.0 265.3 L661.0 262.0 L669.0 258.8 L677.0 255.8 L685.0 252.8 L693.0 250.0"/><path d="M501.5 379.5 L509.5 370.6 L517.5 362.2 L525.5 354.2 L533.5 346.6 L541.5 339.4 L549.5 332.6 L557.5 326.1 L565.5 319.9 L573.5 314.0 L581.5 308.3 L589.5 303.0 L597.5 297.9 L605.5 293.0 L613.5 288.4 L621.5 284.0 L629.5 279.8 L637.5 275.7 L645.5 271.9 L653.5 268.2 L661.5 264.7 L669.5 261.3 L677.5 258.1 L685.5 255.0 L693.5 252.0"/><path d="M510.0 379.5 L518.0 370.6 L526.0 362.2 L534.0 354.2 L542.0 346.6 L550.0 339.3 L558.0 332.4 L566.0 325.9 L574.0 319.6 L582.0 313.7 L590.0 308.1 L598.0 302.7 L606.0 297.5 L614.0 292.6 L622.0 288.0 L630.0 283.5 L638.0 279.2 L646.0 275.2 L654.0 271.3 L662.0 267.6 L670.0 264.0 L678.0 260.6 L686.0 257.3 L694.0 254.2"/><path d="M518.5 379.5 L526.5 370.6 L534.5 362.2 L542.5 354.1 L550.5 346.5 L558.5 339.2 L566.5 332.3 L574.5 325.7 L582.5 319.4 L590.5 313.5 L598.5 307.8 L606.5 302.4 L614.5 297.2 L622.5 292.3 L630.5 287.5 L638.5 283.1 L646.5 278.8 L654.5 274.6 L662.5 270.7 L670.5 267.0 L678.5 263.4 L686.5 259.9 L694.5 256.6"/><path d="M527.0 379.5 L535.0 370.6 L543.0 362.1 L551.0 354.1 L559.0 346.4 L567.0 339.1 L575.0 332.2 L583.0 325.6 L591.0 319.3 L599.0 313.2 L607.0 307.5 L615.0 302.1 L623.0 296.9 L631.0 291.9 L639.0 287.1 L647.0 282.6 L655.0 278.3 L663.0 274.1 L671.0 270.2 L679.0 266.4 L687.0 262.7 L695.0 259.3"/><path d="M535.5 379.5 L543.5 370.6 L551.5 362.1 L559.5 354.0 L567.5 346.3 L575.5 339.0 L583.5 332.0 L591.5 325.4 L599.5 319.1 L607.5 313.0 L615.5 307.3 L623.5 301.8 L631.5 296.5 L639.5 291.5 L647.5 286.7 L655.5 282.2 L663.5 277.8 L671.5 273.6 L679.5 269.6 L687.5 265.8 L695.5 262.1"/><path d="M544.0 379.5 L552.0 370.6 L560.0 362.1 L568.0 354.0 L576.0 346.3 L584.0 338.9 L592.0 331.9 L600.0 325.2 L608.0 318.9 L616.0 312.8 L624.0 307.0 L632.0 301.5 L640.0 296.2 L648.0 291.1 L656.0 286.3 L664.0 281.7 L672.0 277.3 L680.0 273.1 L688.0 269.1 L696.0 265.2"/><path d="M552.5 379.5 L560.5 370.6 L568.5 362.1 L576.5 353.9 L584.5 346.2 L592.5 338.8 L600.5 331.8 L608.5 325.1 L616.5 318.7 L624.5 312.6 L632.5 306.7 L640.5 301.2 L648.5 295.9 L656.5 290.8 L664.5 285.9 L672.5 281.3 L680.5 276.8 L688.5 272.6 L696.5 268.5"/><path d="M561.0 379.5 L569.0 370.6 L577.0 362.0 L585.0 353.9 L593.0 346.1 L601.0 338.7 L609.0 331.7 L617.0 324.9 L625.0 318.5 L633.0 312.4 L641.0 306.5 L649.0 300.9 L657.0 295.6 L665.0 290.4 L673.0 285.5 L681.0 280.9 L689.0 276.4 L697.0 272.1"/><path d="M569.5 379.5 L577.5 370.6 L585.5 362.0 L593.5 353.8 L601.5 346.1 L609.5 338.6 L617.5 331.5 L625.5 324.8 L633.5 318.3 L641.5 312.1 L649.5 306.3 L657.5 300.6 L665.5 295.2 L673.5 290.1 L681.5 285.2 L689.5 280.4 L697.5 275.9"/><path d="M578.0 379.6 L586.0 370.6 L594.0 362.0 L602.0 353.8 L610.0 346.0 L618.0 338.5 L626.0 331.4 L634.0 324.6 L642.0 318.1 L650.0 311.9 L658.0 306.0 L666.0 300.3 L674.0 294.9 L682.0 289.7 L690.0 284.8 L698.0 280.0"/><path d="M586.5 379.6 L594.5 370.5 L602.5 362.0 L610.5 353.8 L618.5 345.9 L626.5 338.4 L634.5 331.3 L642.5 324.5 L650.5 318.0 L658.5 311.7 L666.5 305.8 L674.5 300.1 L682.5 294.6 L690.5 289.4 L698.5 284.4"/><path d="M595.0 379.6 L603.0 370.5 L611.0 361.9 L619.0 353.7 L627.0 345.9 L635.0 338.4 L643.0 331.2 L651.0 324.3 L659.0 317.8 L667.0 311.5 L675.0 305.5 L683.0 299.8 L691.0 294.3 L699.0 289.1"/><path d="M603.5 379.6 L611.5 370.5 L619.5 361.9 L627.5 353.7 L635.5 345.8 L643.5 338.3 L651.5 331.1 L659.5 324.2 L667.5 317.6 L675.5 311.3 L683.5 305.3 L691.5 299.5 L699.5 294.0"/><path d="M612.0 379.6 L620.0 370.5 L628.0 361.9 L636.0 353.6 L644.0 345.7 L652.0 338.2 L660.0 331.0 L668.0 324.1 L676.0 317.5 L684.0 311.1 L692.0 305.1 L700.0 299.3"/><path d="M620.5 379.6 L628.5 370.5 L636.5 361.9 L644.5 353.6 L652.5 345.7 L660.5 338.1 L668.5 330.9 L676.5 323.9 L684.5 317.3 L692.5 310.9"/><path d="M629.0 379.6 L637.0 370.5 L645.0 361.8 L653.0 353.5 L661.0 345.6 L669.0 338.0 L677.0 330.7 L685.0 323.8 L693.0 317.1"/><path d="M637.5 379.6 L645.5 370.5 L653.5 361.8 L661.5 353.5 L669.5 345.5 L677.5 337.9 L685.5 330.6 L693.5 323.7"/><path d="M646.0 379.6 L654.0 370.5 L662.0 361.8 L670.0 353.5 L678.0 345.5 L686.0 337.9 L694.0 330.5"/><path d="M654.5 379.6 L662.5 370.5 L670.5 361.8 L678.5 353.4 L686.5 345.4 L694.5 337.8"/><path d="M663.0 379.6 L671.0 370.5 L679.0 361.8 L687.0 353.4 L695.0 345.4"/><path d="M671.5 379.6 L679.5 370.5 L687.5 361.7 L695.5 353.4"/><path d="M680.0 379.6 L688.0 370.5 L696.0 361.7"/></g>
<g clip-path="url(#clipS)"><ellipse cx="235" cy="292" rx="120" ry="34" fill="url(#fadeW)" transform="rotate(22 235 292)"/>
<ellipse cx="590" cy="262" rx="170" ry="30" fill="url(#fadeW)"/></g>
<rect x="41.500" y="0" width="65.500" height="32.500" fill="#5a9bc6"/>
<rect x="0" y="101" width="683" height="144.300" fill="#589bc6"/>
<path d="M0 366 H356 L350 372 H0Z" fill="#5a9bc6"/>
<rect x="0" y="375" width="683" height="9" fill="#0c4a78"/>
<rect x="342" y="304.500" width="289" height="21.500" fill="#d9c3da" fill-opacity="0.600"/>
<g id="family" transform="translate(342,28) scale(0.33333)">
<!-- background big leaves -->
<g fill="#79d2d4" opacity="0.920">
<ellipse cx="196" cy="348" rx="30" ry="15" transform="rotate(25 196 348)"/>
<ellipse cx="215" cy="468" rx="34" ry="15" transform="rotate(-20 215 468)"/>
<ellipse cx="255" cy="488" rx="26" ry="13" transform="rotate(-60 255 488)"/>
<ellipse cx="382" cy="448" rx="36" ry="17" transform="rotate(-62 382 448)"/>
<ellipse cx="372" cy="528" rx="34" ry="16" transform="rotate(-25 372 528)"/>
<ellipse cx="372" cy="602" rx="32" ry="15" transform="rotate(8 372 602)"/>
<ellipse cx="395" cy="655" rx="28" ry="13" transform="rotate(20 395 655)"/>
<ellipse cx="540" cy="585" rx="26" ry="12" transform="rotate(-30 540 585)"/>
<ellipse cx="532" cy="630" rx="24" ry="11" transform="rotate(0 532 630)"/>
</g>
<g fill="#b79ce6" opacity="0.900"><ellipse cx="362" cy="590" rx="30" ry="14" transform="rotate(60 362 590)"/><ellipse cx="392" cy="640" rx="28" ry="13" transform="rotate(25 392 640)"/><ellipse cx="398" cy="585" rx="20" ry="10" transform="rotate(-40 398 585)"/></g>
<path d="M300 660 q40 -80 90 -210" fill="none" stroke="#79d2d4" stroke-width="4"/>
<path d="M478 852 Q520 720 645 615" fill="none" stroke="#5cc4cb" stroke-width="5" stroke-linecap="round"/>
<g fill="#5cc4cb"><ellipse cx="503.4" cy="754.9" rx="21.6" ry="8.7" transform="rotate(-110 503.4 754.9)"/><ellipse cx="531.7" cy="770.1" rx="21.6" ry="8.7" transform="rotate(-14 531.7 770.1)"/><ellipse cx="518.5" cy="732.0" rx="20.5" ry="8.2" transform="rotate(-106 518.5 732.0)"/><ellipse cx="544.5" cy="748.1" rx="20.5" ry="8.2" transform="rotate(-10 544.5 748.1)"/><ellipse cx="534.9" cy="709.8" rx="19.5" ry="7.8" transform="rotate(-103 534.9 709.8)"/><ellipse cx="558.6" cy="726.4" rx="19.5" ry="7.8" transform="rotate(-7 558.6 726.4)"/><ellipse cx="552.7" cy="688.2" rx="18.4" ry="7.4" transform="rotate(-100 552.7 688.2)"/><ellipse cx="574.3" cy="705.0" rx="18.4" ry="7.4" transform="rotate(-4 574.3 705.0)"/><ellipse cx="571.9" cy="667.1" rx="17.3" ry="6.9" transform="rotate(-97 571.9 667.1)"/><ellipse cx="591.4" cy="684.0" rx="17.3" ry="6.9" transform="rotate(-1 591.4 684.0)"/><ellipse cx="592.5" cy="646.6" rx="16.2" ry="6.5" transform="rotate(-94 592.5 646.6)"/><ellipse cx="609.9" cy="663.3" rx="16.2" ry="6.5" transform="rotate(2 609.9 663.3)"/><ellipse cx="614.5" cy="626.7" rx="15.2" ry="6.1" transform="rotate(-91 614.5 626.7)"/><ellipse cx="630.0" cy="643.0" rx="15.2" ry="6.1" transform="rotate(5 630.0 643.0)"/><ellipse cx="637.9" cy="607.2" rx="14.1" ry="5.6" transform="rotate(-89 637.9 607.2)"/><ellipse cx="651.6" cy="623.1" rx="14.1" ry="5.6" transform="rotate(7 651.6 623.1)"/><ellipse cx="654.5" cy="607.0" rx="13.8" ry="5.5" transform="rotate(-40 654.5 607.0)"/></g>
<path d="M472 852 Q470 760 420 655" fill="none" stroke="#5cc4cb" stroke-width="5" stroke-linecap="round"/>
<g fill="#5cc4cb"><ellipse cx="450.0" cy="786.0" rx="19.0" ry="7.8" transform="rotate(-150 450.0 786.0)"/><ellipse cx="478.8" cy="781.1" rx="19.0" ry="7.8" transform="rotate(-50 478.8 781.1)"/><ellipse cx="445.4" cy="761.7" rx="17.7" ry="7.2" transform="rotate(-153 445.4 761.7)"/><ellipse cx="471.8" cy="755.5" rx="17.7" ry="7.2" transform="rotate(-53 471.8 755.5)"/><ellipse cx="439.2" cy="736.7" rx="16.4" ry="6.7" transform="rotate(-156 439.2 736.7)"/><ellipse cx="463.3" cy="729.7" rx="16.4" ry="6.7" transform="rotate(-56 463.3 729.7)"/><ellipse cx="431.4" cy="711.1" rx="15.1" ry="6.2" transform="rotate(-159 431.4 711.1)"/><ellipse cx="453.2" cy="703.5" rx="15.1" ry="6.2" transform="rotate(-59 453.2 703.5)"/><ellipse cx="422.0" cy="684.9" rx="13.7" ry="5.6" transform="rotate(-162 422.0 684.9)"/><ellipse cx="441.5" cy="676.9" rx="13.7" ry="5.6" transform="rotate(-62 441.5 676.9)"/><ellipse cx="411.0" cy="658.1" rx="12.4" ry="5.1" transform="rotate(-165 411.0 658.1)"/><ellipse cx="428.2" cy="650.1" rx="12.4" ry="5.1" transform="rotate(-65 428.2 650.1)"/><ellipse cx="415.3" cy="645.2" rx="12.1" ry="5.0" transform="rotate(-115 415.3 645.2)"/></g>
<path d="M488 852 Q500 790 548 720" fill="none" stroke="#6fcfd2" stroke-width="4" stroke-linecap="round"/>
<g fill="#6fcfd2"><ellipse cx="490.5" cy="800.7" rx="15.6" ry="6.5" transform="rotate(-121 490.5 800.7)"/><ellipse cx="513.0" cy="808.6" rx="15.6" ry="6.5" transform="rotate(-21 513.0 808.6)"/><ellipse cx="500.8" cy="779.5" rx="14.2" ry="5.9" transform="rotate(-116 500.8 779.5)"/><ellipse cx="520.7" cy="788.3" rx="14.2" ry="5.9" transform="rotate(-16 520.7 788.3)"/><ellipse cx="512.8" cy="758.2" rx="12.9" ry="5.4" transform="rotate(-113 512.8 758.2)"/><ellipse cx="530.3" cy="767.2" rx="12.9" ry="5.4" transform="rotate(-13 530.3 767.2)"/><ellipse cx="526.7" cy="736.5" rx="11.5" ry="4.8" transform="rotate(-109 526.7 736.5)"/><ellipse cx="541.8" cy="745.5" rx="11.5" ry="4.8" transform="rotate(-9 541.8 745.5)"/><ellipse cx="542.3" cy="714.4" rx="10.1" ry="4.2" transform="rotate(-106 542.3 714.4)"/><ellipse cx="555.2" cy="723.1" rx="10.1" ry="4.2" transform="rotate(-6 555.2 723.1)"/><ellipse cx="553.0" cy="712.7" rx="9.9" ry="4.1" transform="rotate(-56 553.0 712.7)"/></g>
<path d="M176 852 Q168 640 122 440" fill="none" stroke="#8669e0" stroke-width="5.5" stroke-linecap="round"/>
<g fill="#8669e0"><ellipse cx="148.3" cy="754.0" rx="26.7" ry="11.5" transform="rotate(-149 148.3 754.0)"/><ellipse cx="191.9" cy="750.8" rx="26.7" ry="11.5" transform="rotate(-39 191.9 750.8)"/><ellipse cx="146.1" cy="719.6" rx="25.7" ry="11.1" transform="rotate(-150 146.1 719.6)"/><ellipse cx="188.0" cy="715.8" rx="25.7" ry="11.1" transform="rotate(-40 188.0 715.8)"/><ellipse cx="143.3" cy="685.3" rx="24.7" ry="10.7" transform="rotate(-151 143.3 685.3)"/><ellipse cx="183.6" cy="681.0" rx="24.7" ry="10.7" transform="rotate(-41 183.6 681.0)"/><ellipse cx="140.0" cy="651.1" rx="23.7" ry="10.2" transform="rotate(-152 140.0 651.1)"/><ellipse cx="178.6" cy="646.4" rx="23.7" ry="10.2" transform="rotate(-42 178.6 646.4)"/><ellipse cx="136.1" cy="617.1" rx="22.8" ry="9.8" transform="rotate(-153 136.1 617.1)"/><ellipse cx="173.1" cy="612.0" rx="22.8" ry="9.8" transform="rotate(-43 173.1 612.0)"/><ellipse cx="131.8" cy="583.2" rx="21.8" ry="9.4" transform="rotate(-154 131.8 583.2)"/><ellipse cx="167.1" cy="577.7" rx="21.8" ry="9.4" transform="rotate(-44 167.1 577.7)"/><ellipse cx="126.9" cy="549.5" rx="20.8" ry="9.0" transform="rotate(-155 126.9 549.5)"/><ellipse cx="160.5" cy="543.7" rx="20.8" ry="9.0" transform="rotate(-45 160.5 543.7)"/><ellipse cx="121.5" cy="515.9" rx="19.8" ry="8.5" transform="rotate(-156 121.5 515.9)"/><ellipse cx="153.4" cy="509.9" rx="19.8" ry="8.5" transform="rotate(-46 153.4 509.9)"/><ellipse cx="115.6" cy="482.5" rx="18.8" ry="8.1" transform="rotate(-157 115.6 482.5)"/><ellipse cx="145.8" cy="476.3" rx="18.8" ry="8.1" transform="rotate(-47 145.8 476.3)"/><ellipse cx="109.1" cy="449.2" rx="17.9" ry="7.7" transform="rotate(-158 109.1 449.2)"/><ellipse cx="137.7" cy="442.8" rx="17.9" ry="7.7" transform="rotate(-48 137.7 442.8)"/><ellipse cx="118.5" cy="424.7" rx="17.4" ry="7.5" transform="rotate(-103 118.5 424.7)"/></g>
<path d="M176 852 Q140 770 66 700" fill="none" stroke="#b9a8ec" stroke-width="4" stroke-linecap="round"/>
<g fill="#b9a8ec"><ellipse cx="136.4" cy="801.6" rx="14.7" ry="6.5" transform="rotate(-171 136.4 801.6)"/><ellipse cx="155.7" cy="790.0" rx="14.7" ry="6.5" transform="rotate(-71 155.7 790.0)"/><ellipse cx="124.0" cy="781.7" rx="13.7" ry="6.0" transform="rotate(-174 124.0 781.7)"/><ellipse cx="141.3" cy="769.9" rx="13.7" ry="6.0" transform="rotate(-74 141.3 769.9)"/><ellipse cx="110.2" cy="762.2" rx="12.7" ry="5.6" transform="rotate(-177 110.2 762.2)"/><ellipse cx="125.6" cy="750.4" rx="12.7" ry="5.6" transform="rotate(-77 125.6 750.4)"/><ellipse cx="95.1" cy="742.9" rx="11.6" ry="5.1" transform="rotate(-180 95.1 742.9)"/><ellipse cx="108.7" cy="731.3" rx="11.6" ry="5.1" transform="rotate(-80 108.7 731.3)"/><ellipse cx="78.7" cy="723.9" rx="10.6" ry="4.7" transform="rotate(-183 78.7 723.9)"/><ellipse cx="90.5" cy="712.8" rx="10.6" ry="4.7" transform="rotate(-83 90.5 712.8)"/><ellipse cx="60.9" cy="705.2" rx="9.6" ry="4.2" transform="rotate(-186 60.9 705.2)"/><ellipse cx="71.1" cy="694.7" rx="9.6" ry="4.2" transform="rotate(-86 71.1 694.7)"/><ellipse cx="59.9" cy="694.2" rx="9.4" ry="4.1" transform="rotate(-137 59.9 694.2)"/></g>
<path d="M186 852 Q225 740 302 655" fill="none" stroke="#b3a2ea" stroke-width="4.5" stroke-linecap="round"/>
<g fill="#b3a2ea"><ellipse cx="202.1" cy="770.4" rx="22.7" ry="9.6" transform="rotate(-113 202.1 770.4)"/><ellipse cx="232.6" cy="784.9" rx="22.7" ry="9.6" transform="rotate(-17 232.6 784.9)"/><ellipse cx="215.4" cy="747.6" rx="21.4" ry="9.0" transform="rotate(-110 215.4 747.6)"/><ellipse cx="243.5" cy="762.6" rx="21.4" ry="9.0" transform="rotate(-14 243.5 762.6)"/><ellipse cx="229.7" cy="725.7" rx="20.0" ry="8.5" transform="rotate(-107 229.7 725.7)"/><ellipse cx="255.3" cy="740.9" rx="20.0" ry="8.5" transform="rotate(-11 255.3 740.9)"/><ellipse cx="244.9" cy="704.5" rx="18.7" ry="7.9" transform="rotate(-105 244.9 704.5)"/><ellipse cx="268.1" cy="719.8" rx="18.7" ry="7.9" transform="rotate(-9 268.1 719.8)"/><ellipse cx="261.0" cy="684.1" rx="17.3" ry="7.3" transform="rotate(-102 261.0 684.1)"/><ellipse cx="281.8" cy="699.2" rx="17.3" ry="7.3" transform="rotate(-6 281.8 699.2)"/><ellipse cx="277.9" cy="664.4" rx="16.0" ry="6.8" transform="rotate(-99 277.9 664.4)"/><ellipse cx="296.4" cy="679.3" rx="16.0" ry="6.8" transform="rotate(-3 296.4 679.3)"/><ellipse cx="295.8" cy="645.6" rx="14.7" ry="6.2" transform="rotate(-97 295.8 645.6)"/><ellipse cx="312.1" cy="660.0" rx="14.7" ry="6.2" transform="rotate(-1 312.1 660.0)"/><ellipse cx="310.6" cy="645.5" rx="14.3" ry="6.1" transform="rotate(-48 310.6 645.5)"/></g>
<path d="M196 852 Q215 790 262 730" fill="none" stroke="#bfb0ee" stroke-width="3.5" stroke-linecap="round"/>
<g fill="#bfb0ee"><ellipse cx="210.2" cy="789.0" rx="14.8" ry="6.6" transform="rotate(-112 210.2 789.0)"/><ellipse cx="229.9" cy="798.7" rx="14.8" ry="6.6" transform="rotate(-16 229.9 798.7)"/><ellipse cx="224.1" cy="766.9" rx="13.2" ry="5.9" transform="rotate(-108 224.1 766.9)"/><ellipse cx="241.1" cy="776.9" rx="13.2" ry="5.9" transform="rotate(-12 241.1 776.9)"/><ellipse cx="239.9" cy="745.2" rx="11.7" ry="5.2" transform="rotate(-104 239.9 745.2)"/><ellipse cx="254.2" cy="754.9" rx="11.7" ry="5.2" transform="rotate(-8 254.2 754.9)"/><ellipse cx="257.4" cy="723.6" rx="10.1" ry="4.5" transform="rotate(-100 257.4 723.6)"/><ellipse cx="269.3" cy="732.8" rx="10.1" ry="4.5" transform="rotate(-4 269.3 732.8)"/><ellipse cx="267.5" cy="723.0" rx="9.9" ry="4.4" transform="rotate(-52 267.5 723.0)"/></g>
<!-- MOTHER -->
<path d="M243 455 L335 455 C348 560 352 700 360 838 L336 842 C320 740 300 640 285 560 C282 640 278 740 268 828 L246 826 C250 700 238 560 243 455Z" fill="#efa565"/>
<path d="M243 455 L290 455 C292 560 282 700 268 828 L246 826 C252 700 238 560 243 455Z" fill="#c98a52"/>
<path d="M232 838 q20 -14 44 -6 q2 12 -6 14 q-24 4 -38 -2z" fill="#4a1d4e"/><path d="M246 826 l22 2 l-2 12 l-22 -4z" fill="#f0806c"/>
<path d="M336 842 l24 -4 q0 24 -10 40 q-10 6 -18 2 q-2 -20 4 -38z" fill="#f0806c"/><path d="M330 868 q10 8 26 -4 q0 14 -12 20 q-12 2 -14 -6z" fill="#4a1d4e"/>
<path d="M285 250 C310 232 345 238 355 262 C364 300 362 400 352 462 L236 462 C228 430 240 400 262 380 C278 340 270 280 285 250Z" fill="#83295a"/>
<!-- girl -->
<path d="M300 370 l40 -10 q20 40 12 92 q-16 12 -36 6 q0 -50 -16 -88z" fill="#f29a80"/>
<path d="M348 385 q20 -6 30 4 q-10 14 -30 12z" fill="#f29a80"/>
<path d="M222 250 C240 236 275 238 292 252 C300 290 298 340 286 372 L212 368 C204 330 208 280 222 250Z" fill="#e8327a"/>
<path d="M196 240 C186 200 205 165 240 165 C262 165 276 180 274 200 C272 225 262 240 246 246 C230 250 214 250 196 240Z" fill="#27337a"/>
<path d="M236 192 C250 182 272 188 274 206 C276 226 264 240 250 242 C238 240 232 215 236 192Z" fill="#f7a68e"/>
<circle cx="222" cy="180" r="9" fill="#f05a8c"/><circle cx="222" cy="180" r="4" fill="#fbd0dc"/>
<!-- mother's arm around girl -->
<path d="M330 262 C352 270 358 320 340 350 C310 395 250 410 212 392 C196 382 194 362 206 352 C230 368 280 350 300 318 C306 300 310 275 330 262Z" fill="#83295a"/>
<path d="M188 340 q16 -10 34 2 q6 12 -4 22 q-20 4 -30 -8z" fill="#f29a80"/>
<!-- mother head -->
<path d="M300 230 l34 -6 l4 40 q-20 10 -36 -4z" fill="#f29a80"/>
<path d="M282 176 C286 150 330 140 346 168 C352 200 340 226 312 232 C296 232 286 222 284 210 L276 206 L284 196Z" fill="#f7a68e"/>
<path d="M284 168 C292 140 340 134 352 166 C372 166 388 190 382 218 C380 244 392 262 378 284 C362 272 354 246 354 222 C340 226 326 214 318 196 C308 186 294 180 284 168Z" fill="#27337a"/>
<!-- FATHER -->
<path d="M410 445 L522 445 C540 560 560 700 590 818 L556 830 C530 740 500 640 480 540 C476 640 474 740 468 832 L436 832 C428 700 404 560 410 445Z" fill="#2a8b8a"/>
<path d="M478 445 L522 445 C540 560 560 700 590 818 L556 830 C530 740 496 600 478 445Z" fill="#5d6173"/>
<path d="M438 830 l32 0 q8 24 10 42 q-18 10 -40 2 q-6 -22 -2 -44z" fill="#1f5670"/><path d="M436 868 q22 10 44 0 v8 q-22 8 -44 0z" fill="#7fe0d8"/>
<path d="M556 828 l32 -10 q14 14 26 22 q-6 12 -22 14 q-24 0 -44 -8z" fill="#1f5670"/><path d="M546 846 q34 14 66 -4 l2 6 q-34 20 -70 4z" fill="#7fe0d8"/>
<path d="M420 215 C450 200 500 205 520 225 C534 290 532 380 524 450 L408 450 C414 380 420 330 404 280 C396 250 400 225 420 215Z" fill="#f5dcf2"/>
<path d="M470 330 C490 350 500 400 478 450 L408 450 C414 400 420 350 414 310 C430 330 450 320 470 330Z" fill="#e3c2e6" opacity="0.700"/>
<path d="M470 190 l34 -6 l4 36 q-20 10 -40 0z" fill="#f08f78"/>
<path d="M474 120 C490 100 530 110 530 140 L536 166 L526 170 C528 190 518 198 500 194 C482 186 472 160 474 120Z" fill="#f59a80"/>
<path d="M476 128 C480 150 486 176 500 194 C512 198 522 194 524 182 C508 180 498 168 496 150 C494 138 486 130 476 128Z" fill="#27287e"/>
<path d="M452 122 C448 96 470 82 490 92 C498 78 528 82 528 100 C540 104 540 118 530 124 C516 116 500 120 492 130 C486 138 480 150 478 162 C462 156 454 140 452 122Z" fill="#27287e"/>
<!-- father arms -->
<path d="M500 232 C540 240 590 215 640 170 L656 186 C620 250 560 290 505 290Z" fill="#f08f78"/>
<path d="M520 270 C560 280 590 270 612 240 L628 262 C606 300 560 320 520 312Z" fill="#f59a80"/>
<path d="M420 215 C450 205 490 210 508 232 C520 250 516 280 500 292 C470 286 440 260 420 215Z" fill="#f5dcf2"/>
<!-- BOY -->
<path d="M622 285 L672 270 C700 300 730 320 756 300 L766 330 C740 350 720 380 670 388 C650 370 630 330 622 285Z" fill="#9b1d2c"/>
<path d="M748 292 q14 -12 26 -4 q6 16 0 34 q-14 2 -22 -8z M742 322 q16 -2 26 8 q2 18 -6 32 q-14 -2 -20 -14z" fill="#7b8ee0"/>
<path d="M588 150 C610 140 640 150 652 170 C668 200 676 240 672 276 L622 292 C606 250 588 200 588 150Z" fill="#7a27a6"/>
<path d="M582 150 C574 110 580 80 590 62 L606 64 C604 100 610 130 618 150Z" fill="#b093f2"/>
<path d="M636 158 C660 130 690 110 712 98 L722 112 C704 140 680 170 654 190Z" fill="#b093f2"/>
<path d="M584 62 q-6 -22 4 -40 q8 -2 10 8 q6 -8 12 0 q2 18 -6 34z" fill="#f59a80"/>
<path d="M708 100 q6 -22 24 -30 q8 4 2 12 q10 -2 8 8 q-10 16 -26 22z" fill="#f59a80"/>
<path d="M590 100 C600 84 626 88 630 108 C634 130 624 150 606 150 C592 146 586 124 590 100Z" fill="#f7a68e"/>
<path d="M596 90 C610 70 650 76 656 108 C660 132 650 150 634 152 C624 140 620 120 612 106 C606 100 600 96 596 90Z" fill="#5f6a97"/>
<!-- father hand on boy -->
<path d="M626 180 q14 -14 28 -6 q6 14 -6 28 q-16 4 -22 -22z" fill="#f59a80"/>
</g>

<g font-family="Liberation Serif, serif" font-weight="bold" font-style="italic" font-size="20.800" fill="#ffffff">
<text x="70.300" y="155.600" textLength="265.600" lengthAdjust="spacingAndGlyphs">Баланың жауапкершілігін</text>
<text x="83" y="188.400" textLength="240" lengthAdjust="spacingAndGlyphs">қалай қалыптастыруға</text>
<text x="161.400" y="217.800" textLength="82.500" lengthAdjust="spacingAndGlyphs">болады?</text>
</g>
</g>
<!-- /SECTION:slidedef -->
</defs>
<!-- SECTION:frame -->
<rect x="192" y="149" width="1215" height="652" fill="#c0d8f8"/>
<rect x="192" y="149" width="1215" height="19.500" fill="#fdfdfe"/>
<rect x="192" y="168.500" width="1215" height="18" fill="#bfd9fb"/>
<rect x="192" y="186.500" width="1215" height="68" fill="url(#gRib)"/>
<rect x="192" y="254.500" width="1215" height="530" fill="url(#gWork)"/>
<!-- /SECTION:frame -->
<!-- SECTION:title -->
<g id="titlebar">
<!-- quick access toolbar -->
<path d="M222 150.500 H316 a8 8 0 0 1 0 16 H234 C228 166.500 227 152 222 150.500z" fill="#f4f7fb" stroke="#9aa3b1" stroke-width="0.800"/>
<!-- office button -->
<circle cx="209.700" cy="166.300" r="14.300" fill="#e4eaf3" stroke="#a4aebd" stroke-width="1"/>
<circle cx="209.700" cy="166.300" r="12.600" fill="#f7f9fc"/>
<path d="M197.100 166.300 a12.600 12.600 0 0 0 25.200 0z" fill="#d5deeb"/>
<g transform="translate(209.700,166.500) scale(1.300) translate(-209.500,-164.700)">
<rect x="203" y="157" width="6.500" height="7.500" rx="0.800" fill="#e36b2c"/><rect x="204.500" y="159" width="3" height="3" fill="#f6d9c4"/>
<rect x="210.500" y="160" width="5.500" height="5" rx="0.800" fill="#2f8fd0"/><rect x="212" y="161.500" width="2.300" height="2.300" fill="#bfe0f4"/>
<rect x="203" y="165.500" width="6.500" height="7" rx="0.800" fill="#f0b11d"/><rect x="204.500" y="167.200" width="3" height="3" fill="#fdf0c2"/>
<rect x="210.500" y="166" width="5.500" height="5.500" rx="0.800" fill="#5ea53a"/><rect x="212" y="167.600" width="2.300" height="2.300" fill="#dff0d0"/>
</g>
<!-- QAT icons -->
<g fill="none" stroke="#3b56b8" stroke-width="1.500" stroke-linecap="round">
<path d="M235.500 157 h3.500 a2.800 2.800 0 0 1 0 5.600 h-0.500"/><path d="M237.200 154.800 l-2.200 2.200 l2.200 2.200" stroke-width="1.200"/>
<path d="M315.500 157 h-3.500 a2.800 2.800 0 0 0 0 5.600 h3 a2.800 2.800 0 0 0 2 -4.500" /><path d="M313.800 154.800 l2.200 2.200 l-2.200 2.200" stroke-width="1.200"/>
</g>
<path d="M244.500 158 h3 l-1.500 1.800z" fill="#444"/>
<path d="M258 156 q3 -3 6 0" fill="none" stroke="#555" stroke-width="1.200"/><path d="M258.500 158.500 l2.500 3 l4.500 -6.500" fill="none" stroke="#3b56b8" stroke-width="1.600"/>
<rect x="274" y="153.500" width="8.500" height="9" fill="#4b4fae"/><rect x="275.800" y="153.500" width="4.800" height="3.500" fill="#e9ecf6"/><rect x="276" y="159" width="4.500" height="3.500" fill="#1e2050"/>
<path d="M291 153.500 h4.500 l2.500 2.500 v7 h-7z" fill="#fbfbfb" stroke="#6a6f78" stroke-width="0.800"/>
<path d="M329.500 155.500 h5" stroke="#333" stroke-width="1"/><path d="M329.500 157.800 h5 l-2.500 2.700z" fill="#333"/>
<!-- title -->
<text x="728.300" y="162.200" font-size="9.600" fill="#3c3c3c" textLength="144" lengthAdjust="spacingAndGlyphs">жиналысс - Microsoft PowerPoint</text>
<!-- window controls -->
<g fill="none" stroke="#1c1c1c" stroke-width="1.100">
<path d="M1309 157.400 h7.500"/>
<rect x="1345.500" y="155.400" width="6" height="6" rx="0.800"/><path d="M1347.200 155.400 v-1 h5.300 v5.300 h-1"/>
<path d="M1383.200 154.200 l7.400 7.600 M1390.600 154.200 l-7.400 7.600"/>
</g>
<!-- help -->
<circle cx="1398.600" cy="177.200" r="4.600" fill="#2f6fd6" stroke="#dfeaf9" stroke-width="1"/>
<path d="M1396.500 177.400 l1.600 1.600 l2.800 -3.600" fill="none" stroke="#fff" stroke-width="1.200"/>
<!-- tabs -->
<path d="M230 186.500 v-15.200 a2.500 2.500 0 0 1 2.500 -2.500 h39 a2.500 2.500 0 0 1 2.500 2.500 v15.200z" fill="url(#gTab)" stroke="#a9c4e6" stroke-width="0.700"/>
<g font-size="8.300" fill="#3f5f93">
<text x="237" y="181.300" textLength="30" lengthAdjust="spacingAndGlyphs">Главная</text>
<text x="285.300" y="181.300" textLength="28" lengthAdjust="spacingAndGlyphs">Вставка</text>
<text x="332" y="181.300" textLength="27" lengthAdjust="spacingAndGlyphs">Дизайн</text>
<text x="377.500" y="181.300" textLength="37" lengthAdjust="spacingAndGlyphs">Анимация</text>
<text x="433" y="181.300" textLength="56" lengthAdjust="spacingAndGlyphs">Показ слайдов</text>
<text x="507" y="181.300" textLength="63.500" lengthAdjust="spacingAndGlyphs">Рецензирование</text>
<text x="588" y="181.300" textLength="14.500" lengthAdjust="spacingAndGlyphs">Вид</text>
</g>
</g>
<!-- /SECTION:title -->
<!-- SECTION:ribbon -->
<g id="ribbon">
<rect x="194.0" y="188.500" width="135.0" height="65" rx="2.500" fill="url(#gGrp)" stroke="#aec3df" stroke-width="0.800"/>
<path d="M194.4 241.500 h134.2 v9.500 a2.500 2.500 0 0 1 -2.500 2.500 h-129.2 a2.500 2.500 0 0 1 -2.500 -2.500z" fill="#c0d5ee"/>
<path d="M330.2 190 v62" stroke="#e9f1fa" stroke-width="1"/>
<rect x="331.6" y="188.500" width="107.8" height="65" rx="2.500" fill="url(#gGrp)" stroke="#aec3df" stroke-width="0.800"/>
<path d="M332.0 241.500 h107.0 v9.500 a2.500 2.500 0 0 1 -2.500 2.500 h-102.0 a2.500 2.500 0 0 1 -2.500 -2.500z" fill="#c0d5ee"/>
<path d="M440.6 190 v62" stroke="#e9f1fa" stroke-width="1"/>
<rect x="441.3" y="188.500" width="165.3" height="65" rx="2.500" fill="url(#gGrp)" stroke="#aec3df" stroke-width="0.800"/>
<path d="M441.7 241.500 h164.5 v9.500 a2.500 2.500 0 0 1 -2.500 2.500 h-159.5 a2.500 2.500 0 0 1 -2.500 -2.500z" fill="#c0d5ee"/>
<path d="M607.8 190 v62" stroke="#e9f1fa" stroke-width="1"/>
<rect x="609.4" y="188.500" width="241.6" height="65" rx="2.500" fill="url(#gGrp)" stroke="#aec3df" stroke-width="0.800"/>
<path d="M609.8 241.500 h240.8 v9.500 a2.500 2.500 0 0 1 -2.500 2.500 h-235.8 a2.500 2.500 0 0 1 -2.500 -2.500z" fill="#c0d5ee"/>
<path d="M852.2 190 v62" stroke="#e9f1fa" stroke-width="1"/>
<rect x="854.0" y="188.500" width="323.4" height="65" rx="2.500" fill="url(#gGrp)" stroke="#aec3df" stroke-width="0.800"/>
<path d="M854.4 241.500 h322.6 v9.500 a2.500 2.500 0 0 1 -2.500 2.500 h-317.6 a2.500 2.500 0 0 1 -2.500 -2.500z" fill="#c0d5ee"/>
<path d="M1178.6 190 v62" stroke="#e9f1fa" stroke-width="1"/>
<rect x="1180.0" y="188.500" width="65.3" height="65" rx="2.500" fill="url(#gGrp)" stroke="#aec3df" stroke-width="0.800"/>
<path d="M1180.4 241.500 h64.5 v9.500 a2.500 2.500 0 0 1 -2.500 2.500 h-59.5 a2.500 2.500 0 0 1 -2.500 -2.500z" fill="#c0d5ee"/>
<path d="M1246.5 190 v62" stroke="#e9f1fa" stroke-width="1"/>
<g font-size="8.300" fill="#2f4f87">
<text x="198.4" y="227" textLength="31.6" lengthAdjust="spacingAndGlyphs">Вставить</text>
<text x="249" y="200.3" textLength="34.8" lengthAdjust="spacingAndGlyphs">Вырезать</text>
<text x="249" y="216.8" textLength="45" lengthAdjust="spacingAndGlyphs">Копировать</text>
<text x="249" y="232.8" textLength="75.4" lengthAdjust="spacingAndGlyphs">Формат по образцу</text>
<text x="227.5" y="250.5" textLength="54.8" lengthAdjust="spacingAndGlyphs" fill="#4a6a9c">Буфер обмена</text>
<text x="335.3" y="227" textLength="30" lengthAdjust="spacingAndGlyphs">Создать</text>
<text x="336.6" y="237.4" textLength="21" lengthAdjust="spacingAndGlyphs">слайд</text>
<text x="383.7" y="200.3" textLength="23.3" lengthAdjust="spacingAndGlyphs">Макет</text>
<text x="383.7" y="216.8" textLength="50.3" lengthAdjust="spacingAndGlyphs">Восстановить</text>
<text x="383.7" y="232.8" textLength="29.3" lengthAdjust="spacingAndGlyphs">Удалить</text>
<text x="371.5" y="250.5" textLength="27.5" lengthAdjust="spacingAndGlyphs" fill="#4a6a9c">Слайды</text>
<text x="504" y="250.5" textLength="26.7" lengthAdjust="spacingAndGlyphs" fill="#4a6a9c">Шрифт</text>
<text x="712.5" y="250.5" textLength="22.5" lengthAdjust="spacingAndGlyphs" fill="#4a6a9c">Абзац</text>
<text x="963" y="227" textLength="49" lengthAdjust="spacingAndGlyphs">Упорядочить</text>
<text x="988.8" y="250.5" textLength="39.2" lengthAdjust="spacingAndGlyphs" fill="#4a6a9c">Рисование</text>
<text x="1198.8" y="200.3" textLength="22.2" lengthAdjust="spacingAndGlyphs">Найти</text>
<text x="1198.8" y="216.8" textLength="35" lengthAdjust="spacingAndGlyphs">Заменить</text>
<text x="1198.8" y="232.8" textLength="34.5" lengthAdjust="spacingAndGlyphs">Выделить</text>
<text x="1182.5" y="250.5" textLength="61" lengthAdjust="spacingAndGlyphs" fill="#4a6a9c">Редактирование</text>
</g>
<g font-size="8.300" fill="#8e9db8">
<text x="737.4" y="200.3" textLength="75.8" lengthAdjust="spacingAndGlyphs">Направление текста</text>
<text x="737.4" y="216.8" textLength="62" lengthAdjust="spacingAndGlyphs">Выровнять текст</text>
<text x="737.4" y="232.8" textLength="101.6" lengthAdjust="spacingAndGlyphs">Преобразовать в SmartArt</text>
<text x="1016" y="227" textLength="57.2" lengthAdjust="spacingAndGlyphs">Экспресс-стили</text>
<text x="1091.6" y="200.3" textLength="60.4" lengthAdjust="spacingAndGlyphs">Заливка фигуры</text>
<text x="1091.6" y="216.8" textLength="56.4" lengthAdjust="spacingAndGlyphs">Контур фигуры</text>
<text x="1091.6" y="232.8" textLength="74" lengthAdjust="spacingAndGlyphs">Эффекты для фигур</text>
</g>
<path d="M212.4 233.5 h3.2 l-1.6 1.6z" fill="#4a6a9c"/>
<path d="M359.9 235.0 h3.2 l-1.6 1.6z" fill="#4a6a9c"/>
<path d="M410.4 197.5 h3.2 l-1.6 1.6z" fill="#4a6a9c"/>
<path d="M986.9 233.5 h3.2 l-1.6 1.6z" fill="#4a6a9c"/>
<path d="M1042.4 233.5 h3.2 l-1.6 1.6z" fill="#9aa7bd"/>
<path d="M1237.9 213.5 h3.2 l-1.6 1.6z" fill="#4a6a9c"/>
<path d="M1237.9 229.5 h3.2 l-1.6 1.6z" fill="#4a6a9c"/>
<path d="M817.6 197.5 h2.8 l-1.4 1.4z" fill="#9aa7bd"/>
<path d="M803.6 213.5 h2.8 l-1.4 1.4z" fill="#9aa7bd"/>
<path d="M843.6 229.5 h2.8 l-1.4 1.4z" fill="#9aa7bd"/>
<path d="M1156.6 197.5 h2.8 l-1.4 1.4z" fill="#9aa7bd"/>
<path d="M1152.6 213.5 h2.8 l-1.4 1.4z" fill="#9aa7bd"/>
<path d="M1169.6 229.5 h2.8 l-1.4 1.4z" fill="#9aa7bd"/>
<path d="M320.8 245.500 h3.500 M320.8 245.500 v3.500 M323.3 249.500 h2 v-2" fill="none" stroke="#7f96ba" stroke-width="0.800"/>
<path d="M598.5 245.500 h3.500 M598.5 245.500 v3.500 M601.0 249.500 h2 v-2" fill="none" stroke="#7f96ba" stroke-width="0.800"/>
<path d="M843 245.500 h3.500 M843 245.500 v3.500 M845.5 249.500 h2 v-2" fill="none" stroke="#7f96ba" stroke-width="0.800"/>
<path d="M1169.5 245.500 h3.500 M1169.5 245.500 v3.500 M1172.0 249.500 h2 v-2" fill="none" stroke="#7f96ba" stroke-width="0.800"/>
</g>
<g id="ribbon-icons">
<rect x="206.500" y="196" width="14" height="15.500" rx="1.500" fill="#e9b35c" stroke="#b98331" stroke-width="0.800"/>
<rect x="210" y="193.500" width="7" height="4" rx="1.200" fill="#cfd3d9" stroke="#8a8f98" stroke-width="0.600"/>
<path d="M212.500 200.500 h8 l3 3 v9 h-11z" fill="#fbfcfe" stroke="#8b93a3" stroke-width="0.700"/>
<path d="M214.500 205 h6 M214.500 207 h6 M214.500 209 h6" stroke="#b7bfcc" stroke-width="0.600"/>
<path d="M238.500 194.500 l3.500 6 M243.500 194.500 l-3.500 6" stroke="#4a5fa8" stroke-width="1.100" fill="none"/><circle cx="239" cy="201.800" r="1.500" fill="none" stroke="#3c4f9a" stroke-width="1"/><circle cx="243" cy="201.800" r="1.500" fill="none" stroke="#3c4f9a" stroke-width="1"/>
<path d="M236.500 210.500 h4 l1.500 1.500 v5 h-5.500z" fill="#f7f9fc" stroke="#6d7fa6" stroke-width="0.700"/><path d="M239.500 213 h4 l1.500 1.500 v5 h-5.500z" fill="#f7f9fc" stroke="#4d63a0" stroke-width="0.700"/>
<path d="M243.500 226.500 l-3.500 4" stroke="#6a5a3a" stroke-width="1.300"/><path d="M236.500 232.500 q2 -3.500 5 -2.500 q0.500 3 -2 4.500z" fill="#f0c24a" stroke="#b48a1e" stroke-width="0.600"/>
<rect x="343" y="198.500" width="15.500" height="11.500" rx="1" fill="#f2f5fa" stroke="#8d99ad" stroke-width="0.800"/><rect x="345.500" y="201" width="10.500" height="3" fill="#c7cfdb"/><rect x="345.500" y="205.500" width="10.500" height="2.500" fill="#d9dfe8"/>
<path d="M343 194 l1 2.600 l2.700 -1 l-1.200 2.500 l2.500 1.200 l-2.600 1 l1 2.600 l-2.500 -1.200 l-1.200 2.500 l-1 -2.600 l-2.600 1 l1.200 -2.500 l-2.500 -1.200 l2.600 -1 l-1 -2.600 l2.500 1.200z" fill="#fbe06a" stroke="#e0b52c" stroke-width="0.400"/>
<rect x="370.800" y="194" width="9.500" height="7.500" fill="#f4f6fa" stroke="#5a6b8e" stroke-width="0.800"/><rect x="372.300" y="196.500" width="3" height="3.500" fill="#8c99b3"/><rect x="376" y="196.500" width="3" height="3.500" fill="#b8c2d4"/>
<rect x="372.500" y="211" width="9" height="7.500" fill="#f4f6fa" stroke="#5a6b8e" stroke-width="0.800"/><path d="M374 213.500 h6 M374 215.500 h6" stroke="#8c99b3" stroke-width="0.700"/><path d="M370.500 212.500 q1 -4 5 -3" fill="none" stroke="#3c4f9a" stroke-width="1"/><path d="M374.500 208 l2 1.600 l-2.200 1.300z" fill="#3c4f9a"/>
<rect x="373" y="226.500" width="8.500" height="6.500" fill="#f4f6fa" stroke="#5a6b8e" stroke-width="0.800"/><path d="M370 230.500 l3.600 3.800 M373.600 230.500 l-3.600 3.800" stroke="#d6332a" stroke-width="1.200"/>
<rect x="444.600" y="196" width="104.500" height="15.500" fill="#edf2f9" stroke="#b7c8e0" stroke-width="0.700"/><path d="M521.300 196 v15.500" stroke="#b7c8e0" stroke-width="0.700"/>
<text font-size="8.300" x="523.8" y="206" textLength="8.4" lengthAdjust="spacingAndGlyphs" fill="#9aa7bd">33</text>
<path d="M514.500 203 h3 l-1.500 1.600z M541.500 203 h3 l-1.500 1.600z" fill="#9aa7bd"/>
<rect x="551.5" y="196" width="33.2" height="15.5" rx="1.500" fill="#cddbee" stroke="#a9bcd8" stroke-width="0.700"/><rect x="552.2" y="196.7" width="31.8" height="7.8" rx="1" fill="#d9e4f2"/>
<rect x="587.5" y="196" width="16.9" height="15.5" rx="1.500" fill="#cddbee" stroke="#a9bcd8" stroke-width="0.700"/><rect x="588.2" y="196.7" width="15.5" height="7.8" rx="1" fill="#d9e4f2"/>
<rect x="444" y="218.8" width="133.2" height="15.6" rx="1.500" fill="#cddbee" stroke="#a9bcd8" stroke-width="0.700"/><rect x="444.7" y="219.5" width="131.8" height="7.8" rx="1" fill="#d9e4f2"/>
<rect x="579.4" y="218.8" width="25.0" height="15.6" rx="1.500" fill="#cddbee" stroke="#a9bcd8" stroke-width="0.700"/><rect x="580.1" y="219.5" width="23.6" height="7.8" rx="1" fill="#d9e4f2"/>
<g font-family="Liberation Serif, serif" fill="#7d8aa3">
<text x="555.500" y="208" font-size="10.500">A</text><text x="572" y="208" font-size="8">A</text>
<text x="448.500" y="230" font-size="8.500" font-weight="bold">Ж</text><text x="466" y="230" font-size="8.500" font-style="italic">К</text><text x="483.500" y="230" font-size="8.500" text-decoration="underline">Ч</text><text x="499.500" y="229.500" font-size="6.500" text-decoration="line-through">abc</text><text x="519.500" y="230" font-size="8.500" font-weight="bold" font-family="Liberation Sans, sans-serif">S</text><text x="535" y="227" font-size="6" font-family="Liberation Sans, sans-serif">AV</text><text x="558.500" y="230" font-size="8.500">Aa</text><text x="584.500" y="228.500" font-size="9.500">A</text>
</g>
<path d="M536 230.500 h8" stroke="#7d8aa3" stroke-width="0.700"/><rect x="582.500" y="230" width="11.500" height="2.300" fill="#b79a9a"/>
<path d="M564.600 198.500 h2 M565.600 197.500 v2 M577.500 199 h2" stroke="#7d8aa3" stroke-width="0.600"/>
<path d="M591 205.500 l4 -5 l4 3.500 l-4 5z" fill="#e6ebf3" stroke="#8c99b3" stroke-width="0.700"/><text x="591.500" y="201" font-size="4" fill="#7d8aa3">ab</text>
<path d="M549 226 h2.400 l-1.200 1.400z M572 226 h2.400 l-1.200 1.400z M599 226 h2.400 l-1.200 1.400z" fill="#9aa7bd"/>
<path d="M461.5 219.500 v14" stroke="#bccbe2" stroke-width="0.600"/>
<path d="M478.5 219.500 v14" stroke="#bccbe2" stroke-width="0.600"/>
<path d="M495.5 219.500 v14" stroke="#bccbe2" stroke-width="0.600"/>
<path d="M514 219.500 v14" stroke="#bccbe2" stroke-width="0.600"/>
<path d="M531 219.500 v14" stroke="#bccbe2" stroke-width="0.600"/>
<path d="M554.5 219.500 v14" stroke="#bccbe2" stroke-width="0.600"/>
<rect x="611.5" y="196" width="48.2" height="15.5" rx="1.500" fill="#cddbee" stroke="#a9bcd8" stroke-width="0.700"/><rect x="612.2" y="196.7" width="46.8" height="7.8" rx="1" fill="#d9e4f2"/>
<rect x="662" y="196" width="33.3" height="15.5" rx="1.500" fill="#cddbee" stroke="#a9bcd8" stroke-width="0.700"/><rect x="662.7" y="196.7" width="31.9" height="7.8" rx="1" fill="#d9e4f2"/>
<rect x="697.8" y="196" width="22.8" height="15.5" rx="1.500" fill="#cddbee" stroke="#a9bcd8" stroke-width="0.700"/><rect x="698.5" y="196.7" width="21.4" height="7.8" rx="1" fill="#d9e4f2"/>
<rect x="611.5" y="218.8" width="68.8" height="15.6" rx="1.500" fill="#cddbee" stroke="#a9bcd8" stroke-width="0.700"/><rect x="612.2" y="219.5" width="67.4" height="7.8" rx="1" fill="#d9e4f2"/>
<rect x="682.6" y="218.8" width="22.7" height="15.6" rx="1.500" fill="#cddbee" stroke="#a9bcd8" stroke-width="0.700"/><rect x="683.3000000000001" y="219.5" width="21.3" height="7.8" rx="1" fill="#d9e4f2"/>
<path d="M618.0 200.5 h6.5 M618.0 203.5 h6.5 M618.0 206.5 h6.5 " stroke="#7d8aa3" stroke-width="0.9" fill="none"/>
<path d="M615.500 200.500 h1 M615.500 203.500 h1 M615.500 206.500 h1" stroke="#7d8aa3" stroke-width="1"/>
<path d="M642.0 200.5 h6.5 M642.0 203.5 h6.5 M642.0 206.5 h6.5 " stroke="#7d8aa3" stroke-width="0.9" fill="none"/>
<path d="M639.500 199.500 v2 M639.500 202.500 v2 M639.500 205.500 v2" stroke="#7d8aa3" stroke-width="0.800"/>
<path d="M631.500 203 h2.400 l-1.200 1.400z M655 203 h2.400 l-1.200 1.400z M715.500 203 h2.400 l-1.200 1.400z M700.500 226 h2.400 l-1.200 1.400z" fill="#9aa7bd"/>
<path d="M667.0 199.5 h8 M669.0 202.1 h6 M669.0 204.7 h6 M667.0 207.3 h8 " stroke="#7d8aa3" stroke-width="0.9" fill="none"/>
<path d="M684.0 199.5 h8 M686.0 202.1 h6 M686.0 204.7 h6 M684.0 207.3 h8 " stroke="#7d8aa3" stroke-width="0.9" fill="none"/>
<path d="M704.5 200.0 h7 M704.5 202.4 h7 M704.5 204.8 h7 M704.5 207.2 h7 " stroke="#7d8aa3" stroke-width="0.9" fill="none"/>
<path d="M701.500 199 v9 M700.300 200.500 l1.200 -1.500 l1.200 1.500 M700.300 206.500 l1.200 1.500 l1.200 -1.500" stroke="#7d8aa3" stroke-width="0.700" fill="none"/>
<path d="M616.0 222.5 h8.5 M616.0 225.1 h6 M616.0 227.7 h8.5 M616.0 230.3 h6 " stroke="#7d8aa3" stroke-width="1.2" fill="none"/>
<path d="M633.0 222.5 h8.5 M634.2 225.1 h6 M633.0 227.7 h8.5 M634.2 230.3 h6 " stroke="#7d8aa3" stroke-width="1.2" fill="none"/>
<path d="M651.0 222.5 h8.5 M653.5 225.1 h6 M651.0 227.7 h8.5 M653.5 230.3 h6 " stroke="#7d8aa3" stroke-width="1.2" fill="none"/>
<path d="M668.0 222.5 h8.5 M668.0 225.1 h8.5 M668.0 227.7 h8.5 M668.0 230.3 h8.5 " stroke="#7d8aa3" stroke-width="1.4" fill="none"/>
<rect x="686.500" y="222" width="9.500" height="8.500" fill="#8f9bb2"/><path d="M686.500 224.700 h9.500 M686.500 227.500 h9.500" stroke="#d9e4f2" stroke-width="0.900"/>
<path d="M635.5 197 v13.500" stroke="#bccbe2" stroke-width="0.600"/>
<path d="M678.6 197 v13.500" stroke="#bccbe2" stroke-width="0.600"/>
<path d="M628.7 219.800 v13.500" stroke="#bccbe2" stroke-width="0.600"/>
<path d="M645.9 219.800 v13.500" stroke="#bccbe2" stroke-width="0.600"/>
<path d="M663 219.800 v13.500" stroke="#bccbe2" stroke-width="0.600"/>
<path d="M725.500 193.500 v9 M728.500 193.500 v9 M731.500 195 v7.500 M730 196.500 l1.500 -2 l1.500 2 M724.500 203 h9" stroke="#7f8da8" stroke-width="0.900" fill="none"/>
<rect x="725" y="210" width="8.500" height="8" fill="#e4eaf3" stroke="#9aa7bd" stroke-width="0.700"/><path d="M726.500 213 h5.500 M726.500 215 h5.500" stroke="#9aa7bd" stroke-width="0.700"/>
<rect x="727.500" y="228" width="7" height="6" fill="#e4eaf3" stroke="#9aa7bd" stroke-width="0.700"/><path d="M724.500 226 h8 M724.500 228.200 h3" stroke="#9aa7bd" stroke-width="0.900"/>
<rect x="857" y="192" width="102.500" height="45.500" fill="#dde8f6" stroke="#b4c6df" stroke-width="0.700"/>
<rect x="949.700" y="192.300" width="9.500" height="15" fill="#e9eff8"/><rect x="949.700" y="207.500" width="9.500" height="15" fill="#d3dff0"/><rect x="949.700" y="222.500" width="9.500" height="14.700" fill="#d3dff0"/>
<path d="M953 200.500 h3 l-1.500 -1.700z" fill="#b4bfd1"/><path d="M953 214.500 h3 l-1.500 1.700z" fill="#5d6f94"/><path d="M952.700 226.500 h3.600 M952.700 228.500 h3.600 l-1.800 2z" fill="#5d6f94" stroke="#5d6f94" stroke-width="0.700"/>
<g fill="none" stroke="#505a6b" stroke-width="0.800">
<rect x="860" y="195.500" width="9" height="7" fill="#f6f8fb"/><path d="M861.500 197.500 h2.500" stroke-width="0.700"/>
<path d="M875.500 195 l8 8"/><path d="M891 195 l8 8 m0 -3 v3 h-3"/>
<rect x="905" y="195.500" width="9.500" height="7"/><ellipse cx="924.800" cy="199" rx="4.700" ry="3.500"/><rect x="935.500" y="195.500" width="9.500" height="7" rx="2"/>
<path d="M864.400 209.500 l4 8 h-8z"/><path d="M875.500 210.500 h4 v7 h5"/><path d="M890.500 210.500 h4 v7 h5 m-2 -2 l2 2 l-2 2"/>
<path d="M904.500 212.300 h5 v-2.300 l4.500 4 l-4.500 4 v-2.300 h-5z"/><path d="M922.500 209.500 h4.600 v4.500 h2.300 l-4.600 4.500 l-4.600 -4.500 h2.300z"/><path d="M936.500 218 v-5 q0 -2.500 3 -2.500 q2.500 0 2.500 2 q2.500 0 2.500 3 v2.500z"/>
<path d="M862.500 225.500 l3 2 l-3 2.500 l3.500 3.500 m0 -2 v2 h-2"/><path d="M875.500 226 q6 0 8 7"/><path d="M890 233 q2.500 -12 5 -3.500 q1.500 5 4 3.500"/>
<path d="M911.500 225 q-2 0 -2 2 v1 q0 1.500 -1.500 1.500 q1.500 0 1.500 1.500 v1 q0 2 2 2"/><path d="M923 225 q2 0 2 2 v1 q0 1.500 1.500 1.500 q-1.500 0 -1.500 1.500 v1 q0 2 -2 2"/>
<path d="M940.300 225 l1.400 3.300 l3.500 0.300 l-2.700 2.300 l0.900 3.500 l-3.100 -1.900 l-3.100 1.900 l0.900 -3.500 l-2.700 -2.300 l3.500 -0.300z"/>
</g>
<rect x="978" y="193.500" width="8" height="7.500" fill="#d7d9dd" stroke="#6f7684" stroke-width="0.700"/><rect x="982" y="198" width="9.500" height="9" fill="#f6d96a" stroke="#b89a2e" stroke-width="0.700"/><rect x="988.500" y="204" width="8.500" height="8" fill="#d7d9dd" stroke="#6f7684" stroke-width="0.700"/>
<path d="M1036 194.500 h17 v11 q-1 6 -8 6 q-8 0 -9 -6z" fill="#d9e1ee" stroke="#c3cede" stroke-width="0.700"/><path d="M1054 201 l-6 8 l-2 3" stroke="#aab5c8" stroke-width="1.300" fill="none"/>
<path d="M1081 196.500 l4 -3 l3 3.500 l-4 3z" fill="#e9edf4" stroke="#9aa7bd" stroke-width="0.700"/><rect x="1077.500" y="200.500" width="12" height="2.800" fill="#a9b3c4"/>
<path d="M1079 214.500 h9 l2 -3" fill="none" stroke="#9aa7bd" stroke-width="0.900"/><rect x="1077.500" y="216.500" width="12" height="2.800" fill="#8f9bb0"/>
<rect x="1080" y="226" width="8" height="6" fill="#e4e9f1" stroke="#b7c1d2" stroke-width="0.700"/>
<path d="M1186.500 197.500 a1.700 2 0 1 0 3.400 0 v-3 h-3.400z M1191 197.500 a1.700 2 0 1 0 3.400 0 v-3 h-3.400z" fill="#3a4d80"/><rect x="1189" y="194.500" width="3" height="2" fill="#3a4d80"/>
<text x="1185.500" y="214.500" font-size="6.500" fill="#3a4d80" font-weight="bold">ab</text><text x="1189.500" y="219" font-size="5" fill="#2e8b3a" font-weight="bold">ac</text>
<path d="M1187.500 223.500 v8.500 l2 -1.800 l1.600 3.300 l1.200 -0.600 l-1.600 -3.200 h2.600z" fill="#fff" stroke="#333" stroke-width="0.600"/>
</g>
<!-- /SECTION:ribbon -->
<!-- SECTION:pane -->
<g id="pane">
<rect x="192" y="254.500" width="188.500" height="530" fill="url(#gWork)"/>
<rect x="192" y="254.500" width="1215" height="2.500" fill="#dcebfb"/>
<rect x="192" y="257" width="188.500" height="17" fill="#aac4ea"/>
<rect x="192" y="273.800" width="188.500" height="2.400" fill="#bcd1ef"/>
<path d="M245 274 L251 260.500 q1.200 -3 4 -3 H297 q2.500 0 3.800 2.500 L309 274z" fill="url(#gTab2)" stroke="#8eabd6" stroke-width="0.700"/>
<path d="M192.500 274 V260 q0 -2.500 2.500 -2.500 H241 q2.500 0 3.800 2.500 L252.500 274z" fill="url(#gTab1)" stroke="#8eabd6" stroke-width="0.700"/>
<text x="197.500" y="269.300" font-size="9.800" font-weight="bold" fill="#1b2c6b" textLength="34.500" lengthAdjust="spacingAndGlyphs">Слайды</text>
<text x="253.700" y="269.300" font-size="9.600" fill="#2a4172" textLength="43" lengthAdjust="spacingAndGlyphs">Структура</text>
<path d="M369.500 262.300 l6.500 6.700 M376 262.300 l-6.500 6.700" stroke="#4a72b0" stroke-width="1.500"/>
<rect x="380.500" y="257" width="3.800" height="527.500" fill="#c3d7f3"/><path d="M380.500 257 v527.500" stroke="#8facd8" stroke-width="0.700"/>
<rect x="369.500" y="276" width="11" height="508.500" fill="#93aed8"/>
<rect x="370.300" y="288" width="9.200" height="160" rx="1.500" fill="url(#gThumbV)" stroke="#6f8dbd" stroke-width="0.600"/>
<path d="M372.500 366.800 h5 M372.500 368.400 h5 M372.500 370 h5" stroke="#7f9bc7" stroke-width="0.600"/>
<path d="M371.800 284 h6.400 l-3.200 -3.800z" fill="#4e6ea6"/><path d="M371.800 776 h6.400 l-3.200 3.800z" fill="#4e6ea6"/>
<rect x="194.500" y="276.800" width="170.200" height="91" rx="1.500" fill="url(#gSel)" stroke="#c7812f" stroke-width="0.800"/>
<path d="M194 784.500 V753 q0 -2 2 -2 H362.600 q2 0 2 2 V784.500z" fill="url(#gHov)" stroke="#e6b54d" stroke-width="0.800"/>
<rect x="211" y="376.0" width="151.500" height="85.500" fill="#34507f" fill-opacity="0.500"/>
<rect x="211" y="471.1" width="151.500" height="85.500" fill="#34507f" fill-opacity="0.500"/>
<rect x="211" y="566.5" width="151.500" height="85.500" fill="#34507f" fill-opacity="0.500"/>
<rect x="211" y="661.1" width="151.500" height="85.500" fill="#34507f" fill-opacity="0.500"/>
<g transform="translate(210,280) scale(0.221100)"><use href="#slide1"/></g>
<rect x="210" y="280" width="151" height="85" fill="none" stroke="#8a5a20" stroke-opacity="0.500" stroke-width="0.600"/>
<text x="197.300" y="291.3" font-size="9" font-weight="bold" fill="#ffffff">1</text>
<text x="197.300" y="385.8" font-size="9" font-weight="bold" fill="#ffffff">2</text>
<text x="197.300" y="480.9" font-size="9" font-weight="bold" fill="#ffffff">3</text>
<text x="197.300" y="576.3" font-size="9" font-weight="bold" fill="#ffffff">4</text>
<text x="197.300" y="670.9" font-size="9" font-weight="bold" fill="#ffffff">5</text>
<text x="197.300" y="765.7" font-size="9" font-weight="bold" fill="#ffffff">6</text>
<g transform="translate(210,374.5)"><rect x="0" y="0" width="151" height="85" fill="#fdfdfe"/><path d="M0 48 q30 -2 50 10 q30 16 70 2 q20 -6 31 -4 V80 H0z" fill="#eef0f3" fill-opacity="0.700"/><rect x="9.500" y="0" width="14.500" height="7" fill="#5a9bc6"/><path d="M0 80.300 H79 l-1.300 1.600 H0z" fill="#5a9bc6"/><rect x="0" y="82.500" width="151" height="2.500" fill="#0c4a78"/><path d="M18.5 14 l8 3.500 l1.500 9 l-6.500 6.500 h-6 l-6.500 -6.500 l1.500 -9z" fill="#a9c2ee" fill-opacity="0.850"/><circle cx="18.5" cy="23" r="4.300" fill="none" stroke="#c2913c" stroke-width="1.800"/><circle cx="18.5" cy="23" r="2" fill="#f7f1e3"/><path d="M18.5 27 V55" stroke="#b9852f" stroke-width="1.700"/><path d="M18.5 48 h3.500 M18.5 50.5 h4 M18.5 53 h3" stroke="#c2913c" stroke-width="1.300"/><path d="M33 22.3 H84" stroke="#333" stroke-width="0.9"/><path d="M33 27 H142" stroke="#4a7a9a" stroke-width="0.7"/><path d="M33 30.3 H130" stroke="#6b6b70" stroke-width="0.55"/><path d="M33 33.8 H131" stroke="#6b6b70" stroke-width="0.55"/><path d="M33 37.6 H129" stroke="#6b6b70" stroke-width="0.55"/><path d="M33 41.4 H72" stroke="#6b6b70" stroke-width="0.55"/><path d="M33 52.4 H133" stroke="#6b6b70" stroke-width="0.55"/><path d="M33 55.7 H90" stroke="#6b6b70" stroke-width="0.55"/></g>
<g transform="translate(210,469.6)"><rect x="0" y="0" width="151" height="85" fill="#fdfdfe"/><path d="M0 48 q30 -2 50 10 q30 16 70 2 q20 -6 31 -4 V80 H0z" fill="#eef0f3" fill-opacity="0.700"/><rect x="9.500" y="0" width="14.500" height="7" fill="#5a9bc6"/><path d="M0 80.300 H79 l-1.300 1.600 H0z" fill="#5a9bc6"/><rect x="0" y="82.500" width="151" height="2.500" fill="#0c4a78"/><path d="M14 -1 l8 3.500 l1.500 9 l-6.500 6.500 h-6 l-6.500 -6.500 l1.500 -9z" fill="#a9c2ee" fill-opacity="0.850"/><circle cx="14" cy="8" r="4.300" fill="none" stroke="#c2913c" stroke-width="1.800"/><circle cx="14" cy="8" r="2" fill="#f7f1e3"/><path d="M14 12 V40" stroke="#b9852f" stroke-width="1.700"/><path d="M14 33 h3.500 M14 35.5 h4 M14 38 h3" stroke="#c2913c" stroke-width="1.300"/><path d="M25.6 9.3 H69" stroke="#333" stroke-width="0.9"/><path d="M25.6 12.4 H150" stroke="#4a7a9a" stroke-width="0.7"/><path d="M25.6 17 H132" stroke="#6b6b70" stroke-width="0.55"/><path d="M25.6 20.6 H148" stroke="#6b6b70" stroke-width="0.55"/><path d="M25.6 24.5 H147" stroke="#6b6b70" stroke-width="0.55"/><path d="M25.6 28.6 H148" stroke="#6b6b70" stroke-width="0.55"/><path d="M25.6 35.5 H147" stroke="#6b6b70" stroke-width="0.55"/><path d="M25.6 39 H98" stroke="#6b6b70" stroke-width="0.55"/><path d="M12 42.300 H140" stroke="#3aa0c0" stroke-width="0.700" stroke-dasharray="2.500 1.500"/><path d="M12 47 H53" stroke="#333" stroke-width="0.9"/><path d="M12 50.3 H131" stroke="#4a7a9a" stroke-width="0.7"/><path d="M12 54.4 H116" stroke="#6b6b70" stroke-width="0.55"/><path d="M12 58 H126" stroke="#6b6b70" stroke-width="0.55"/><path d="M12 61.5 H112" stroke="#6b6b70" stroke-width="0.55"/><path d="M12 65.4 H27" stroke="#6b6b70" stroke-width="0.55"/><path d="M12 72 H120" stroke="#6b6b70" stroke-width="0.55"/><path d="M12 75.2 H58" stroke="#6b6b70" stroke-width="0.55"/><path d="M140 41 l8 3.500 l1.500 9 l-6.500 6.500 h-6 l-6.500 -6.500 l1.500 -9z" fill="#a9c2ee" fill-opacity="0.850"/><circle cx="140" cy="50" r="4.300" fill="none" stroke="#c2913c" stroke-width="1.800"/><circle cx="140" cy="50" r="2" fill="#f7f1e3"/><path d="M140 54 V78" stroke="#b9852f" stroke-width="1.700"/><path d="M140 71 h3.500 M140 73.5 h4 M140 76 h3" stroke="#c2913c" stroke-width="1.300"/></g>
<g transform="translate(210,565)"><rect x="0" y="0" width="151" height="85" fill="#fdfdfe"/><path d="M0 48 q30 -2 50 10 q30 16 70 2 q20 -6 31 -4 V80 H0z" fill="#eef0f3" fill-opacity="0.700"/><rect x="9.500" y="0" width="14.500" height="7" fill="#5a9bc6"/><path d="M0 80.300 H79 l-1.300 1.600 H0z" fill="#5a9bc6"/><rect x="0" y="82.500" width="151" height="2.500" fill="#0c4a78"/><path d="M14 -1 l8 3.500 l1.500 9 l-6.500 6.500 h-6 l-6.500 -6.500 l1.500 -9z" fill="#a9c2ee" fill-opacity="0.850"/><circle cx="14" cy="8" r="4.300" fill="none" stroke="#c2913c" stroke-width="1.800"/><circle cx="14" cy="8" r="2" fill="#f7f1e3"/><path d="M14 12 V40" stroke="#b9852f" stroke-width="1.700"/><path d="M14 33 h3.500 M14 35.5 h4 M14 38 h3" stroke="#c2913c" stroke-width="1.300"/><path d="M25 10 H90" stroke="#333" stroke-width="0.9"/><path d="M25 13.3 H146" stroke="#29456e" stroke-width="0.8"/><path d="M25 18.5 H133" stroke="#6b6b70" stroke-width="0.55"/><path d="M25 22.3 H134" stroke="#6b6b70" stroke-width="0.55"/><path d="M25 26 H133" stroke="#6b6b70" stroke-width="0.55"/><path d="M25 29.8 H138" stroke="#6b6b70" stroke-width="0.55"/><path d="M25 33.5 H80" stroke="#6b6b70" stroke-width="0.55"/><path d="M25 40.5 H140" stroke="#6b6b70" stroke-width="0.55"/><path d="M25 43.8 H84" stroke="#6b6b70" stroke-width="0.55"/><path d="M10 46.800 H132" stroke="#3aa0c0" stroke-width="0.700" stroke-dasharray="2.500 1.500"/><path d="M10 50.5 H78" stroke="#333" stroke-width="0.9"/><path d="M10 54 H131" stroke="#29456e" stroke-width="0.8"/><path d="M10 58.5 H124" stroke="#6b6b70" stroke-width="0.55"/><path d="M10 62 H118" stroke="#6b6b70" stroke-width="0.55"/><path d="M10 65.6 H112" stroke="#6b6b70" stroke-width="0.55"/><path d="M10 72 H118" stroke="#6b6b70" stroke-width="0.55"/><path d="M10 75.2 H112" stroke="#6b6b70" stroke-width="0.55"/><path d="M140 42 l8 3.500 l1.500 9 l-6.500 6.500 h-6 l-6.500 -6.500 l1.500 -9z" fill="#a9c2ee" fill-opacity="0.850"/><circle cx="140" cy="51" r="4.300" fill="none" stroke="#c2913c" stroke-width="1.800"/><circle cx="140" cy="51" r="2" fill="#f7f1e3"/><path d="M140 55 V80" stroke="#b9852f" stroke-width="1.700"/><path d="M140 73 h3.500 M140 75.5 h4 M140 78 h3" stroke="#c2913c" stroke-width="1.300"/></g>
<g transform="translate(210,659.6)"><rect x="0" y="0" width="151" height="85" fill="#fdfdfe"/><rect x="0" y="15" width="19" height="65" fill="#e4edf7"/><rect x="133" y="15" width="18" height="65" fill="#e4edf7"/><rect x="9.500" y="0" width="14.500" height="7" fill="#5a9bc6"/><rect x="19" y="16.500" width="51" height="63.500" fill="#e3ecf8"/><rect x="81.700" y="16.500" width="51.300" height="63.500" fill="#f6dccf"/><rect x="28" y="10.900" width="38.400" height="5.200" rx="1.500" fill="#2f5fc0"/><rect x="84" y="10.900" width="41" height="5.200" rx="1.500" fill="#e08a70"/><text x="44.700" y="7.300" font-size="3.900" font-weight="bold" fill="#1f2a44" textLength="62.600" lengthAdjust="spacingAndGlyphs">Ата-аналарға арналған бүктеттер</text><path d="M21 19.0 H67" stroke="#8a9bb8" stroke-width="0.5"/><path d="M21 21.6 H61" stroke="#8a9bb8" stroke-width="0.5"/><path d="M21 24.2 H65" stroke="#8a9bb8" stroke-width="0.5"/><path d="M21 26.8 H68" stroke="#8a9bb8" stroke-width="0.5"/><path d="M21 29.4 H68" stroke="#8a9bb8" stroke-width="0.5"/><path d="M21 37.2 H67" stroke="#8a9bb8" stroke-width="0.5"/><path d="M21 39.8 H65" stroke="#8a9bb8" stroke-width="0.5"/><path d="M21 42.4 H65" stroke="#8a9bb8" stroke-width="0.5"/><path d="M21 45.0 H65" stroke="#8a9bb8" stroke-width="0.5"/><path d="M21 50.2 H68" stroke="#8a9bb8" stroke-width="0.5"/><path d="M21 52.8 H61" stroke="#8a9bb8" stroke-width="0.5"/><path d="M21 55.4 H65" stroke="#8a9bb8" stroke-width="0.5"/><path d="M21 58.0 H67" stroke="#8a9bb8" stroke-width="0.5"/><path d="M21 60.6 H61" stroke="#8a9bb8" stroke-width="0.5"/><path d="M84 18.5 H124" stroke="#c79a8a" stroke-width="0.5"/><path d="M84 21.0 H130" stroke="#c79a8a" stroke-width="0.5"/><path d="M84 23.5 H128" stroke="#c79a8a" stroke-width="0.5"/><path d="M84 26.0 H124" stroke="#c79a8a" stroke-width="0.5"/><path d="M84 28.5 H130" stroke="#c79a8a" stroke-width="0.5"/><path d="M84 31.0 H128" stroke="#c79a8a" stroke-width="0.5"/><path d="M84 33.5 H124" stroke="#c79a8a" stroke-width="0.5"/><path d="M84 38.5 H124" stroke="#c79a8a" stroke-width="0.5"/><path d="M84 41.0 H130" stroke="#c79a8a" stroke-width="0.5"/><path d="M84 43.5 H130" stroke="#c79a8a" stroke-width="0.5"/><path d="M84 46.0 H124" stroke="#c79a8a" stroke-width="0.5"/><path d="M84 48.5 H124" stroke="#c79a8a" stroke-width="0.5"/><path d="M84 53.5 H124" stroke="#c79a8a" stroke-width="0.5"/><path d="M84 56.0 H128" stroke="#c79a8a" stroke-width="0.5"/><path d="M84 58.5 H124" stroke="#c79a8a" stroke-width="0.5"/><path d="M84 61.0 H131" stroke="#c79a8a" stroke-width="0.5"/><path d="M84 63.5 H130" stroke="#c79a8a" stroke-width="0.5"/><path d="M84 66.0 H130" stroke="#c79a8a" stroke-width="0.5"/><path d="M84 68.5 H130" stroke="#c79a8a" stroke-width="0.5"/><path d="M84 71.0 H131" stroke="#c79a8a" stroke-width="0.5"/><circle cx="57" cy="62.500" r="2" fill="#3a2a2a"/><path d="M51 80 v-9 q0 -5 5 -5 h2 q5 0 5 5 v9z" fill="#2f9a58"/><circle cx="64" cy="63.500" r="1.800" fill="#3a2a2a"/><path d="M60.500 80 v-8 q0 -5 4 -5 q4 0 4 5 v8z" fill="#4a73c8"/><circle cx="60.500" cy="70" r="1.500" fill="#f2b08f"/><path d="M58 80 v-5 q2.500 -3 5 0 v5z" fill="#f0e6dc"/><circle cx="124" cy="56" r="2" fill="#3a2a2a"/><path d="M119.500 80 v-16 q0 -5 4.500 -5 q4.500 0 4.500 5 v16z" fill="#6a8ad8"/><circle cx="129" cy="59" r="1.800" fill="#3a2a2a"/><path d="M126.500 80 v-14 q0 -4 3.500 -4 q3 0 3 4 v14z" fill="#2f9a58"/><rect x="120" y="72" width="5" height="8" fill="#e46a6a"/><path d="M122 52 q1.500 -2 3 0 q0 1.500 -1.500 2.500 q-1.500 -1 -1.500 -2.500z" fill="#e23a4a"/><path d="M0 80.300 H79 l-1.300 1.600 H0z" fill="#5a9bc6"/><rect x="0" y="82.500" width="151" height="2.500" fill="#0c4a78"/></g>
<g transform="translate(210,754.4)"><rect x="0" y="0" width="151" height="31" fill="#fdf8ec"/><circle cx="46" cy="7" r="5.500" fill="#f8c92f"/><g font-size="3.700" font-weight="bold" fill="#3a3a3a"><text x="14.5" y="17.0" textLength="123" lengthAdjust="spacingAndGlyphs">Ертеңдік, талаптардың қатаруі баланың және басындағы адамгершілік,</text><text x="12.7" y="21.3" textLength="130.5" lengthAdjust="spacingAndGlyphs">жауапкершілік, әділдік, қайырымдылық, имбезалалық секілді қасиеттерді</text><text x="18" y="25.6" textLength="114" lengthAdjust="spacingAndGlyphs">аңдау. Бастауыш мектеп оқушысының ерік сапаларының дамуы</text><text x="13" y="29.9" textLength="128" lengthAdjust="spacingAndGlyphs">байқалады, жақсылықпен және жауапкершілікпен жұмысын аяқ қалдырмау</text></g></g>
</g>
<!-- /SECTION:pane -->
<!-- SECTION:work -->
<g id="work">
<rect x="557.500" y="259.600" width="683.500" height="12" fill="#fbfcfe"/>
<g><text x="576.7" y="268.600" text-anchor="middle" font-size="8.200" fill="#4a4a4a">12</text><text x="603.6" y="268.600" text-anchor="middle" font-size="8.200" fill="#4a4a4a">11</text><text x="630.5" y="268.600" text-anchor="middle" font-size="8.200" fill="#4a4a4a">10</text><text x="657.4" y="268.600" text-anchor="middle" font-size="8.200" fill="#4a4a4a">9</text><text x="684.3" y="268.600" text-anchor="middle" font-size="8.200" fill="#4a4a4a">8</text><text x="711.2" y="268.600" text-anchor="middle" font-size="8.200" fill="#4a4a4a">7</text><text x="738.1" y="268.600" text-anchor="middle" font-size="8.200" fill="#4a4a4a">6</text><text x="765.0" y="268.600" text-anchor="middle" font-size="8.200" fill="#4a4a4a">5</text><text x="791.9" y="268.600" text-anchor="middle" font-size="8.200" fill="#4a4a4a">4</text><text x="818.8" y="268.600" text-anchor="middle" font-size="8.200" fill="#4a4a4a">3</text><text x="845.7" y="268.600" text-anchor="middle" font-size="8.200" fill="#4a4a4a">2</text><text x="872.6" y="268.600" text-anchor="middle" font-size="8.200" fill="#4a4a4a">1</text><text x="899.5" y="268.600" text-anchor="middle" font-size="8.200" fill="#4a4a4a">0</text><text x="926.4" y="268.600" text-anchor="middle" font-size="8.200" fill="#4a4a4a">1</text><text x="953.3" y="268.600" text-anchor="middle" font-size="8.200" fill="#4a4a4a">2</text><text x="980.2" y="268.600" text-anchor="middle" font-size="8.200" fill="#4a4a4a">3</text><text x="1007.1" y="268.600" text-anchor="middle" font-size="8.200" fill="#4a4a4a">4</text><text x="1034.0" y="268.600" text-anchor="middle" font-size="8.200" fill="#4a4a4a">5</text><text x="1060.9" y="268.600" text-anchor="middle" font-size="8.200" fill="#4a4a4a">6</text><text x="1087.8" y="268.600" text-anchor="middle" font-size="8.200" fill="#4a4a4a">7</text><text x="1114.7" y="268.600" text-anchor="middle" font-size="8.200" fill="#4a4a4a">8</text><text x="1141.6" y="268.600" text-anchor="middle" font-size="8.200" fill="#4a4a4a">9</text><text x="1168.5" y="268.600" text-anchor="middle" font-size="8.200" fill="#4a4a4a">10</text><text x="1195.4" y="268.600" text-anchor="middle" font-size="8.200" fill="#4a4a4a">11</text><text x="1222.3" y="268.600" text-anchor="middle" font-size="8.200" fill="#4a4a4a">12</text></g>
<path d="M563.2 263.800 v3.200 M590.2 263.800 v3.200 M617.0 263.800 v3.200 M644.0 263.800 v3.200 M670.9 263.800 v3.200 M697.8 263.800 v3.200 M724.6 263.800 v3.200 M751.5 263.800 v3.200 M778.5 263.800 v3.200 M805.4 263.800 v3.200 M832.2 263.800 v3.200 M859.1 263.800 v3.200 M886.0 263.800 v3.200 M913.0 263.800 v3.200 M939.9 263.800 v3.200 M966.8 263.800 v3.200 M993.6 263.800 v3.200 M1020.5 263.800 v3.200 M1047.5 263.800 v3.200 M1074.3 263.800 v3.200 M1101.2 263.800 v3.200 M1128.2 263.800 v3.200 M1155.0 263.800 v3.200 M1182.0 263.800 v3.200 M1208.8 263.800 v3.200 M1235.8 263.800 v3.200 M570.0 265 v0.900 M583.4 265 v0.900 M596.9 265 v0.900 M610.3 265 v0.900 M623.8 265 v0.900 M637.2 265 v0.900 M650.7 265 v0.900 M664.1 265 v0.900 M677.6 265 v0.900 M691.0 265 v0.900 M704.5 265 v0.900 M717.9 265 v0.900 M731.4 265 v0.900 M744.8 265 v0.900 M758.3 265 v0.900 M771.7 265 v0.900 M785.2 265 v0.900 M798.6 265 v0.900 M812.1 265 v0.900 M825.5 265 v0.900 M839.0 265 v0.900 M852.4 265 v0.900 M865.9 265 v0.900 M879.3 265 v0.900 M892.8 265 v0.900 M906.2 265 v0.900 M919.7 265 v0.900 M933.1 265 v0.900 M946.6 265 v0.900 M960.0 265 v0.900 M973.5 265 v0.900 M986.9 265 v0.900 M1000.4 265 v0.900 M1013.8 265 v0.900 M1027.3 265 v0.900 M1040.7 265 v0.900 M1054.2 265 v0.900 M1067.6 265 v0.900 M1081.1 265 v0.900 M1094.5 265 v0.900 M1108.0 265 v0.900 M1121.4 265 v0.900 M1134.9 265 v0.900 M1148.3 265 v0.900 M1161.8 265 v0.900 M1175.2 265 v0.900 M1188.7 265 v0.900 M1202.1 265 v0.900 M1215.6 265 v0.900 M1229.0 265 v0.900 " stroke="#555" stroke-width="0.700"/>
<path d="M838.500 259.600 v12" stroke="#222" stroke-width="0.900" stroke-dasharray="1.500 1.200"/>
<rect x="388" y="322" width="11.300" height="385" fill="#fbfcfe"/>
<g><text transform="translate(396.800,326.0) rotate(-90)" text-anchor="middle" font-size="8" fill="#4a4a4a">7</text><text transform="translate(396.800,352.9) rotate(-90)" text-anchor="middle" font-size="8" fill="#4a4a4a">6</text><text transform="translate(396.800,379.8) rotate(-90)" text-anchor="middle" font-size="8" fill="#4a4a4a">5</text><text transform="translate(396.800,406.7) rotate(-90)" text-anchor="middle" font-size="8" fill="#4a4a4a">4</text><text transform="translate(396.800,433.6) rotate(-90)" text-anchor="middle" font-size="8" fill="#4a4a4a">3</text><text transform="translate(396.800,460.5) rotate(-90)" text-anchor="middle" font-size="8" fill="#4a4a4a">2</text><text transform="translate(396.800,487.4) rotate(-90)" text-anchor="middle" font-size="8" fill="#4a4a4a">1</text><text transform="translate(396.800,514.3) rotate(-90)" text-anchor="middle" font-size="8" fill="#4a4a4a">0</text><text transform="translate(396.800,541.2) rotate(-90)" text-anchor="middle" font-size="8" fill="#4a4a4a">1</text><text transform="translate(396.800,568.1) rotate(-90)" text-anchor="middle" font-size="8" fill="#4a4a4a">2</text><text transform="translate(396.800,595.0) rotate(-90)" text-anchor="middle" font-size="8" fill="#4a4a4a">3</text><text transform="translate(396.800,621.9) rotate(-90)" text-anchor="middle" font-size="8" fill="#4a4a4a">4</text><text transform="translate(396.800,648.8) rotate(-90)" text-anchor="middle" font-size="8" fill="#4a4a4a">5</text><text transform="translate(396.800,675.7) rotate(-90)" text-anchor="middle" font-size="8" fill="#4a4a4a">6</text><text transform="translate(396.800,702.6) rotate(-90)" text-anchor="middle" font-size="8" fill="#4a4a4a">7</text></g>
<path d="M392 339.4 h3.200 M392 366.3 h3.200 M392 393.2 h3.200 M392 420.1 h3.200 M392 447.0 h3.200 M392 473.9 h3.200 M392 500.8 h3.200 M392 527.8 h3.200 M392 554.6 h3.200 M392 581.5 h3.200 M392 608.4 h3.200 M392 635.3 h3.200 M392 662.2 h3.200 M392 689.1 h3.200 M393.200 332.7 h0.900 M393.200 346.2 h0.900 M393.200 359.6 h0.900 M393.200 373.1 h0.900 M393.200 386.5 h0.900 M393.200 400.0 h0.900 M393.200 413.4 h0.900 M393.200 426.9 h0.900 M393.200 440.3 h0.900 M393.200 453.8 h0.900 M393.200 467.2 h0.900 M393.200 480.7 h0.900 M393.200 494.1 h0.900 M393.200 507.6 h0.900 M393.200 521.0 h0.900 M393.200 534.5 h0.900 M393.200 547.9 h0.900 M393.200 561.4 h0.900 M393.200 574.8 h0.900 M393.200 588.3 h0.900 M393.200 601.7 h0.900 M393.200 615.2 h0.900 M393.200 628.6 h0.900 M393.200 642.1 h0.900 M393.200 655.5 h0.900 M393.200 669.0 h0.900 M393.200 682.4 h0.900 M393.200 695.9 h0.900 " stroke="#555" stroke-width="0.700"/>
<path d="M388 451.500 h11.300" stroke="#222" stroke-width="0.900" stroke-dasharray="1.500 1.200"/>
<rect x="1395.500" y="278" width="11.500" height="474" fill="#93aed8"/>
<rect x="1395.500" y="712" width="11.500" height="40" fill="#a9c1e6"/>
<rect x="1396.300" y="290.500" width="10" height="58" rx="1.500" fill="url(#gThumbV)" stroke="#6f8dbd" stroke-width="0.600"/>
<path d="M1399 318 h4.500 M1399 319.500 h4.500 M1399 321 h4.500" stroke="#7f9bc7" stroke-width="0.600"/>
<path d="M1398 286 h6.400 l-3.200 -3.800z" fill="#4e6ea6"/><path d="M1398 706 h6.400 l-3.200 3.800z" fill="#5d7cb2"/>
<path d="M1398.500 720 h5.400 l-2.700 -3z M1398.500 723.500 h5.400 l-2.700 -3z M1398.500 731.500 h5.400 l-2.700 3z M1398.500 735 h5.400 l-2.700 3z" fill="#1d2a4a"/>
<rect x="384.300" y="752" width="1022.700" height="4" fill="#bdd3f1"/>
<rect x="385" y="756" width="1010.500" height="27.800" fill="#ffffff"/>
<rect x="1395.500" y="756" width="11.500" height="27.800" fill="#b8cdec"/>
<path d="M1398 765 h6.400 l-3.200 -3.600z M1398 774.500 h6.400 l-3.200 3.600z" fill="#93a9cd"/>
<text x="392.500" y="772.300" font-size="12.800" fill="#111" textLength="100.700" lengthAdjust="spacingAndGlyphs">Заметки к слайду</text>
</g>
<!-- /SECTION:work -->
<!-- SECTION:slide -->
<rect x="560.500" y="324.500" width="683" height="384" fill="#3d5a8c" fill-opacity="0.450" filter="url(#bS)"/>
<use href="#slide1" transform="translate(558,322)"/>
<g id="cursor">
<path d="M838.800 450.500 v9.500 l2.100 -2 l1.700 3.800 l1.500 -0.700 l-1.700 -3.700 h3z" fill="#ffffff" stroke="#0a1020" stroke-width="0.800" stroke-linejoin="round"/>
<path d="M838.800 446 v4 M834.500 450.800 h3 M841 450.800 h3" stroke="#ffffff" stroke-width="1.300"/>
<circle cx="838.800" cy="446.700" r="0.900" fill="#0a1020"/><circle cx="834.600" cy="450.800" r="0.900" fill="#0a1020"/><circle cx="843.200" cy="450.800" r="0.900" fill="#0a1020"/>
</g>
<!-- /SECTION:slide -->
<!-- SECTION:status -->
<g id="status">
<rect x="192" y="784.300" width="1215" height="16.700" fill="url(#gStat)"/>
<g font-size="8.800" fill="#2f4f87">
<text x="197.200" y="796" textLength="47" lengthAdjust="spacingAndGlyphs">Слайд 1 из 7</text>
<text x="256" y="796" textLength="48.600" lengthAdjust="spacingAndGlyphs">"Тема Office"</text>
<text x="339.400" y="796" textLength="62" lengthAdjust="spacingAndGlyphs">Русский (Россия)</text>
<text x="1253.800" y="796" textLength="15.600" lengthAdjust="spacingAndGlyphs">90%</text>
</g>
<path d="M249.500 786 v13 M310.400 786 v13 M407 786 v13 M1200.500 786 v13" stroke="#9db7dc" stroke-width="0.800"/><path d="M250.300 786 v13 M311.200 786 v13 M407.800 786 v13 M1201.300 786 v13" stroke="#e4eefb" stroke-width="0.800"/>
<path d="M318 791 q4 -3 8 0 v4 q-4 2 -8 0z" fill="#e9eef6" stroke="#6d7fa6" stroke-width="0.600"/><path d="M322 792.500 l2 2.500 l4.500 -6.500" fill="none" stroke="#3b56b8" stroke-width="1.200"/>
<rect x="1204.700" y="785.800" width="42.800" height="13.400" rx="1.500" fill="#d5e3f6" stroke="#9db7dc" stroke-width="0.700"/>
<rect x="1205.400" y="786.500" width="13.500" height="12" fill="#e9f0fa"/>
<rect x="1208.500" y="789" width="8" height="7" fill="#fff" stroke="#45526d" stroke-width="0.800"/><rect x="1209.300" y="789.800" width="2.200" height="5.400" fill="#45526d"/>
<g fill="none" stroke="#45526d" stroke-width="0.700"><rect x="1222.300" y="788.800" width="3" height="2.600"/><rect x="1227" y="788.800" width="3" height="2.600"/><rect x="1222.300" y="793.300" width="3" height="2.600"/><rect x="1227" y="793.300" width="3" height="2.600"/></g>
<path d="M1237.500 789 h7 v4 h-7z M1241 793 v3 M1238.500 796.500 h5" fill="none" stroke="#45526d" stroke-width="0.900"/>
<circle cx="1286.300" cy="792" r="5.300" fill="#e4edf9" stroke="#7f96ba" stroke-width="0.800"/><path d="M1283.500 792 h5.600" stroke="#45526d" stroke-width="1.100"/>
<circle cx="1378.800" cy="792" r="5.300" fill="#e4edf9" stroke="#7f96ba" stroke-width="0.800"/><path d="M1376 792 h5.600 M1378.800 789.200 v5.600" stroke="#45526d" stroke-width="1.100"/>
<path d="M1292.500 792 h80.500" stroke="#7f96ba" stroke-width="0.800"/><path d="M1332.500 789.500 v5" stroke="#7f96ba" stroke-width="0.700"/>
<path d="M1326.300 788 h5 v5 l-2.500 2.800 l-2.500 -2.800z" fill="#e9eff8" stroke="#5d7197" stroke-width="0.700"/>
<rect x="1392" y="786.800" width="10.500" height="10.500" fill="#f2f6fc" stroke="#45526d" stroke-width="0.700"/><path d="M1394 788.800 l2 2 M1400.500 788.800 l-2 2 M1394 795.300 l2 -2 M1400.500 795.300 l-2 -2" stroke="#45526d" stroke-width="0.800"/>
</g>
<!-- /SECTION:status -->
</svg>
</div>
<!-- annotate button -->
<div id="annot" class="abs" style="left:20px;top:745px;width:32px;height:32px">
<svg width="32" height="32" viewBox="20 745 32 32">
<circle cx="36" cy="761" r="16" fill="#2b2b2b"/>
<path d="M30.500 765.200 l1 -3.700 l7.800 -7.800 a1.300 1.300 0 0 1 1.800 0 l1 1 a1.300 1.300 0 0 1 0 1.800 l-7.800 7.800z M37.800 755.200 l2.800 2.800" fill="none" stroke="#25d98c" stroke-width="1.400" stroke-linejoin="round"/>
<path d="M29 768.800 h13.500" stroke="#25d98c" stroke-width="1.400" stroke-linecap="round"/>
</svg>
</div>
<!-- ZOOM BOTTOM BAR -->
<div id="zbar" class="abs">
<svg class="abs" width="1600" height="59" viewBox="0 801 1600 59" style="left:0;top:0" font-family="Liberation Sans, sans-serif">
<rect x="0" y="801" width="1600" height="59" fill="#000"/>
<g fill="none" stroke="#f2f2f2" stroke-width="1.700" stroke-linecap="round" stroke-linejoin="round">
<rect x="48.800" y="812.500" width="6.800" height="13" rx="3.400"/><path d="M45.500 822.500 a6.700 6.700 0 0 0 13.400 0 M52.200 829.500 v4.500 M48.500 834.300 h7.400"/>
<path d="M81 825 l3.500 -3.500 l3.500 3.500"/>
<rect x="133.800" y="816.500" width="15.500" height="12.500" rx="2.500"/><path d="M149.500 821.500 l6.500 -3.500 v9.500 l-6.500 -3.500"/>
<circle cx="539.800" cy="818.700" r="2.900"/><path d="M534.800 830.300 v-1.300 a3.800 3.800 0 0 1 3.800 -3.800 h2.400 a3.800 3.800 0 0 1 3.800 3.800 v1.300z"/><circle cx="547.300" cy="820.200" r="2.300"/><path d="M546.300 825.300 h2 a3.400 3.400 0 0 1 3.400 3.400 v1.600 h-4"/>
<path d="M592.500 825 l3.500 -3.500 l3.500 3.500"/>
<path d="M647 816.300 h10.500 a3.800 3.800 0 0 1 3.800 3.800 v4.500 a3.800 3.800 0 0 1 -3.800 3.800 h-6 l-4 3.500 v-3.500 h-0.500 a3.800 3.800 0 0 1 -3.800 -3.800 v-4.500 a3.800 3.800 0 0 1 3.800 -3.800z"/><path d="M650.500 813.300 h9 a3.800 3.800 0 0 1 3.800 3.800 v5.500 a3 3 0 0 1 -1.500 2.600"/>
<path d="M682.500 825 l3.500 -3.500 l3.500 3.500"/>
<path d="M746.500 832.500 c-5 -4 -10.800 -8 -10.800 -13 c0 -3.200 2.400 -5.200 5 -5.200 c2.400 0 4.300 1.300 5.800 3.500 c1.500 -2.200 3.400 -3.500 5.800 -3.500 c2.600 0 5 2 5 5.200 c0 5 -5.800 9 -10.800 13z" transform="rotate(-8 746.500 823)"/>
<circle cx="964.500" cy="823" r="10.800"/><path d="M964.700 821.500 v6.500 M962.500 821.500 h2.200 M962 828.300 h5.400" stroke-width="1.600"/>
<circle cx="1084" cy="817" r="3.300"/><circle cx="1071.500" cy="829" r="3.300"/><path d="M1068.300 820.500 v-3 a3.500 3.500 0 0 1 3.500 -3.500 h3.500 M1087.500 826 v3 a3.500 3.500 0 0 1 -3.500 3.500 h-3.500"/>
<circle cx="1174.800" cy="823" r="10.800"/>
<circle cx="1548.700" cy="816.800" r="2.900" stroke-width="1.400"/><path d="M1546.500 821.500 l-4 3 l1.200 2.500 l3 -1.800 l-0.800 4 l-3.800 4.500 l2.300 1.300 l4.300 -5 l1.300 5 h2.800 l-1.300 -8.500 l2.800 1 l1 -2.500 l-4.500 -3.500z" stroke-width="1.400"/>
</g>
<circle cx="964.600" cy="817.700" r="1.300" fill="#f2f2f2"/>
<circle cx="647.500" cy="822.300" r="1" fill="#f2f2f2"/><circle cx="651.300" cy="822.300" r="1" fill="#f2f2f2"/><circle cx="655.100" cy="822.300" r="1" fill="#f2f2f2"/>
<circle cx="1169.300" cy="823" r="1.300" fill="#f2f2f2"/><circle cx="1174.800" cy="823" r="1.300" fill="#f2f2f2"/><circle cx="1180.300" cy="823" r="1.300" fill="#f2f2f2"/>
<path d="M41.500 833.800 L63.500 811.300" stroke="#000" stroke-width="4.500"/><path d="M41.500 833.800 L63.500 811.300" stroke="#e9305b" stroke-width="1.800" stroke-linecap="round"/>
<path d="M134 833.800 L156.500 811.300" stroke="#000" stroke-width="4.500"/><path d="M134 833.800 L156.500 811.300" stroke="#e9305b" stroke-width="1.800" stroke-linecap="round"/>
<rect x="834" y="814" width="24" height="18.800" rx="3.500" fill="#23d98d"/><path d="M846 828 v-9 M842 822.300 l4 -4 l4 4" fill="none" stroke="#06130c" stroke-width="2.200" stroke-linecap="round" stroke-linejoin="round"/>
<path d="M1549.500 811.300 h14 v20.500 M1563.500 811.300 l-6.300 4 v18.500 l6.300 -2" fill="none" stroke="#e8245c" stroke-width="1.600" stroke-linejoin="round"/>
<text x="39" y="849.6" font-size="12.3" fill="#dadada" textLength="26.5" lengthAdjust="spacingAndGlyphs">Звук</text>
<text x="128.8" y="849.6" font-size="12.3" fill="#dadada" textLength="33" lengthAdjust="spacingAndGlyphs">Видео</text>
<text x="514" y="849.6" font-size="12.3" fill="#dadada" textLength="57.5" lengthAdjust="spacingAndGlyphs">Участники</text>
<text x="558.8" y="825.3" font-size="11.3" fill="#dadada" textLength="10.2" lengthAdjust="spacingAndGlyphs">11</text>
<text x="642.5" y="849.6" font-size="12.3" fill="#dadada" textLength="20" lengthAdjust="spacingAndGlyphs">Чат</text>
<text x="706" y="849.6" font-size="12.3" fill="#dadada" textLength="83" lengthAdjust="spacingAndGlyphs">Отреагировать</text>
<text x="813.5" y="849.6" font-size="12.3" fill="#dadada" textLength="65.5" lengthAdjust="spacingAndGlyphs">Поделиться</text>
<text x="902.5" y="849.6" font-size="12.3" fill="#dadada" textLength="123.5" lengthAdjust="spacingAndGlyphs">Данные конференции</text>
<text x="1042.5" y="849.6" font-size="12.3" fill="#dadada" textLength="72.5" lengthAdjust="spacingAndGlyphs">Приложения</text>
<text x="1131" y="849.6" font-size="12.3" fill="#dadada" textLength="89" lengthAdjust="spacingAndGlyphs">Дополнительно</text>
<text x="1534.7" y="849.6" font-size="12.3" fill="#dadada" textLength="34" lengthAdjust="spacingAndGlyphs">Выйти</text>
</svg>
</div>
<!-- TASKBAR -->
<div id="task" class="abs">
<svg class="abs" width="1600" height="40" viewBox="0 860 1600 40" style="left:0;top:0" font-family="Liberation Sans, sans-serif">
<defs><clipPath id="cSearch"><rect x="48" y="860" width="287.500" height="40"/></clipPath><linearGradient id="gEdge" x1="0" x2="1" y1="0" y2="1"><stop offset="0" stop-color="#35c1b0"/><stop offset="0.500" stop-color="#1b9de2"/><stop offset="1" stop-color="#0c59a4"/></linearGradient></defs>
<rect x="0" y="860" width="1600" height="40" fill="#25323a"/>
<g fill="#ffffff"><path d="M16 874.200 l6.800 -0.950 v6.300 h-6.800z M23.800 873.100 l8.200 -1.150 v7.600 h-8.200z M16 880.550 h6.800 v6.300 l-6.800 -0.950z M23.800 880.550 h8.200 v7.600 l-8.200 -1.150z"/></g>
<rect x="48" y="860" width="287.500" height="40" fill="#f3f3f3"/>
<circle cx="70.500" cy="877.500" r="5" fill="none" stroke="#222" stroke-width="1.400"/><path d="M66.800 881.300 l-6.300 6.300" stroke="#222" stroke-width="1.500" stroke-linecap="round"/>
<text x="88.8" y="885.5" font-size="15.5" fill="#3a3a3a" textLength="42.5" lengthAdjust="spacingAndGlyphs">Поиск</text>
<g clip-path="url(#cSearch)">
<ellipse cx="305" cy="906" rx="48" ry="14" fill="#5e9a3c"/>
<path d="M300 880 q10 -22 22 -14 q6 8 -4 16 q8 8 2 18 h-14 q-10 -8 -6 -20z" fill="#f39a1e"/><path d="M318 868 q6 -6 8 2 q-2 8 -8 10z" fill="#fbe3b8"/>
<path d="M292 872 q6 4 10 12 q4 10 0 18 h-16 q-6 -12 -2 -24z" fill="#e8861a"/>
<path d="M267 866 l3 -5 l3 4 l4 -1 l3 -4 l2 6 q4 5 0 10 l-4 4 q4 6 2 14 l-2 6 h-10 q-6 -12 -2 -20 q-4 -6 1 -14z" fill="#ee8f1c"/>
<path d="M286 876 l2 -5 l3 4 l4 0 l3 -4 l2 6 q3 5 0 9 l-4 4 q4 6 3 12 l-1 4 h-10 q-5 -10 -2 -16 q-4 -6 0 -14z" fill="#f39a1e"/>
<path d="M271 872 q3 6 6 0 l-1 6 q-2 2 -4 0z M290 882 q3 5 6 0 l-1 5 q-2 2 -4 0z" fill="#fff4e0"/>
<circle cx="272" cy="870.500" r="0.900" fill="#222"/><circle cx="277.500" cy="870.500" r="0.900" fill="#222"/><circle cx="291" cy="880.500" r="0.900" fill="#222"/><circle cx="296" cy="880.500" r="0.900" fill="#222"/>
</g>
<circle cx="360" cy="880" r="6.800" fill="none" stroke="#fff" stroke-width="2.200"/>
<g fill="none" stroke="#fff" stroke-width="1.300"><rect x="401.500" y="875.500" width="9" height="7.500"/><path d="M400 872.500 h11.500 M400 886 h11.500 M414.300 872 v3 M414.300 877 v4.500 M414.300 883.500 v3"/></g>
<circle cx="458.700" cy="880" r="11.500" fill="url(#gEdge)"/><path d="M450 884 q0 -9 9 -9 q8 0 9 7 h-11 q0 6 7 7 q-4 3 -9 1 q-5 -2 -5 -6z" fill="#0b4f94" fill-opacity="0.750"/><path d="M448 878 q3 -9 11 -9 q9 0 11 9 q-3 -5 -10 -5 q-8 0 -12 5z" fill="#5fe08a" fill-opacity="0.700"/>
<rect x="484.200" y="860" width="48" height="40" fill="#b36a36"/><rect x="484.200" y="897.500" width="48" height="2.500" fill="#f47b20"/>
<circle cx="507.800" cy="880" r="12" fill="#ffffff"/><path d="M501.500 872.500 l6.300 8 l6.300 -8 M507.800 880.500 v8" fill="none" stroke="#f4312c" stroke-width="2.600" stroke-linecap="round" stroke-linejoin="round"/>
<circle cx="557" cy="879" r="11.500" fill="#e33b2e"/><path d="M557 879 L547.040 884.750 A11.500 11.500 0 0 0 557 890.500 L562.750 880.540z" fill="#2da94f"/><path d="M557 879 L547.040 884.750 A11.500 11.500 0 0 0 562.750 888.960z" fill="#2da94f"/><path d="M557 879 l5.750 9.960 A11.500 11.500 0 0 0 566.960 873.250z" fill="#fcc31a"/>
<circle cx="557" cy="879" r="5.300" fill="#fff"/><circle cx="557" cy="879" r="4.200" fill="#3f83ee"/>
<circle cx="563.500" cy="886.500" r="5.500" fill="#7a8a96" stroke="#25323a" stroke-width="0.800"/><text x="561.200" y="889" font-size="6.500" fill="#fff">л</text>
<ellipse cx="606" cy="880" rx="9" ry="12" fill="#1a1a1a" transform="rotate(-25 606 880)"/><ellipse cx="603.500" cy="884" rx="5" ry="6" fill="#8d9398" transform="rotate(-25 603.500 884)"/><ellipse cx="603" cy="884.500" rx="2.500" ry="3" fill="#e6e8ea" transform="rotate(-25 603 884.500)"/><path d="M596 870 q6 -5 14 2" stroke="#c9cdd1" stroke-width="1.500" fill="none"/>
<path d="M643 871 h8 l2 2.500 h12.500 v16 h-22.500z" fill="#f4b93a"/><rect x="643" y="875.500" width="22.500" height="14" fill="#fad566"/><rect x="648" y="884" width="12.500" height="5.500" fill="#3f8fd6"/><rect x="652" y="886.500" width="4.500" height="3" fill="#fad566"/>
<path d="M694 871 l16 -2 v22 l-16 -2z" fill="#e9eef6" stroke="#8ea4c9" stroke-width="0.600"/><rect x="697" y="872" width="16" height="17" fill="#f7f9fc" stroke="#9fb2d2" stroke-width="0.600"/><rect x="692.500" y="874" width="12" height="12" fill="#2a5fb4"/><text x="694" y="884" font-size="9.500" font-weight="bold" fill="#fff" font-style="italic">W</text><path d="M706 876 h5.500 M706 879 h5.500 M706 882 h5.500 M706 885 h5.500" stroke="#7f96c0" stroke-width="0.800"/>
<rect x="729" y="860" width="47.500" height="40" fill="#47525a"/>
<rect x="740.500" y="868.500" width="24.500" height="23" rx="9" fill="#1463ea"/><text x="745" y="884" font-size="11" font-weight="bold" fill="#fff" textLength="15.500" lengthAdjust="spacingAndGlyphs">zm</text>
<rect x="439" y="898" width="40.0" height="2" fill="#76b9ed"/>
<rect x="536.7" y="898" width="44.1" height="2" fill="#76b9ed"/>
<rect x="586" y="898" width="40.0" height="2" fill="#76b9ed"/>
<rect x="634.6" y="898" width="39.9" height="2" fill="#76b9ed"/>
<rect x="684.5" y="898" width="39.3" height="2" fill="#76b9ed"/>
<rect x="729" y="898" width="47.5" height="2" fill="#76b9ed"/>
<circle cx="1158" cy="880" r="10" fill="#f7941d"/><path d="M1150 878 a10 10 0 0 1 12 -7 a10 10 0 0 0 -10 14z" fill="#fbb040"/><path d="M1157.500 888 a3.600 3.600 0 0 1 0.500 -7.100 a5 5 0 0 1 9.500 0.500 a3.400 3.400 0 0 1 0.500 6.600z" fill="#c7ddf2"/>
<text x="1178.5" y="885.3" font-size="14.5" fill="#ffffff" textLength="29.3" lengthAdjust="spacingAndGlyphs">21°C</text>
<text x="1217.2" y="885.3" font-size="14.5" fill="#ffffff" textLength="81.8" lengthAdjust="spacingAndGlyphs">Mostly sunny</text>
<path d="M1323.500 882.500 l5.500 -5.500 l5.500 5.500" fill="none" stroke="#fff" stroke-width="1.400"/>
<rect x="1349.300" y="871.500" width="6.500" height="11" rx="3.200" fill="#fff"/><path d="M1347.500 879.500 a5 5 0 0 0 10 0 M1352.500 884.500 v3 M1349.500 887.500 h6" fill="none" stroke="#fff" stroke-width="1.200"/>
<g fill="none" stroke="#fff" stroke-width="1.200"><rect x="1372.500" y="874" width="12" height="8.500"/><path d="M1378.500 882.500 v3.500 M1374.500 886.500 h8"/><rect x="1368.800" y="872.300" width="4.500" height="4.500" fill="#25323a"/></g>
<path d="M1393.500 878 h3 l4 -4 v12 l-4 -4 h-3z" fill="none" stroke="#fff" stroke-width="1.200" stroke-linejoin="round"/><path d="M1403 876.500 q2.500 3.500 0 7 M1405.500 874.500 q4 5.500 0 11 M1408 873 q5.500 7 0 14" fill="none" stroke="#fff" stroke-width="1.100"/>
<path d="M1421.500 886 q3 -9 8 -11 q3 -1 3 2 q-1 4 -7 7 M1424 888 q6 0 12 -8 M1428 873.500 l6 -2.500" fill="none" stroke="#fff" stroke-width="1.300" stroke-linecap="round"/>
<text x="1452.3" y="884.8" font-size="12" fill="#ffffff" textLength="21" lengthAdjust="spacingAndGlyphs">ҚАЗ</text>
<text x="1500.7" y="875" font-size="12.3" fill="#ffffff" textLength="26.5" lengthAdjust="spacingAndGlyphs">11:37</text>
<text x="1487.8" y="892.6" font-size="12.3" fill="#ffffff" textLength="52.6" lengthAdjust="spacingAndGlyphs">10.04.2025</text>
<path d="M1559.500 872.500 h15 v10.500 h-10 l-3 3 v-3 h-2z" fill="#fff"/><path d="M1562 875.500 h10 M1562 878 h10 M1562 880.500 h7" stroke="#25323a" stroke-width="0.800"/>
<circle cx="1574.500" cy="886.700" r="6.500" fill="#25323a" stroke="#b8c0c6" stroke-width="1.100"/><text x="1571.600" y="890.500" font-size="10.500" fill="#fff">3</text>
<path d="M1595.500 860 v40" stroke="#5a6a74" stroke-width="1"/>
</svg>
</div>
</body>
</html>
